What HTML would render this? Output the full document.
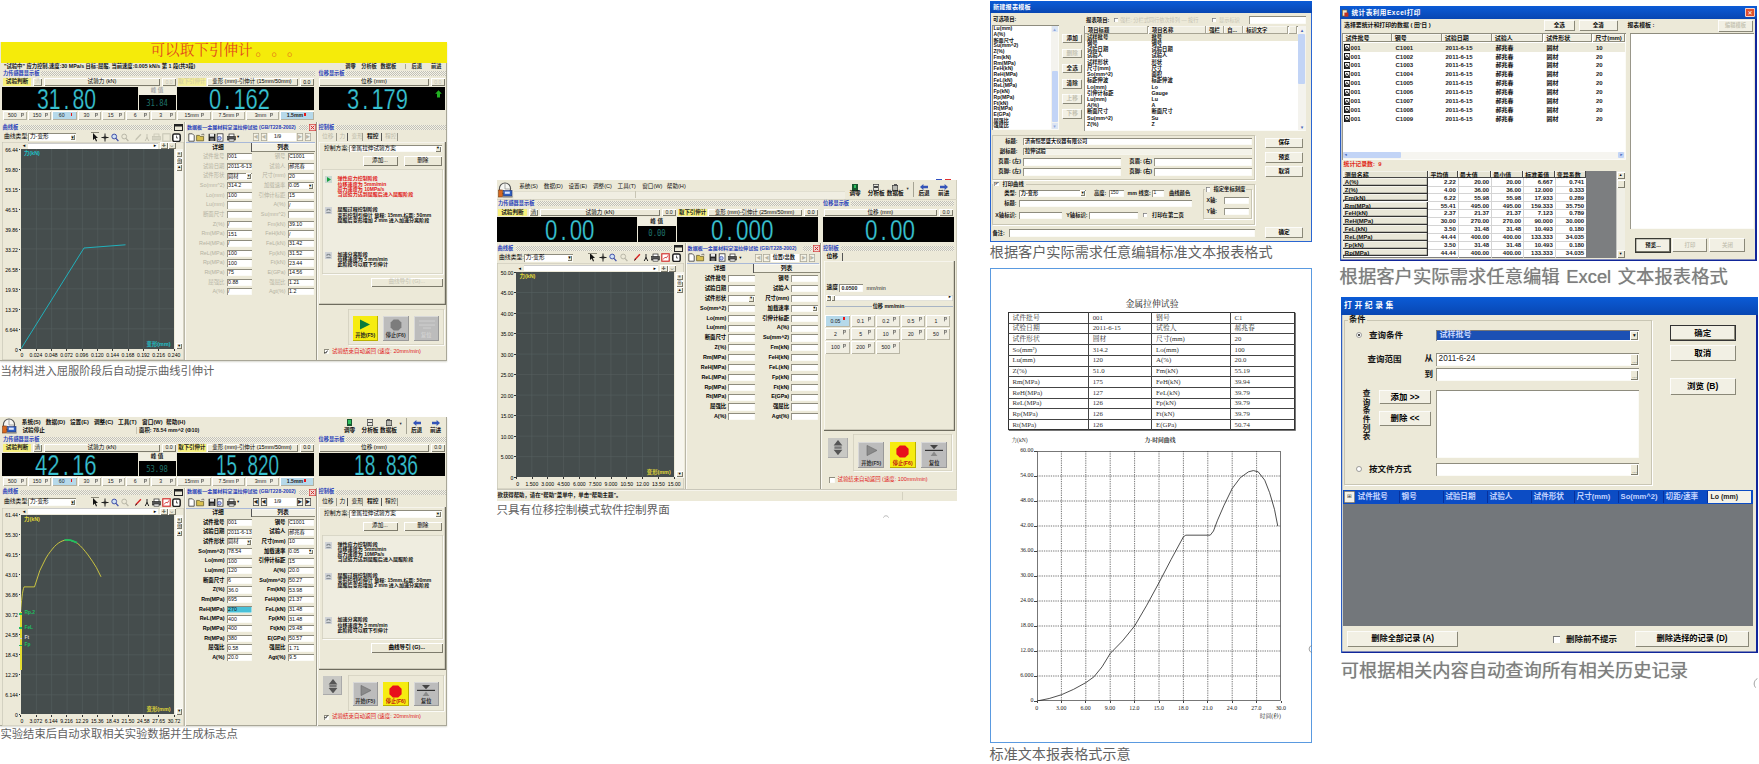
<!DOCTYPE html>
<html lang="zh-CN"><head><meta charset="utf-8"><title>试验软件界面</title>
<style>html,body{margin:0;padding:0;background:#fff;}#pg{position:relative;width:1759px;height:764px;overflow:hidden;background:#fff;font-family:'Liberation Sans','Noto Sans CJK SC','DejaVu Sans',sans-serif;}#pg div,#pg svg{position:absolute;}.t{white-space:pre;}</style></head>
<body><div id="pg">
<div style="left:0px;top:42px;width:446.9px;height:318.8px;background:#ece9d8;box-shadow:inset -1px -1px 0 #a9a798, 0 1px 1.5px #d8d8d0;"></div>
<div style="left:1px;top:42px;width:445.9px;height:21px;background:#f5eb0a;"></div>
<div class="t" style="top:42.9px;font-size:14.6px;line-height:14.6px;color:#e2481c;font-family:'Liberation Serif','Noto Serif CJK SC',serif;left:150.5px;">可以取下引伸计</div>
<div class="t" style="top:42.5px;font-size:14.6px;line-height:14.6px;color:#e2601c;font-family:'Liberation Serif','Noto Serif CJK SC',serif;left:255.5px;">。</div>
<div class="t" style="top:42.5px;font-size:14.6px;line-height:14.6px;color:#e2601c;font-family:'Liberation Serif','Noto Serif CJK SC',serif;left:271.5px;">。</div>
<div class="t" style="top:42.5px;font-size:14.6px;line-height:14.6px;color:#e2601c;font-family:'Liberation Serif','Noto Serif CJK SC',serif;left:287px;">。</div>
<div class="t" style="top:63.55px;font-size:5.3px;line-height:5.3px;color:#111;font-weight:bold;left:4px;">"试验中" 应力控制,速度:30 MPa/s 目标:屈服, 当前速度:0.005 kN/s 第 1 段(共3段)</div>
<div class="t" style="top:63.6px;font-size:5.2px;line-height:5.2px;color:#222;font-weight:bold;left:150.4px;width:400px;text-align:center;">调零</div>
<div class="t" style="top:63.6px;font-size:5.2px;line-height:5.2px;color:#222;font-weight:bold;left:169px;width:400px;text-align:center;">分析板</div>
<div class="t" style="top:63.6px;font-size:5.2px;line-height:5.2px;color:#222;font-weight:bold;left:188.4px;width:400px;text-align:center;">数据板</div>
<div class="t" style="top:63.6px;font-size:5.2px;line-height:5.2px;color:#222;font-weight:bold;left:216.7px;width:400px;text-align:center;">后退</div>
<div class="t" style="top:63.6px;font-size:5.2px;line-height:5.2px;color:#222;font-weight:bold;left:236.2px;width:400px;text-align:center;">前进</div>
<div style="left:405px;top:63.6px;width:0.7px;height:5.2px;background:#a6a494;"></div>
<div class="t" style="top:71px;font-size:5.2px;line-height:5.2px;color:#2840b8;font-weight:bold;left:3px;">力传感器显示板</div>
<div style="left:41px;top:71.1px;width:274px;height:5px;background:repeating-conic-gradient(#c2c1b6 0 25%,#f4f2e8 0 50%) 0 0/2px 2px;"></div>
<div class="t" style="top:71px;font-size:5.2px;line-height:5.2px;color:#2840b8;font-weight:bold;left:318.5px;">位移显示板</div>
<div style="left:346px;top:71.1px;width:100px;height:5px;background:repeating-conic-gradient(#c2c1b6 0 25%,#f4f2e8 0 50%) 0 0/2px 2px;"></div>
<div style="left:3px;top:78px;width:28px;height:8.2px;background:#f7f07c;"></div>
<div class="t" style="top:79.3px;font-size:5.6px;line-height:5.6px;color:#222;font-weight:bold;left:-183px;width:400px;text-align:center;">试验判断</div>
<div style="left:33px;top:78px;width:9px;height:8.2px;background:#ece9d8;box-shadow:inset 1px 1px 0 #fff,inset -1px -1px 0 #7d7b6c;"></div>
<div class="t" style="top:79.3px;font-size:5.6px;line-height:5.6px;color:#c8c6b6;left:-162.5px;width:400px;text-align:center;">清</div>
<div style="left:44px;top:78px;width:116px;height:8.2px;background:#ece9d8;box-shadow:inset 1px 1px 0 #fff,inset -1px -1px 0 #7d7b6c;"></div>
<div class="t" style="top:79.3px;font-size:5.6px;line-height:5.6px;left:-98px;width:400px;text-align:center;">试验力 (kN)</div>
<div style="left:162px;top:78px;width:13.5px;height:8.2px;background:#ece9d8;box-shadow:inset 1px 1px 0 #fff,inset -1px -1px 0 #7d7b6c;"></div>
<div class="t" style="top:79.5px;font-size:5.2px;line-height:5.2px;color:#c8c6b6;left:-31px;width:400px;text-align:center;">0.0</div>
<div style="left:178px;top:78px;width:27.5px;height:8.2px;background:#f4ee9a;"></div>
<div class="t" style="top:79.4px;font-size:5.4px;line-height:5.4px;color:#d8d2a0;font-weight:bold;left:-8.2px;width:400px;text-align:center;">取下引伸计</div>
<div style="left:207px;top:78px;width:91px;height:8.2px;background:#ece9d8;box-shadow:inset 1px 1px 0 #fff,inset -1px -1px 0 #7d7b6c;"></div>
<div class="t" style="top:79.4px;font-size:5.4px;line-height:5.4px;left:52px;width:400px;text-align:center;">变形 (mm)-引伸计 (15mm/50mm)</div>
<div style="left:300px;top:78px;width:13.5px;height:8.2px;background:#ece9d8;box-shadow:inset 1px 1px 0 #fff,inset -1px -1px 0 #7d7b6c;"></div>
<div class="t" style="top:79.5px;font-size:5.2px;line-height:5.2px;left:106.8px;width:400px;text-align:center;">0.0</div>
<div style="left:319px;top:78px;width:110px;height:8.2px;background:#ece9d8;box-shadow:inset 1px 1px 0 #fff,inset -1px -1px 0 #7d7b6c;"></div>
<div class="t" style="top:79.3px;font-size:5.6px;line-height:5.6px;left:174px;width:400px;text-align:center;">位移 (mm)</div>
<div style="left:431px;top:78px;width:13.5px;height:8.2px;background:#ece9d8;box-shadow:inset 1px 1px 0 #fff,inset -1px -1px 0 #7d7b6c;"></div>
<div class="t" style="top:79.5px;font-size:5.2px;line-height:5.2px;color:#c8c6b6;left:237.8px;width:400px;text-align:center;">0.0</div>
<div style="left:2px;top:86.8px;width:136px;height:23.2px;background:#000;"></div>
<div class="t" style="left:37.2px;top:84.65px;font-size:28.6px;line-height:28.6px;font-family:'Liberation Sans',sans-serif;color:#38c2d2;transform:scaleX(0.742);transform-origin:0 0;-webkit-text-stroke:.25px #000;">31<span style="padding:0 .139em">.</span>80</div>
<div style="left:139px;top:86.8px;width:36.5px;height:8.6px;background:#f0eee0;"></div>
<div class="t" style="top:88.3px;font-size:5.6px;line-height:5.6px;color:#aaa;font-weight:bold;left:-43px;width:400px;text-align:center;">峰 值</div>
<div style="left:139px;top:95.4px;width:36.5px;height:14.6px;background:#000;"></div>
<div class="t" style="top:98.5px;font-size:9px;line-height:9px;color:#1f7068;font-family:'DejaVu Sans Mono','Liberation Mono',monospace;left:-43px;width:400px;text-align:center;transform:scaleX(.8);">31.84</div>
<div style="left:177px;top:86.8px;width:137px;height:23.2px;background:#000;"></div>
<div class="t" style="left:208.7px;top:84.65px;font-size:28.6px;line-height:28.6px;font-family:'Liberation Sans',sans-serif;color:#38c2d2;transform:scaleX(0.767);transform-origin:0 0;-webkit-text-stroke:.25px #000;">0<span style="padding:0 .139em">.</span>162</div>
<div style="left:318.5px;top:86.8px;width:126.6px;height:23.2px;background:#000;"></div>
<div class="t" style="left:346.7px;top:84.65px;font-size:28.6px;line-height:28.6px;font-family:'Liberation Sans',sans-serif;color:#38c2d2;transform:scaleX(0.767);transform-origin:0 0;-webkit-text-stroke:.25px #000;">3<span style="padding:0 .139em">.</span>179</div>
<svg style="left:434.5px;top:89.8px;" width="7" height="8" viewBox="0 0 7 8"><path d="M3.5 .3L6.8 3.8H5V7.6H2V3.8H.2Z" fill="#22b022"/></svg>
<div style="left:3px;top:111px;width:23.5px;height:9.3px;background:#f0eee2;box-shadow:inset 1px 1px 0 #fff,inset -1px -1px 0 #b4b1a0;"></div>
<div class="t" style="top:113.05px;font-size:5.2px;line-height:5.2px;color:#222;left:-187.75px;width:400px;text-align:center;">500</div>
<svg style="left:20.5px;top:112.95px;" width="3" height="4.4" viewBox="0 0 3 4.4"><path d="M.5 0V4.4M.5 .4H2.6V2.2H.5" stroke="#444" stroke-width=".6" fill="none"/></svg>
<div style="left:28px;top:111px;width:23px;height:9.3px;background:#f0eee2;box-shadow:inset 1px 1px 0 #fff,inset -1px -1px 0 #b4b1a0;"></div>
<div class="t" style="top:113.05px;font-size:5.2px;line-height:5.2px;color:#222;left:-163px;width:400px;text-align:center;">150</div>
<svg style="left:45px;top:112.95px;" width="3" height="4.4" viewBox="0 0 3 4.4"><path d="M.5 0V4.4M.5 .4H2.6V2.2H.5" stroke="#444" stroke-width=".6" fill="none"/></svg>
<div style="left:52px;top:111px;width:24.5px;height:9.3px;background:#b6d9ea;box-shadow:inset 1px 1px 0 #fff,inset -1px -1px 0 #b4b1a0;"></div>
<div class="t" style="top:113.05px;font-size:5.2px;line-height:5.2px;color:#222;left:-138.25px;width:400px;text-align:center;">60</div>
<div style="left:70.5px;top:113.15px;width:1.8px;height:3px;background:#e81818;"></div>
<div style="left:77.5px;top:111px;width:23px;height:9.3px;background:#f0eee2;box-shadow:inset 1px 1px 0 #fff,inset -1px -1px 0 #b4b1a0;"></div>
<div class="t" style="top:113.05px;font-size:5.2px;line-height:5.2px;color:#222;left:-113.5px;width:400px;text-align:center;">30</div>
<svg style="left:94.5px;top:112.95px;" width="3" height="4.4" viewBox="0 0 3 4.4"><path d="M.5 0V4.4M.5 .4H2.6V2.2H.5" stroke="#444" stroke-width=".6" fill="none"/></svg>
<div style="left:102px;top:111px;width:22.5px;height:9.3px;background:#f0eee2;box-shadow:inset 1px 1px 0 #fff,inset -1px -1px 0 #b4b1a0;"></div>
<div class="t" style="top:113.05px;font-size:5.2px;line-height:5.2px;color:#222;left:-89.25px;width:400px;text-align:center;">15</div>
<svg style="left:118.5px;top:112.95px;" width="3" height="4.4" viewBox="0 0 3 4.4"><path d="M.5 0V4.4M.5 .4H2.6V2.2H.5" stroke="#444" stroke-width=".6" fill="none"/></svg>
<div style="left:126px;top:111px;width:23.5px;height:9.3px;background:#f0eee2;box-shadow:inset 1px 1px 0 #fff,inset -1px -1px 0 #b4b1a0;"></div>
<div class="t" style="top:113.05px;font-size:5.2px;line-height:5.2px;color:#222;left:-64.75px;width:400px;text-align:center;">6</div>
<svg style="left:143.5px;top:112.95px;" width="3" height="4.4" viewBox="0 0 3 4.4"><path d="M.5 0V4.4M.5 .4H2.6V2.2H.5" stroke="#444" stroke-width=".6" fill="none"/></svg>
<div style="left:151px;top:111px;width:24.5px;height:9.3px;background:#f0eee2;box-shadow:inset 1px 1px 0 #fff,inset -1px -1px 0 #b4b1a0;"></div>
<div class="t" style="top:113.05px;font-size:5.2px;line-height:5.2px;color:#222;left:-39.25px;width:400px;text-align:center;">3</div>
<svg style="left:169.5px;top:112.95px;" width="3" height="4.4" viewBox="0 0 3 4.4"><path d="M.5 0V4.4M.5 .4H2.6V2.2H.5" stroke="#444" stroke-width=".6" fill="none"/></svg>
<div style="left:177px;top:111px;width:33.5px;height:9.3px;background:#f0eee2;box-shadow:inset 1px 1px 0 #fff,inset -1px -1px 0 #b4b1a0;"></div>
<div class="t" style="top:113.05px;font-size:5.2px;line-height:5.2px;color:#222;left:-8.25px;width:400px;text-align:center;">15mm</div>
<svg style="left:200.75px;top:112.65px;" width="3" height="4.4" viewBox="0 0 3 4.4"><path d="M.5 0V4.4M.5 .4H2.6V2.2H.5" stroke="#444" stroke-width=".6" fill="none"/></svg>
<div style="left:212px;top:111px;width:33px;height:9.3px;background:#f0eee2;box-shadow:inset 1px 1px 0 #fff,inset -1px -1px 0 #b4b1a0;"></div>
<div class="t" style="top:113.05px;font-size:5.2px;line-height:5.2px;color:#222;left:26.5px;width:400px;text-align:center;">7.5mm</div>
<svg style="left:235.5px;top:112.65px;" width="3" height="4.4" viewBox="0 0 3 4.4"><path d="M.5 0V4.4M.5 .4H2.6V2.2H.5" stroke="#444" stroke-width=".6" fill="none"/></svg>
<div style="left:246px;top:111px;width:33px;height:9.3px;background:#f0eee2;box-shadow:inset 1px 1px 0 #fff,inset -1px -1px 0 #b4b1a0;"></div>
<div class="t" style="top:113.05px;font-size:5.2px;line-height:5.2px;color:#222;left:60.5px;width:400px;text-align:center;">3mm</div>
<svg style="left:269.5px;top:112.65px;" width="3" height="4.4" viewBox="0 0 3 4.4"><path d="M.5 0V4.4M.5 .4H2.6V2.2H.5" stroke="#444" stroke-width=".6" fill="none"/></svg>
<div style="left:280px;top:111px;width:34px;height:9.3px;background:#b6d9ea;box-shadow:inset 1px 1px 0 #fff,inset -1px -1px 0 #b4b1a0;"></div>
<div class="t" style="top:113.05px;font-size:5.2px;line-height:5.2px;color:#222;font-weight:bold;left:95px;width:400px;text-align:center;">1.5mm</div>
<div style="left:304px;top:112.85px;width:1.8px;height:3px;background:#e81818;"></div>
<div class="t" style="top:124.6px;font-size:5.2px;line-height:5.2px;color:#2840b8;font-weight:bold;left:2.5px;">曲线板</div>
<div style="left:20px;top:124.7px;width:152px;height:5px;background:repeating-conic-gradient(#c2c1b6 0 25%,#f4f2e8 0 50%) 0 0/2px 2px;"></div>
<svg style="left:173.5px;top:123.7px;" width="9" height="7" viewBox="0 0 9 7"><rect x=".5" y=".5" width="8" height="6" fill="#ece9d8" stroke="#222" stroke-width="1"/><rect x=".5" y=".5" width="8" height="2" fill="#222"/></svg>
<div class="t" style="top:124.67px;font-size:5.05px;line-height:5.05px;color:#2840b8;font-weight:bold;left:187px;">数据板—金属材料室温拉伸试验 (GB/T228-2002)</div>
<div style="left:299px;top:124.7px;width:9px;height:5px;background:repeating-conic-gradient(#c2c1b6 0 25%,#f4f2e8 0 50%) 0 0/2px 2px;"></div>
<svg style="left:309px;top:123.7px;" width="7" height="7" viewBox="0 0 7 7"><rect x=".3" y=".3" width="6.4" height="6.4" fill="#f4d8d4" stroke="#d03030" stroke-width=".7"/><path d="M1.8 1.8L5.2 5.2M5.2 1.8L1.8 5.2" stroke="#d03030" stroke-width="1"/></svg>
<div class="t" style="top:124.6px;font-size:5.2px;line-height:5.2px;color:#2840b8;font-weight:bold;left:318.5px;">控制板</div>
<div style="left:336px;top:124.7px;width:110px;height:5px;background:repeating-conic-gradient(#c2c1b6 0 25%,#f4f2e8 0 50%) 0 0/2px 2px;"></div>
<div class="t" style="top:134.1px;font-size:5.8px;line-height:5.8px;left:4px;">曲线类型:</div>
<div style="left:28px;top:133px;width:48px;height:8px;background:#fff;box-shadow:inset .9px .9px 0 #8e8c7e,inset -0.5px -0.5px 0 #f8f8f0;"></div>
<div class="t" style="top:134.2px;font-size:5.6px;line-height:5.6px;left:30px;">力-变形</div>
<div style="left:69.5px;top:133.8px;width:5.7px;height:6.4px;background:#ece9d8;box-shadow:inset 1px 1px 0 #fff,inset -1px -1px 0 #7d7b6c;"></div>
<div class="t" style="top:134.5px;font-size:5px;line-height:5px;left:-127.6px;width:400px;text-align:center;">▾</div>
<svg style="left:91.5px;top:132.5px;" width="7" height="9" viewBox="0 0 7 9"><path d="M1 0 L1 7 L2.8 5.4 L4 8.4 L5 8 L3.8 5 L6 5 Z" fill="#111"/></svg>
<svg style="left:101px;top:132.5px;" width="8" height="9" viewBox="0 0 8 9"><path d="M4 0.5V8.5M0.5 4.5H7.5" stroke="#222" stroke-width="1" fill="none"/><circle cx="4" cy="4.5" r="1.4" fill="none" stroke="#222" stroke-width=".6"/></svg>
<svg style="left:111px;top:132.5px;" width="8" height="9" viewBox="0 0 8 9"><circle cx="3.2" cy="3.5" r="2.4" fill="#cfe0f4" stroke="#4050a8" stroke-width="1"/><path d="M5 5.4L7.4 8.2" stroke="#4050a8" stroke-width="1.3"/></svg>
<svg style="left:121px;top:132.5px;" width="8" height="9" viewBox="0 0 8 9"><circle cx="3.2" cy="3.5" r="2.4" fill="none" stroke="#b9b7a8" stroke-width="1"/><path d="M5 5.4L7.4 8.2" stroke="#b9b7a8" stroke-width="1.3"/></svg>
<svg style="left:133.5px;top:132.5px;" width="8" height="9" viewBox="0 0 8 9"><path d="M1 8L2 5.4L6.4 0.8L7.4 1.8L3 6.6Z" fill="#c4c2b2"/></svg>
<svg style="left:143.5px;top:132.5px;" width="6" height="9" viewBox="0 0 6 9"><path d="M3 1V5M1.2 8L3 4.4L4.8 8" stroke="#c4c2b2" stroke-width="1" fill="none"/></svg>
<svg style="left:151.5px;top:132.5px;" width="9" height="9" viewBox="0 0 9 9"><rect x="2" y="1" width="5" height="3" fill="none" stroke="#c4c2b2" stroke-width=".7"/><rect x=".6" y="3.6" width="7.8" height="3.4" fill="#d6d4c4" stroke="#c4c2b2" stroke-width=".6"/></svg>
<svg style="left:161.5px;top:132.5px;" width="9" height="9" viewBox="0 0 9 9"><rect x=".8" y=".8" width="7.4" height="7.4" fill="none" stroke="#c4c2b2" stroke-width="1"/></svg>
<svg style="left:171.5px;top:132.5px;" width="9" height="9" viewBox="0 0 9 9"><rect x=".8" y="1" width="7.4" height="7.4" rx="1.6" fill="#fff" stroke="#222" stroke-width="1.5"/><path d="M4.5 2.6V5H6" stroke="#222" stroke-width=".7" fill="none"/></svg>
<div style="left:90.5px;top:132px;width:8.5px;height:0.6px;background:#8a8878;"></div>
<svg style="left:187.5px;top:132.5px;" width="7" height="9" viewBox="0 0 7 9"><path d="M.8 .8H4.4L6.2 2.6V8.2H.8Z" fill="#fff" stroke="#333" stroke-width=".8"/></svg>
<svg style="left:195.5px;top:132.5px;" width="9" height="9" viewBox="0 0 9 9"><path d="M.6 2.4H3.4L4.2 3.4H7.6V7.8H.6Z" fill="#d8c050" stroke="#5a5020" stroke-width=".7"/><path d="M5.4 1.6L7.6 1L8 2.4" stroke="#333" stroke-width=".6" fill="none"/></svg>
<svg style="left:207.5px;top:132.5px;" width="8" height="9" viewBox="0 0 8 9"><rect x=".6" y=".8" width="6.8" height="7.2" fill="#222"/><rect x="1.8" y=".8" width="4.2" height="2.8" fill="#e8e8e8"/><rect x="2.2" y="5.2" width="3.6" height="2.8" fill="#777"/></svg>
<svg style="left:216px;top:132.5px;" width="8" height="9" viewBox="0 0 8 9"><rect x="1.2" y=".8" width="5.8" height="7.4" fill="#fff" stroke="#333" stroke-width=".8"/><circle cx="3.4" cy="5.2" r="1.8" fill="#b8c8f0" stroke="#3040a0" stroke-width=".7"/></svg>
<svg style="left:226.5px;top:132.5px;" width="9" height="9" viewBox="0 0 9 9"><rect x="2" y="1" width="5" height="3" fill="#fff" stroke="#222" stroke-width=".7"/><rect x=".6" y="3.6" width="7.8" height="3.4" fill="#555" stroke="#222" stroke-width=".6"/><rect x="2" y="6" width="5" height="2.2" fill="#ddd" stroke="#222" stroke-width=".5"/></svg>
<div class="t" style="top:134.8px;font-size:4.4px;line-height:4.4px;left:237px;">▾</div>
<div style="left:252.5px;top:133px;width:6.5px;height:8px;background:#f4f2e6;box-shadow:inset 0 0 0 .7px #a8a696;"></div>
<div class="t" style="top:134.7px;font-size:4.6px;line-height:4.6px;color:#b8b6a6;left:55.75px;width:400px;text-align:center;">◀</div>
<div style="left:260.5px;top:133px;width:6.5px;height:8px;background:#f4f2e6;box-shadow:inset 0 0 0 .7px #a8a696;"></div>
<div class="t" style="top:134.7px;font-size:4.6px;line-height:4.6px;color:#b8b6a6;left:63.75px;width:400px;text-align:center;">◀</div>
<div style="left:296.5px;top:133px;width:6.5px;height:8px;background:#f4f2e6;box-shadow:inset 0 0 0 .7px #a8a696;"></div>
<div class="t" style="top:134.7px;font-size:4.6px;line-height:4.6px;color:#b8b6a6;left:99.75px;width:400px;text-align:center;">▶</div>
<div style="left:304.5px;top:133px;width:6.5px;height:8px;background:#f4f2e6;box-shadow:inset 0 0 0 .7px #a8a696;"></div>
<div class="t" style="top:134.7px;font-size:4.6px;line-height:4.6px;color:#b8b6a6;left:107.75px;width:400px;text-align:center;">▶</div>
<div style="left:268px;top:133px;width:27.5px;height:8px;background:#fff;"></div>
<div class="t" style="top:134.4px;font-size:5.2px;line-height:5.2px;color:#555;font-weight:bold;left:274px;">1/9</div>
<div style="left:2px;top:142px;width:181.5px;height:218px;background:#ece9d8;box-shadow:inset 0 0 0 .6px #c4c2b2;"></div>
<div style="left:28px;top:142.6px;width:130px;height:6px;background:#fff;box-shadow:inset 0 .6px 0 #999;"></div>
<div class="t" style="top:143.1px;font-size:5px;line-height:5px;left:-176px;width:400px;text-align:center;">◂</div>
<div class="t" style="top:143.1px;font-size:5px;line-height:5px;left:-45px;width:400px;text-align:center;">▸</div>
<div style="left:160px;top:142.1px;width:7.5px;height:7px;background:#ece9d8;box-shadow:inset 1px 1px 0 #fff,inset -1px -1px 0 #7d7b6c;"></div>
<div class="t" style="top:143.1px;font-size:5px;line-height:5px;left:-36.2px;width:400px;text-align:center;">✛</div>
<div style="left:168px;top:142.1px;width:7.5px;height:7px;background:#ece9d8;box-shadow:inset 1px 1px 0 #fff,inset -1px -1px 0 #7d7b6c;"></div>
<div class="t" style="top:143.1px;font-size:5px;line-height:5px;left:-28.2px;width:400px;text-align:center;">⇔</div>
<div style="left:20.5px;top:149.2px;width:153.5px;height:199.8px;background:#454d4d;"></div>
<svg style="left:20.5px;top:149.2px;" width="153.5" height="199.8" viewBox="0 0 153.5 199.8"><path d="M0 19.98 H153.5" stroke="#566060" stroke-width=".6"/><path d="M0 39.96 H153.5" stroke="#566060" stroke-width=".6"/><path d="M0 59.94 H153.5" stroke="#566060" stroke-width=".6"/><path d="M0 79.92 H153.5" stroke="#566060" stroke-width=".6"/><path d="M0 99.9 H153.5" stroke="#566060" stroke-width=".6"/><path d="M0 119.88 H153.5" stroke="#566060" stroke-width=".6"/><path d="M0 139.86 H153.5" stroke="#566060" stroke-width=".6"/><path d="M0 159.84 H153.5" stroke="#566060" stroke-width=".6"/><path d="M0 179.82 H153.5" stroke="#566060" stroke-width=".6"/><path d="M15.35 0 V199.8" stroke="#566060" stroke-width=".6"/><path d="M30.7 0 V199.8" stroke="#566060" stroke-width=".6"/><path d="M46.05 0 V199.8" stroke="#566060" stroke-width=".6"/><path d="M61.4 0 V199.8" stroke="#566060" stroke-width=".6"/><path d="M76.75 0 V199.8" stroke="#566060" stroke-width=".6"/><path d="M92.1 0 V199.8" stroke="#566060" stroke-width=".6"/><path d="M107.45 0 V199.8" stroke="#566060" stroke-width=".6"/><path d="M122.8 0 V199.8" stroke="#566060" stroke-width=".6"/><path d="M138.15 0 V199.8" stroke="#566060" stroke-width=".6"/><path d="M0 199.8L63 99L104.5 95.8" stroke="#1fb6c2" stroke-width=".95" fill="none"/></svg>
<div class="t" style="top:151px;font-size:5.4px;line-height:5.4px;color:#20c0c8;font-weight:bold;left:24px;">力(kN)</div>
<div class="t" style="top:341.8px;font-size:5.4px;line-height:5.4px;color:#20c0c8;font-weight:bold;left:-229.5px;width:400px;text-align:right;">变形(mm)</div>
<div style="left:175.2px;top:149.2px;width:7.8px;height:200.3px;background:#f7f6ee;"></div>
<div style="left:176px;top:151.2px;width:6.4px;height:6.2px;background:#ece9d8;box-shadow:inset 1px 1px 0 #fff,inset -1px -1px 0 #7d7b6c;"></div>
<div class="t" style="top:152px;font-size:4.6px;line-height:4.6px;left:-20.8px;width:400px;text-align:center;">≡</div>
<div style="left:176px;top:157.8px;width:6.4px;height:6.2px;background:#ece9d8;box-shadow:inset 1px 1px 0 #fff,inset -1px -1px 0 #7d7b6c;"></div>
<div class="t" style="top:158.6px;font-size:4.6px;line-height:4.6px;left:-20.8px;width:400px;text-align:center;">⊕</div>
<div style="left:176px;top:164.4px;width:6.4px;height:6.2px;background:#ece9d8;box-shadow:inset 1px 1px 0 #fff,inset -1px -1px 0 #7d7b6c;"></div>
<div class="t" style="top:165.2px;font-size:4.6px;line-height:4.6px;left:-20.8px;width:400px;text-align:center;">▴</div>
<div style="left:176px;top:342.5px;width:6.4px;height:6.5px;background:#ece9d8;box-shadow:inset 1px 1px 0 #fff,inset -1px -1px 0 #7d7b6c;"></div>
<div class="t" style="top:343.5px;font-size:4.6px;line-height:4.6px;left:-20.8px;width:400px;text-align:center;">▾</div>
<div class="t" style="top:147.85px;font-size:5.1px;line-height:5.1px;left:-382.1px;width:400px;text-align:right;">66.44</div>
<div style="left:18.7px;top:148.9px;width:1.8px;height:0.6px;background:#333;"></div>
<div class="t" style="top:167.83px;font-size:5.1px;line-height:5.1px;left:-382.1px;width:400px;text-align:right;">59.80</div>
<div style="left:18.7px;top:168.88px;width:1.8px;height:0.6px;background:#333;"></div>
<div class="t" style="top:187.81px;font-size:5.1px;line-height:5.1px;left:-382.1px;width:400px;text-align:right;">53.15</div>
<div style="left:18.7px;top:188.86px;width:1.8px;height:0.6px;background:#333;"></div>
<div class="t" style="top:207.79px;font-size:5.1px;line-height:5.1px;left:-382.1px;width:400px;text-align:right;">46.51</div>
<div style="left:18.7px;top:208.84px;width:1.8px;height:0.6px;background:#333;"></div>
<div class="t" style="top:227.77px;font-size:5.1px;line-height:5.1px;left:-382.1px;width:400px;text-align:right;">39.86</div>
<div style="left:18.7px;top:228.82px;width:1.8px;height:0.6px;background:#333;"></div>
<div class="t" style="top:247.75px;font-size:5.1px;line-height:5.1px;left:-382.1px;width:400px;text-align:right;">33.22</div>
<div style="left:18.7px;top:248.8px;width:1.8px;height:0.6px;background:#333;"></div>
<div class="t" style="top:267.73px;font-size:5.1px;line-height:5.1px;left:-382.1px;width:400px;text-align:right;">26.58</div>
<div style="left:18.7px;top:268.78px;width:1.8px;height:0.6px;background:#333;"></div>
<div class="t" style="top:287.71px;font-size:5.1px;line-height:5.1px;left:-382.1px;width:400px;text-align:right;">19.93</div>
<div style="left:18.7px;top:288.76px;width:1.8px;height:0.6px;background:#333;"></div>
<div class="t" style="top:307.69px;font-size:5.1px;line-height:5.1px;left:-382.1px;width:400px;text-align:right;">13.29</div>
<div style="left:18.7px;top:308.74px;width:1.8px;height:0.6px;background:#333;"></div>
<div class="t" style="top:327.67px;font-size:5.1px;line-height:5.1px;left:-382.1px;width:400px;text-align:right;">6.644</div>
<div style="left:18.7px;top:328.72px;width:1.8px;height:0.6px;background:#333;"></div>
<div class="t" style="top:347.65px;font-size:5.1px;line-height:5.1px;left:-382.1px;width:400px;text-align:right;">0</div>
<div style="left:18.7px;top:348.7px;width:1.8px;height:0.6px;background:#333;"></div>
<div class="t" style="top:353.05px;font-size:5.1px;line-height:5.1px;left:-178px;width:400px;text-align:center;">0</div>
<div style="left:20.2px;top:349px;width:0.6px;height:2px;background:#333;"></div>
<div class="t" style="top:353.05px;font-size:5.1px;line-height:5.1px;left:-164.15px;width:400px;text-align:center;">0.024</div>
<div style="left:35.55px;top:349px;width:0.6px;height:2px;background:#333;"></div>
<div class="t" style="top:353.05px;font-size:5.1px;line-height:5.1px;left:-148.8px;width:400px;text-align:center;">0.048</div>
<div style="left:50.9px;top:349px;width:0.6px;height:2px;background:#333;"></div>
<div class="t" style="top:353.05px;font-size:5.1px;line-height:5.1px;left:-133.45px;width:400px;text-align:center;">0.072</div>
<div style="left:66.25px;top:349px;width:0.6px;height:2px;background:#333;"></div>
<div class="t" style="top:353.05px;font-size:5.1px;line-height:5.1px;left:-118.1px;width:400px;text-align:center;">0.096</div>
<div style="left:81.6px;top:349px;width:0.6px;height:2px;background:#333;"></div>
<div class="t" style="top:353.05px;font-size:5.1px;line-height:5.1px;left:-102.75px;width:400px;text-align:center;">0.120</div>
<div style="left:96.95px;top:349px;width:0.6px;height:2px;background:#333;"></div>
<div class="t" style="top:353.05px;font-size:5.1px;line-height:5.1px;left:-87.4px;width:400px;text-align:center;">0.144</div>
<div style="left:112.3px;top:349px;width:0.6px;height:2px;background:#333;"></div>
<div class="t" style="top:353.05px;font-size:5.1px;line-height:5.1px;left:-72.05px;width:400px;text-align:center;">0.168</div>
<div style="left:127.65px;top:349px;width:0.6px;height:2px;background:#333;"></div>
<div class="t" style="top:353.05px;font-size:5.1px;line-height:5.1px;left:-56.7px;width:400px;text-align:center;">0.192</div>
<div style="left:143px;top:349px;width:0.6px;height:2px;background:#333;"></div>
<div class="t" style="top:353.05px;font-size:5.1px;line-height:5.1px;left:-41.35px;width:400px;text-align:center;">0.216</div>
<div style="left:158.35px;top:349px;width:0.6px;height:2px;background:#333;"></div>
<div class="t" style="top:353.05px;font-size:5.1px;line-height:5.1px;left:-26px;width:400px;text-align:center;">0.240</div>
<div style="left:173.7px;top:349px;width:0.6px;height:2px;background:#333;"></div>
<div style="left:185.5px;top:142.4px;width:130px;height:217.6px;background:#ece9d8;"></div>
<div style="left:186px;top:142.1px;width:129px;height:0.8px;background:#a8b8d8;"></div>
<div class="t" style="top:144.7px;font-size:5.8px;line-height:5.8px;color:#111;font-weight:bold;left:18px;width:400px;text-align:center;">详细</div>
<div style="left:250.5px;top:143.4px;width:64.5px;height:8.4px;background:#f2f0e4;box-shadow:inset 1px 0 0 #555, inset 0 -1px 0 #8a8878, inset 0 .6px 0 #fff;"></div>
<div class="t" style="top:144.7px;font-size:5.8px;line-height:5.8px;color:#111;font-weight:bold;left:83px;width:400px;text-align:center;">列表</div>
<div class="t" style="top:154.1px;font-size:5.4px;line-height:5.4px;color:#b4b2a2;left:-175.5px;width:400px;text-align:right;">试件批号</div>
<div style="left:226.5px;top:153.2px;width:25.5px;height:7.2px;background:#fff;box-shadow:inset .9px .9px 0 #8e8c7e,inset -0.5px -0.5px 0 #f8f8f0;"></div>
<div class="t" style="top:154.35px;font-size:5.3px;line-height:5.3px;color:#111;left:228px;">001</div>
<div class="t" style="top:154.1px;font-size:5.4px;line-height:5.4px;color:#b4b2a2;left:-114.5px;width:400px;text-align:right;">钢号</div>
<div style="left:287.5px;top:153.2px;width:26px;height:7.2px;background:#fff;box-shadow:inset .9px .9px 0 #8e8c7e,inset -0.5px -0.5px 0 #f8f8f0;"></div>
<div class="t" style="top:154.35px;font-size:5.3px;line-height:5.3px;color:#111;left:289px;">C1001</div>
<div class="t" style="top:163.75px;font-size:5.4px;line-height:5.4px;color:#b4b2a2;left:-175.5px;width:400px;text-align:right;">试验日期</div>
<div style="left:226.5px;top:162.85px;width:25.5px;height:7.2px;background:#fff;box-shadow:inset .9px .9px 0 #8e8c7e,inset -0.5px -0.5px 0 #f8f8f0;"></div>
<div class="t" style="top:164px;font-size:5.3px;line-height:5.3px;color:#111;left:228px;">2011-6-13</div>
<div class="t" style="top:163.75px;font-size:5.4px;line-height:5.4px;color:#b4b2a2;left:-114.5px;width:400px;text-align:right;">试验人</div>
<div style="left:287.5px;top:162.85px;width:26px;height:7.2px;background:#fff;box-shadow:inset .9px .9px 0 #8e8c7e,inset -0.5px -0.5px 0 #f8f8f0;"></div>
<div class="t" style="top:164px;font-size:5.3px;line-height:5.3px;color:#111;left:289px;">郝兆春</div>
<div class="t" style="top:173.4px;font-size:5.4px;line-height:5.4px;color:#b4b2a2;left:-175.5px;width:400px;text-align:right;">试件形状</div>
<div style="left:226.5px;top:172.5px;width:25.5px;height:7.2px;background:#fff;box-shadow:inset .9px .9px 0 #8e8c7e,inset -0.5px -0.5px 0 #f8f8f0;"></div>
<div class="t" style="top:173.65px;font-size:5.3px;line-height:5.3px;color:#111;left:228px;">圆材</div>
<div class="t" style="top:173.4px;font-size:5.4px;line-height:5.4px;color:#b4b2a2;left:-114.5px;width:400px;text-align:right;">尺寸(mm)</div>
<div style="left:287.5px;top:172.5px;width:26px;height:7.2px;background:#fff;box-shadow:inset .9px .9px 0 #8e8c7e,inset -0.5px -0.5px 0 #f8f8f0;"></div>
<div class="t" style="top:173.65px;font-size:5.3px;line-height:5.3px;color:#111;left:289px;">20</div>
<div style="left:246px;top:173.3px;width:5.2px;height:5.8px;background:#ece9d8;box-shadow:inset 1px 1px 0 #fff,inset -1px -1px 0 #7d7b6c;"></div>
<div class="t" style="top:173.9px;font-size:4.4px;line-height:4.4px;color:#222;left:48.6px;width:400px;text-align:center;">▾</div>
<div class="t" style="top:183.05px;font-size:5.4px;line-height:5.4px;color:#b4b2a2;left:-175.5px;width:400px;text-align:right;">So(mm^2)</div>
<div style="left:226.5px;top:182.15px;width:25.5px;height:7.2px;background:#fff;box-shadow:inset .9px .9px 0 #8e8c7e,inset -0.5px -0.5px 0 #f8f8f0;"></div>
<div class="t" style="top:183.3px;font-size:5.3px;line-height:5.3px;color:#111;left:228px;">314.2</div>
<div class="t" style="top:183.05px;font-size:5.4px;line-height:5.4px;color:#b4b2a2;left:-114.5px;width:400px;text-align:right;">加载速率</div>
<div style="left:287.5px;top:182.15px;width:26px;height:7.2px;background:#fff;box-shadow:inset .9px .9px 0 #8e8c7e,inset -0.5px -0.5px 0 #f8f8f0;"></div>
<div class="t" style="top:183.3px;font-size:5.3px;line-height:5.3px;color:#111;left:289px;">0.05</div>
<div style="left:307.5px;top:182.95px;width:5.2px;height:5.8px;background:#ece9d8;box-shadow:inset 1px 1px 0 #fff,inset -1px -1px 0 #7d7b6c;"></div>
<div class="t" style="top:183.55px;font-size:4.4px;line-height:4.4px;left:110.1px;width:400px;text-align:center;">▾</div>
<div class="t" style="top:192.7px;font-size:5.4px;line-height:5.4px;color:#b4b2a2;left:-175.5px;width:400px;text-align:right;">Lo(mm)</div>
<div style="left:226.5px;top:191.8px;width:25.5px;height:7.2px;background:#fff;box-shadow:inset .9px .9px 0 #8e8c7e,inset -0.5px -0.5px 0 #f8f8f0;"></div>
<div class="t" style="top:192.95px;font-size:5.3px;line-height:5.3px;color:#111;left:228px;">100</div>
<div class="t" style="top:192.7px;font-size:5.4px;line-height:5.4px;color:#b4b2a2;left:-114.5px;width:400px;text-align:right;">引伸计标距</div>
<div style="left:287.5px;top:191.8px;width:26px;height:7.2px;background:#fff;box-shadow:inset .9px .9px 0 #8e8c7e,inset -0.5px -0.5px 0 #f8f8f0;"></div>
<div class="t" style="top:192.95px;font-size:5.3px;line-height:5.3px;color:#111;left:289px;">15</div>
<div class="t" style="top:202.35px;font-size:5.4px;line-height:5.4px;color:#b4b2a2;left:-175.5px;width:400px;text-align:right;">Lu(mm)</div>
<div style="left:226.5px;top:201.45px;width:25.5px;height:7.2px;background:#fff;box-shadow:inset .9px .9px 0 #8e8c7e,inset -0.5px -0.5px 0 #f8f8f0;"></div>
<div class="t" style="top:202.35px;font-size:5.4px;line-height:5.4px;color:#b4b2a2;left:-114.5px;width:400px;text-align:right;">A(%)</div>
<div style="left:287.5px;top:201.45px;width:26px;height:7.2px;background:#fff;box-shadow:inset .9px .9px 0 #8e8c7e,inset -0.5px -0.5px 0 #f8f8f0;"></div>
<div class="t" style="top:202.6px;font-size:5.3px;line-height:5.3px;color:#111;left:289px;">/</div>
<div class="t" style="top:212px;font-size:5.4px;line-height:5.4px;color:#b4b2a2;left:-175.5px;width:400px;text-align:right;">断面尺寸</div>
<div style="left:226.5px;top:211.1px;width:25.5px;height:7.2px;background:#fff;box-shadow:inset .9px .9px 0 #8e8c7e,inset -0.5px -0.5px 0 #f8f8f0;"></div>
<div class="t" style="top:212px;font-size:5.4px;line-height:5.4px;color:#b4b2a2;left:-114.5px;width:400px;text-align:right;">Su(mm^2)</div>
<div style="left:287.5px;top:211.1px;width:26px;height:7.2px;background:#fff;box-shadow:inset .9px .9px 0 #8e8c7e,inset -0.5px -0.5px 0 #f8f8f0;"></div>
<div class="t" style="top:221.65px;font-size:5.4px;line-height:5.4px;color:#b4b2a2;left:-175.5px;width:400px;text-align:right;">Z(%)</div>
<div style="left:226.5px;top:220.75px;width:25.5px;height:7.2px;background:#fff;box-shadow:inset .9px .9px 0 #8e8c7e,inset -0.5px -0.5px 0 #f8f8f0;"></div>
<div class="t" style="top:221.9px;font-size:5.3px;line-height:5.3px;color:#111;left:228px;">/</div>
<div class="t" style="top:221.65px;font-size:5.4px;line-height:5.4px;color:#b4b2a2;left:-114.5px;width:400px;text-align:right;">Fm(kN)</div>
<div style="left:287.5px;top:220.75px;width:26px;height:7.2px;background:#fff;box-shadow:inset .9px .9px 0 #8e8c7e,inset -0.5px -0.5px 0 #f8f8f0;"></div>
<div class="t" style="top:221.9px;font-size:5.3px;line-height:5.3px;color:#111;left:289px;">39.10</div>
<div class="t" style="top:231.3px;font-size:5.4px;line-height:5.4px;color:#b4b2a2;left:-175.5px;width:400px;text-align:right;">Rm(MPa)</div>
<div style="left:226.5px;top:230.4px;width:25.5px;height:7.2px;background:#fff;box-shadow:inset .9px .9px 0 #8e8c7e,inset -0.5px -0.5px 0 #f8f8f0;"></div>
<div class="t" style="top:231.55px;font-size:5.3px;line-height:5.3px;color:#111;left:228px;">151</div>
<div class="t" style="top:231.3px;font-size:5.4px;line-height:5.4px;color:#b4b2a2;left:-114.5px;width:400px;text-align:right;">FeH(kN)</div>
<div style="left:287.5px;top:230.4px;width:26px;height:7.2px;background:#fff;box-shadow:inset .9px .9px 0 #8e8c7e,inset -0.5px -0.5px 0 #f8f8f0;"></div>
<div class="t" style="top:231.55px;font-size:5.3px;line-height:5.3px;color:#111;left:289px;">/</div>
<div class="t" style="top:240.95px;font-size:5.4px;line-height:5.4px;color:#b4b2a2;left:-175.5px;width:400px;text-align:right;">ReH(MPa)</div>
<div style="left:226.5px;top:240.05px;width:25.5px;height:7.2px;background:#fff;box-shadow:inset .9px .9px 0 #8e8c7e,inset -0.5px -0.5px 0 #f8f8f0;"></div>
<div class="t" style="top:241.2px;font-size:5.3px;line-height:5.3px;color:#111;left:228px;">/</div>
<div class="t" style="top:240.95px;font-size:5.4px;line-height:5.4px;color:#b4b2a2;left:-114.5px;width:400px;text-align:right;">FeL(kN)</div>
<div style="left:287.5px;top:240.05px;width:26px;height:7.2px;background:#fff;box-shadow:inset .9px .9px 0 #8e8c7e,inset -0.5px -0.5px 0 #f8f8f0;"></div>
<div class="t" style="top:241.2px;font-size:5.3px;line-height:5.3px;color:#111;left:289px;">31.42</div>
<div class="t" style="top:250.6px;font-size:5.4px;line-height:5.4px;color:#b4b2a2;left:-175.5px;width:400px;text-align:right;">ReL(MPa)</div>
<div style="left:226.5px;top:249.7px;width:25.5px;height:7.2px;background:#fff;box-shadow:inset .9px .9px 0 #8e8c7e,inset -0.5px -0.5px 0 #f8f8f0;"></div>
<div class="t" style="top:250.85px;font-size:5.3px;line-height:5.3px;color:#111;left:228px;">100</div>
<div class="t" style="top:250.6px;font-size:5.4px;line-height:5.4px;color:#b4b2a2;left:-114.5px;width:400px;text-align:right;">Fp(kN)</div>
<div style="left:287.5px;top:249.7px;width:26px;height:7.2px;background:#fff;box-shadow:inset .9px .9px 0 #8e8c7e,inset -0.5px -0.5px 0 #f8f8f0;"></div>
<div class="t" style="top:250.85px;font-size:5.3px;line-height:5.3px;color:#111;left:289px;">31.52</div>
<div class="t" style="top:260.25px;font-size:5.4px;line-height:5.4px;color:#b4b2a2;left:-175.5px;width:400px;text-align:right;">Rp(MPa)</div>
<div style="left:226.5px;top:259.35px;width:25.5px;height:7.2px;background:#fff;box-shadow:inset .9px .9px 0 #8e8c7e,inset -0.5px -0.5px 0 #f8f8f0;"></div>
<div class="t" style="top:260.5px;font-size:5.3px;line-height:5.3px;color:#111;left:228px;">100</div>
<div class="t" style="top:260.25px;font-size:5.4px;line-height:5.4px;color:#b4b2a2;left:-114.5px;width:400px;text-align:right;">Ft(kN)</div>
<div style="left:287.5px;top:259.35px;width:26px;height:7.2px;background:#fff;box-shadow:inset .9px .9px 0 #8e8c7e,inset -0.5px -0.5px 0 #f8f8f0;"></div>
<div class="t" style="top:260.5px;font-size:5.3px;line-height:5.3px;color:#111;left:289px;">23.44</div>
<div class="t" style="top:269.9px;font-size:5.4px;line-height:5.4px;color:#b4b2a2;left:-175.5px;width:400px;text-align:right;">Rt(MPa)</div>
<div style="left:226.5px;top:269px;width:25.5px;height:7.2px;background:#fff;box-shadow:inset .9px .9px 0 #8e8c7e,inset -0.5px -0.5px 0 #f8f8f0;"></div>
<div class="t" style="top:270.15px;font-size:5.3px;line-height:5.3px;color:#111;left:228px;">75</div>
<div class="t" style="top:269.9px;font-size:5.4px;line-height:5.4px;color:#b4b2a2;left:-114.5px;width:400px;text-align:right;">E(GPa)</div>
<div style="left:287.5px;top:269px;width:26px;height:7.2px;background:#fff;box-shadow:inset .9px .9px 0 #8e8c7e,inset -0.5px -0.5px 0 #f8f8f0;"></div>
<div class="t" style="top:270.15px;font-size:5.3px;line-height:5.3px;color:#111;left:289px;">14.56</div>
<div class="t" style="top:279.55px;font-size:5.4px;line-height:5.4px;color:#b4b2a2;left:-175.5px;width:400px;text-align:right;">屈强比</div>
<div style="left:226.5px;top:278.65px;width:25.5px;height:7.2px;background:#fff;box-shadow:inset .9px .9px 0 #8e8c7e,inset -0.5px -0.5px 0 #f8f8f0;"></div>
<div class="t" style="top:279.8px;font-size:5.3px;line-height:5.3px;color:#111;left:228px;">0.88</div>
<div class="t" style="top:279.55px;font-size:5.4px;line-height:5.4px;color:#b4b2a2;left:-114.5px;width:400px;text-align:right;">强屈比</div>
<div style="left:287.5px;top:278.65px;width:26px;height:7.2px;background:#fff;box-shadow:inset .9px .9px 0 #8e8c7e,inset -0.5px -0.5px 0 #f8f8f0;"></div>
<div class="t" style="top:279.8px;font-size:5.3px;line-height:5.3px;color:#111;left:289px;">1.21</div>
<div class="t" style="top:289.2px;font-size:5.4px;line-height:5.4px;color:#b4b2a2;left:-175.5px;width:400px;text-align:right;">A(%)</div>
<div style="left:226.5px;top:288.3px;width:25.5px;height:7.2px;background:#fff;box-shadow:inset .9px .9px 0 #8e8c7e,inset -0.5px -0.5px 0 #f8f8f0;"></div>
<div class="t" style="top:289.45px;font-size:5.3px;line-height:5.3px;color:#111;left:228px;">/</div>
<div class="t" style="top:289.2px;font-size:5.4px;line-height:5.4px;color:#b4b2a2;left:-114.5px;width:400px;text-align:right;">Agt(%)</div>
<div style="left:287.5px;top:288.3px;width:26px;height:7.2px;background:#fff;box-shadow:inset .9px .9px 0 #8e8c7e,inset -0.5px -0.5px 0 #f8f8f0;"></div>
<div class="t" style="top:289.45px;font-size:5.3px;line-height:5.3px;color:#111;left:289px;">1.2</div>
<div style="left:184px;top:122px;width:0.9px;height:238px;background:#b9b7a8;"></div>
<div style="left:185px;top:122px;width:0.6px;height:238px;background:#fbfaf4;"></div>
<div style="left:315.8px;top:122px;width:1px;height:238px;background:#9c9a8c;"></div>
<div style="left:316.8px;top:122px;width:0.8px;height:238px;background:#fbfaf4;"></div>
<div class="t" style="top:133.6px;font-size:5.8px;line-height:5.8px;color:#bdbbaa;left:322px;">位移</div>
<div class="t" style="top:133.6px;font-size:5.8px;line-height:5.8px;color:#bdbbaa;left:339.5px;">力</div>
<div class="t" style="top:133.6px;font-size:5.8px;line-height:5.8px;color:#bdbbaa;left:351.5px;">变形</div>
<div class="t" style="top:133.6px;font-size:5.8px;line-height:5.8px;color:#111;font-weight:bold;left:367px;">程控</div>
<div class="t" style="top:133.6px;font-size:5.8px;line-height:5.8px;color:#bdbbaa;left:385px;">程控</div>
<div style="left:335.5px;top:132.5px;width:0.8px;height:8px;background:#99978a;"></div>
<div style="left:346.5px;top:132.5px;width:0.8px;height:8px;background:#555;"></div>
<div style="left:362px;top:132.5px;width:0.8px;height:8px;background:#99978a;"></div>
<div style="left:381px;top:132.5px;width:0.8px;height:8px;background:#555;"></div>
<div style="left:397px;top:132.5px;width:0.8px;height:8px;background:#99978a;"></div>
<div style="left:319px;top:141.5px;width:126.5px;height:163px;background:#ece9d8;box-shadow:inset -1.2px -1.2px 0 #6e6c5e, inset .6px .6px 0 #fff;"></div>
<div class="t" style="top:145.7px;font-size:5.8px;line-height:5.8px;left:324px;">控制方案:</div>
<div style="left:349px;top:144.8px;width:92.5px;height:7.6px;background:#fff;box-shadow:inset .9px .9px 0 #8e8c7e,inset -0.5px -0.5px 0 #f8f8f0;"></div>
<div class="t" style="top:145.9px;font-size:5.6px;line-height:5.6px;left:351px;">金属拉伸试验方案</div>
<div style="left:435px;top:145.6px;width:5.8px;height:6px;background:#ece9d8;box-shadow:inset 1px 1px 0 #fff,inset -1px -1px 0 #7d7b6c;"></div>
<div class="t" style="top:146.3px;font-size:4.6px;line-height:4.6px;left:237.9px;width:400px;text-align:center;">▾</div>
<div style="left:362.5px;top:156px;width:35px;height:9.5px;background:#ece9d8;box-shadow:inset 1px 1px 0 #fff,inset -1px -1px 0 #7d7b6c;"></div>
<div class="t" style="top:157.95px;font-size:5.6px;line-height:5.6px;left:180px;width:400px;text-align:center;">添加...</div>
<div style="left:404px;top:156px;width:37.5px;height:9.5px;background:#ece9d8;box-shadow:inset 1px 1px 0 #fff,inset -1px -1px 0 #7d7b6c;"></div>
<div class="t" style="top:157.95px;font-size:5.6px;line-height:5.6px;left:222.75px;width:400px;text-align:center;">删除</div>
<div style="left:321.5px;top:169px;width:121px;height:104.5px;background:#efede0;box-shadow:inset 0 0 0 .8px #d2cfbe, .8px .8px 0 #fff;"></div>
<svg style="left:325px;top:176px;" width="7" height="7" viewBox="0 0 7 7"><rect width="7" height="7" fill="#c8d8d0"/><path d="M2 1L6 3.5L2 6Z" fill="#18a040"/></svg>
<div class="t" style="top:176.47px;font-size:5.05px;line-height:5.05px;color:#e01818;font-weight:bold;left:337.5px;">弹性应力控制阶段</div>
<div class="t" style="top:181.62px;font-size:5.05px;line-height:5.05px;color:#e01818;font-weight:bold;left:337.5px;">位移速度为 5mm/min</div>
<div class="t" style="top:186.78px;font-size:5.05px;line-height:5.05px;color:#e01818;font-weight:bold;left:337.5px;">应力速度为 10MPa/s</div>
<div class="t" style="top:191.92px;font-size:5.05px;line-height:5.05px;color:#e01818;font-weight:bold;left:337.5px;">当试验力达到屈服后进入屈服阶段</div>
<svg style="left:325px;top:207px;" width="7" height="7" viewBox="0 0 7 7"><rect width="7" height="7" fill="#cfd2d6"/><path d="M1.4 5.6H5.6M2 4V2.4H5V4" stroke="#70787c" stroke-width=".8" fill="none"/></svg>
<div class="t" style="top:207.47px;font-size:5.05px;line-height:5.05px;color:#111;font-weight:bold;left:337.5px;">屈服过程控制阶段</div>
<div class="t" style="top:212.62px;font-size:5.05px;line-height:5.05px;color:#111;font-weight:bold;left:337.5px;">变形控制引伸计 量程: 15mm,标距: 50mm</div>
<div class="t" style="top:217.78px;font-size:5.05px;line-height:5.05px;color:#111;font-weight:bold;left:337.5px;">屈服后变形增加 2 mm 进入加速分离阶段</div>
<svg style="left:325px;top:251.5px;" width="7" height="7" viewBox="0 0 7 7"><rect width="7" height="7" fill="#cfd2d6"/><path d="M1.4 5.6H5.6M2 4V2.4H5V4" stroke="#70787c" stroke-width=".8" fill="none"/></svg>
<div class="t" style="top:251.97px;font-size:5.05px;line-height:5.05px;color:#111;font-weight:bold;left:337.5px;">加速分离阶段</div>
<div class="t" style="top:257.12px;font-size:5.05px;line-height:5.05px;color:#111;font-weight:bold;left:337.5px;">位移速度为 5 mm/min</div>
<div class="t" style="top:262.28px;font-size:5.05px;line-height:5.05px;color:#111;font-weight:bold;left:337.5px;">此阶段可以取下引伸计</div>
<div style="left:371px;top:277.5px;width:71.5px;height:9.5px;background:#ece9d8;box-shadow:inset 1px 1px 0 #fff,inset -1px -1px 0 #7d7b6c;"></div>
<div class="t" style="top:279.45px;font-size:5.6px;line-height:5.6px;color:#c6c4b4;left:206.75px;width:400px;text-align:center;">曲线导引 (G)...</div>
<div style="left:347.5px;top:309px;width:96px;height:36px;box-shadow:inset 0 0 0 .8px #d2cfbe, .8px .8px 0 #fff;"></div>
<div style="left:352.5px;top:316px;width:25.5px;height:24.5px;background:#f6ec10;box-shadow:inset -1px -1px 0 #b8b000;"></div>
<svg style="left:359.25px;top:319.4px;" width="12" height="11" viewBox="0 0 12 11"><path d="M1 0.4L11 5.4L1 10.6Z" fill="#0a7a3c"/></svg>
<div class="t" style="top:333.3px;font-size:5.2px;line-height:5.2px;color:#222;font-weight:bold;left:165.25px;width:400px;text-align:center;">开始(F5)</div>
<div style="left:383px;top:316px;width:25.5px;height:24.5px;background:#bcbcbc;box-shadow:inset -1px -1px 0 #999, inset 1px 1px 0 #d8d8d8;"></div>
<svg style="left:389.75px;top:319px;" width="12" height="12" viewBox="0 0 12 12"><path d="M3.6 .6H8.4L11.4 3.6V8.4L8.4 11.4H3.6L.6 8.4V3.6Z" fill="#7c7c7c"/></svg>
<div class="t" style="top:333.3px;font-size:5.2px;line-height:5.2px;color:#333;font-weight:bold;left:195.75px;width:400px;text-align:center;">停止(F6)</div>
<div style="left:413.5px;top:316px;width:25.5px;height:24.5px;background:#bcbcbc;box-shadow:inset -1px -1px 0 #999, inset 1px 1px 0 #d8d8d8;"></div>
<svg style="left:416.5px;top:319px;" width="20" height="12" viewBox="0 0 20 12"><path d="M2 2H18M2 6H18M6 9H14" stroke="#cfcfcf" stroke-width="1"/></svg>
<div class="t" style="top:333.3px;font-size:5.2px;line-height:5.2px;color:#d2d2d2;font-weight:bold;left:226.25px;width:400px;text-align:center;">复位</div>
<div style="left:323.5px;top:349px;width:5.3px;height:5.3px;background:#fff;box-shadow:inset .9px .9px 0 #8e8c7e,inset -0.5px -0.5px 0 #f8f8f0;"></div>
<svg style="left:324.3px;top:349.8px;" width="4" height="4" viewBox="0 0 4 4"><path d="M.5 2L1.6 3.2L3.6 .6" stroke="#111" stroke-width=".9" fill="none"/></svg>
<div class="t" style="top:348.85px;font-size:5.5px;line-height:5.5px;color:#e01818;left:332px;">试验结束自动返回 (速度: 20mm/min)</div>
<div class="t" style="top:365.68px;font-size:11.25px;line-height:11.25px;color:#626262;left:0.5px;">当材料进入屈服阶段后自动提示曲线引伸计</div>
<div style="left:0px;top:417px;width:446.9px;height:309.3px;background:#ece9d8;box-shadow:inset -1px -1px 0 #a9a798, 0 1px 1.5px #d8d8d0;"></div>
<svg style="left:2px;top:417.8px;" width="15" height="16" viewBox="0 0 15 16"><circle cx="7" cy="6.6" r="5.6" fill="#f6f6f2" stroke="#555" stroke-width="1.1"/><path d="M7 1.4V7H12" stroke="#888" stroke-width=".7" fill="none"/><rect x=".6" y="8" width="4" height="7" fill="#d86820" stroke="#7a3a10" stroke-width=".6"/><rect x="5.6" y="8.6" width="8.4" height="5.4" fill="#3060c0" stroke="#203070" stroke-width=".6"/><rect x="6.8" y="9.6" width="5" height="2.2" fill="#dfe8ff"/><rect x="4.6" y="14" width="10" height="1.6" fill="#888"/></svg>
<div class="t" style="top:419.55px;font-size:5.7px;line-height:5.7px;color:#111;font-weight:bold;left:21.8px;">系统(S)</div>
<div class="t" style="top:419.55px;font-size:5.7px;line-height:5.7px;color:#111;font-weight:bold;left:45.85px;">数据(D)</div>
<div class="t" style="top:419.55px;font-size:5.7px;line-height:5.7px;color:#111;font-weight:bold;left:69.9px;">设置(E)</div>
<div class="t" style="top:419.55px;font-size:5.7px;line-height:5.7px;color:#111;font-weight:bold;left:93.95px;">调整(C)</div>
<div class="t" style="top:419.55px;font-size:5.7px;line-height:5.7px;color:#111;font-weight:bold;left:118px;">工具(T)</div>
<div class="t" style="top:419.55px;font-size:5.7px;line-height:5.7px;color:#111;font-weight:bold;left:142.05px;">窗口(W)</div>
<div class="t" style="top:419.55px;font-size:5.7px;line-height:5.7px;color:#111;font-weight:bold;left:166.1px;">帮助(H)</div>
<div class="t" style="top:427.8px;font-size:5.6px;line-height:5.6px;color:#111;font-weight:bold;left:22.5px;">试验停止</div>
<div class="t" style="top:427.9px;font-size:5.4px;line-height:5.4px;color:#111;font-weight:bold;left:139px;">面积: 78.54 mm^2 (Φ10)</div>
<div style="left:135.5px;top:427px;width:0.7px;height:7px;background:#c8c5b4;"></div>
<div style="left:346.9px;top:419.2px;width:5.4px;height:7px;background:#185830;"></div>
<div style="left:348.1px;top:420.2px;width:2.8px;height:3.4px;background:#30c060;"></div>
<div class="t" style="top:428px;font-size:5.6px;line-height:5.6px;color:#111;font-weight:bold;left:149.5px;width:400px;text-align:center;">调零</div>
<div style="left:367px;top:419.2px;width:6px;height:6.8px;background:#e8e8e0;box-shadow:inset 0 0 0 .7px #444;"></div>
<div style="left:368.2px;top:421.6px;width:3.6px;height:1.2px;background:#444;"></div>
<div class="t" style="top:428px;font-size:5.6px;line-height:5.6px;color:#111;font-weight:bold;left:170px;width:400px;text-align:center;">分析板</div>
<div style="left:385.5px;top:420.2px;width:6px;height:5.8px;background:#b8b8b0;box-shadow:inset 0 0 0 .7px #444;"></div>
<div style="left:386.9px;top:419px;width:3.2px;height:2px;background:#555;"></div>
<div class="t" style="top:428px;font-size:5.6px;line-height:5.6px;color:#111;font-weight:bold;left:188.5px;width:400px;text-align:center;">数据板</div>
<svg style="left:412.5px;top:419.6px;" width="8" height="6" viewBox="0 0 8 6"><path d="M0 3L3.4 0V1.8H8V4.2H3.4V6Z" fill="#3454b8"/></svg>
<div class="t" style="top:428px;font-size:5.6px;line-height:5.6px;color:#111;font-weight:bold;left:216.5px;width:400px;text-align:center;">后退</div>
<svg style="left:431.5px;top:419.6px;" width="8" height="6" viewBox="0 0 8 6"><path d="M8 3L4.6 0V1.8H0V4.2H4.6V6Z" fill="#3454b8"/></svg>
<div class="t" style="top:428px;font-size:5.6px;line-height:5.6px;color:#111;font-weight:bold;left:235.5px;width:400px;text-align:center;">前进</div>
<div class="t" style="top:422.4px;font-size:4.4px;line-height:4.4px;color:#333;left:200.5px;width:400px;text-align:center;">▾</div>
<div style="left:405.5px;top:417.6px;width:0.7px;height:16.7px;background:#a6a494;"></div>
<div class="t" style="top:436.5px;font-size:5.2px;line-height:5.2px;color:#2840b8;font-weight:bold;left:3px;">力传感器显示板</div>
<div style="left:41px;top:436.6px;width:274px;height:5px;background:repeating-conic-gradient(#c2c1b6 0 25%,#f4f2e8 0 50%) 0 0/2px 2px;"></div>
<div class="t" style="top:436.5px;font-size:5.2px;line-height:5.2px;color:#2840b8;font-weight:bold;left:318.5px;">位移显示板</div>
<div style="left:346px;top:436.6px;width:100px;height:5px;background:repeating-conic-gradient(#c2c1b6 0 25%,#f4f2e8 0 50%) 0 0/2px 2px;"></div>
<div style="left:3px;top:443.5px;width:28px;height:8.2px;background:#f7f07c;"></div>
<div class="t" style="top:444.8px;font-size:5.6px;line-height:5.6px;color:#222;font-weight:bold;left:-183px;width:400px;text-align:center;">试验判断</div>
<div style="left:33px;top:443.5px;width:9px;height:8.2px;background:#ece9d8;box-shadow:inset 1px 1px 0 #fff,inset -1px -1px 0 #7d7b6c;"></div>
<div class="t" style="top:444.8px;font-size:5.6px;line-height:5.6px;color:#222;left:-162.5px;width:400px;text-align:center;">清</div>
<div style="left:44px;top:443.5px;width:116px;height:8.2px;background:#ece9d8;box-shadow:inset 1px 1px 0 #fff,inset -1px -1px 0 #7d7b6c;"></div>
<div class="t" style="top:444.8px;font-size:5.6px;line-height:5.6px;left:-98px;width:400px;text-align:center;">试验力 (kN)</div>
<div style="left:162px;top:443.5px;width:13.5px;height:8.2px;background:#ece9d8;box-shadow:inset 1px 1px 0 #fff,inset -1px -1px 0 #7d7b6c;"></div>
<div class="t" style="top:445px;font-size:5.2px;line-height:5.2px;color:#222;left:-31px;width:400px;text-align:center;">0.0</div>
<div style="left:178px;top:443.5px;width:27.5px;height:8.2px;background:#f7f07c;"></div>
<div class="t" style="top:444.9px;font-size:5.4px;line-height:5.4px;color:#222;font-weight:bold;left:-8.2px;width:400px;text-align:center;">取下引伸计</div>
<div style="left:207px;top:443.5px;width:91px;height:8.2px;background:#ece9d8;box-shadow:inset 1px 1px 0 #fff,inset -1px -1px 0 #7d7b6c;"></div>
<div class="t" style="top:444.9px;font-size:5.4px;line-height:5.4px;left:52px;width:400px;text-align:center;">变形 (mm)-引伸计 (15mm/50mm)</div>
<div style="left:300px;top:443.5px;width:13.5px;height:8.2px;background:#ece9d8;box-shadow:inset 1px 1px 0 #fff,inset -1px -1px 0 #7d7b6c;"></div>
<div class="t" style="top:445px;font-size:5.2px;line-height:5.2px;left:106.8px;width:400px;text-align:center;">0.0</div>
<div style="left:319px;top:443.5px;width:110px;height:8.2px;background:#ece9d8;box-shadow:inset 1px 1px 0 #fff,inset -1px -1px 0 #7d7b6c;"></div>
<div class="t" style="top:444.8px;font-size:5.6px;line-height:5.6px;left:174px;width:400px;text-align:center;">位移 (mm)</div>
<div style="left:431px;top:443.5px;width:13.5px;height:8.2px;background:#ece9d8;box-shadow:inset 1px 1px 0 #fff,inset -1px -1px 0 #7d7b6c;"></div>
<div class="t" style="top:445px;font-size:5.2px;line-height:5.2px;color:#222;left:237.8px;width:400px;text-align:center;">0.0</div>
<div style="left:2px;top:452.8px;width:136px;height:23.7px;background:#000;"></div>
<div class="t" style="left:34.7px;top:450.9px;font-size:28.6px;line-height:28.6px;font-family:'Liberation Sans',sans-serif;color:#38c2d2;transform:scaleX(0.774);transform-origin:0 0;-webkit-text-stroke:.25px #000;">42<span style="padding:0 .139em">.</span>16</div>
<div style="left:139px;top:452.8px;width:36.5px;height:8.1px;background:#f0eee0;"></div>
<div class="t" style="top:454.05px;font-size:5.6px;line-height:5.6px;color:#222;font-weight:bold;left:-43px;width:400px;text-align:center;">峰 值</div>
<div style="left:139px;top:460.9px;width:36.5px;height:15.6px;background:#000;"></div>
<div class="t" style="top:464.5px;font-size:9px;line-height:9px;color:#1f7068;font-family:'DejaVu Sans Mono','Liberation Mono',monospace;left:-43px;width:400px;text-align:center;transform:scaleX(.8);">53.98</div>
<div style="left:177px;top:452.8px;width:137px;height:23.7px;background:#000;"></div>
<div class="t" style="left:216.2px;top:450.9px;font-size:28.6px;line-height:28.6px;font-family:'Liberation Sans',sans-serif;color:#38c2d2;transform:scaleX(0.660);transform-origin:0 0;-webkit-text-stroke:.25px #000;">15<span style="padding:0 .139em">.</span>820</div>
<div style="left:318.5px;top:452.8px;width:126.6px;height:23.7px;background:#000;"></div>
<div class="t" style="left:353.7px;top:450.9px;font-size:28.6px;line-height:28.6px;font-family:'Liberation Sans',sans-serif;color:#38c2d2;transform:scaleX(0.671);transform-origin:0 0;-webkit-text-stroke:.25px #000;">18<span style="padding:0 .139em">.</span>836</div>
<div style="left:3px;top:476.9px;width:23.5px;height:9.2px;background:#f0eee2;box-shadow:inset 1px 1px 0 #fff,inset -1px -1px 0 #b4b1a0;"></div>
<div class="t" style="top:478.9px;font-size:5.2px;line-height:5.2px;color:#222;left:-187.75px;width:400px;text-align:center;">500</div>
<svg style="left:20.5px;top:478.8px;" width="3" height="4.4" viewBox="0 0 3 4.4"><path d="M.5 0V4.4M.5 .4H2.6V2.2H.5" stroke="#444" stroke-width=".6" fill="none"/></svg>
<div style="left:28px;top:476.9px;width:23px;height:9.2px;background:#f0eee2;box-shadow:inset 1px 1px 0 #fff,inset -1px -1px 0 #b4b1a0;"></div>
<div class="t" style="top:478.9px;font-size:5.2px;line-height:5.2px;color:#222;left:-163px;width:400px;text-align:center;">150</div>
<svg style="left:45px;top:478.8px;" width="3" height="4.4" viewBox="0 0 3 4.4"><path d="M.5 0V4.4M.5 .4H2.6V2.2H.5" stroke="#444" stroke-width=".6" fill="none"/></svg>
<div style="left:52px;top:476.9px;width:24.5px;height:9.2px;background:#b6d9ea;box-shadow:inset 1px 1px 0 #fff,inset -1px -1px 0 #b4b1a0;"></div>
<div class="t" style="top:478.9px;font-size:5.2px;line-height:5.2px;color:#222;left:-138.25px;width:400px;text-align:center;">60</div>
<div style="left:70.5px;top:479px;width:1.8px;height:3px;background:#e81818;"></div>
<div style="left:77.5px;top:476.9px;width:23px;height:9.2px;background:#f0eee2;box-shadow:inset 1px 1px 0 #fff,inset -1px -1px 0 #b4b1a0;"></div>
<div class="t" style="top:478.9px;font-size:5.2px;line-height:5.2px;color:#222;left:-113.5px;width:400px;text-align:center;">30</div>
<svg style="left:94.5px;top:478.8px;" width="3" height="4.4" viewBox="0 0 3 4.4"><path d="M.5 0V4.4M.5 .4H2.6V2.2H.5" stroke="#444" stroke-width=".6" fill="none"/></svg>
<div style="left:102px;top:476.9px;width:22.5px;height:9.2px;background:#f0eee2;box-shadow:inset 1px 1px 0 #fff,inset -1px -1px 0 #b4b1a0;"></div>
<div class="t" style="top:478.9px;font-size:5.2px;line-height:5.2px;color:#222;left:-89.25px;width:400px;text-align:center;">15</div>
<svg style="left:118.5px;top:478.8px;" width="3" height="4.4" viewBox="0 0 3 4.4"><path d="M.5 0V4.4M.5 .4H2.6V2.2H.5" stroke="#444" stroke-width=".6" fill="none"/></svg>
<div style="left:126px;top:476.9px;width:23.5px;height:9.2px;background:#f0eee2;box-shadow:inset 1px 1px 0 #fff,inset -1px -1px 0 #b4b1a0;"></div>
<div class="t" style="top:478.9px;font-size:5.2px;line-height:5.2px;color:#222;left:-64.75px;width:400px;text-align:center;">6</div>
<svg style="left:143.5px;top:478.8px;" width="3" height="4.4" viewBox="0 0 3 4.4"><path d="M.5 0V4.4M.5 .4H2.6V2.2H.5" stroke="#444" stroke-width=".6" fill="none"/></svg>
<div style="left:151px;top:476.9px;width:24.5px;height:9.2px;background:#f0eee2;box-shadow:inset 1px 1px 0 #fff,inset -1px -1px 0 #b4b1a0;"></div>
<div class="t" style="top:478.9px;font-size:5.2px;line-height:5.2px;color:#222;left:-39.25px;width:400px;text-align:center;">3</div>
<svg style="left:169.5px;top:478.8px;" width="3" height="4.4" viewBox="0 0 3 4.4"><path d="M.5 0V4.4M.5 .4H2.6V2.2H.5" stroke="#444" stroke-width=".6" fill="none"/></svg>
<div style="left:177px;top:476.9px;width:33.5px;height:9.2px;background:#f0eee2;box-shadow:inset 1px 1px 0 #fff,inset -1px -1px 0 #b4b1a0;"></div>
<div class="t" style="top:478.9px;font-size:5.2px;line-height:5.2px;color:#222;left:-8.25px;width:400px;text-align:center;">15mm</div>
<svg style="left:200.75px;top:478.5px;" width="3" height="4.4" viewBox="0 0 3 4.4"><path d="M.5 0V4.4M.5 .4H2.6V2.2H.5" stroke="#444" stroke-width=".6" fill="none"/></svg>
<div style="left:212px;top:476.9px;width:33px;height:9.2px;background:#f0eee2;box-shadow:inset 1px 1px 0 #fff,inset -1px -1px 0 #b4b1a0;"></div>
<div class="t" style="top:478.9px;font-size:5.2px;line-height:5.2px;color:#222;left:26.5px;width:400px;text-align:center;">7.5mm</div>
<svg style="left:235.5px;top:478.5px;" width="3" height="4.4" viewBox="0 0 3 4.4"><path d="M.5 0V4.4M.5 .4H2.6V2.2H.5" stroke="#444" stroke-width=".6" fill="none"/></svg>
<div style="left:246px;top:476.9px;width:33px;height:9.2px;background:#f0eee2;box-shadow:inset 1px 1px 0 #fff,inset -1px -1px 0 #b4b1a0;"></div>
<div class="t" style="top:478.9px;font-size:5.2px;line-height:5.2px;color:#222;left:60.5px;width:400px;text-align:center;">3mm</div>
<svg style="left:269.5px;top:478.5px;" width="3" height="4.4" viewBox="0 0 3 4.4"><path d="M.5 0V4.4M.5 .4H2.6V2.2H.5" stroke="#444" stroke-width=".6" fill="none"/></svg>
<div style="left:280px;top:476.9px;width:34px;height:9.2px;background:#b6d9ea;box-shadow:inset 1px 1px 0 #fff,inset -1px -1px 0 #b4b1a0;"></div>
<div class="t" style="top:478.9px;font-size:5.2px;line-height:5.2px;color:#222;font-weight:bold;left:95px;width:400px;text-align:center;">1.5mm</div>
<div style="left:304px;top:478.7px;width:1.8px;height:3px;background:#e81818;"></div>
<div class="t" style="top:489.4px;font-size:5.2px;line-height:5.2px;color:#2840b8;font-weight:bold;left:2.5px;">曲线板</div>
<div style="left:20px;top:489.5px;width:152px;height:5px;background:repeating-conic-gradient(#c2c1b6 0 25%,#f4f2e8 0 50%) 0 0/2px 2px;"></div>
<svg style="left:173.5px;top:488.5px;" width="9" height="7" viewBox="0 0 9 7"><rect x=".5" y=".5" width="8" height="6" fill="#ece9d8" stroke="#222" stroke-width="1"/><rect x=".5" y=".5" width="8" height="2" fill="#222"/></svg>
<div class="t" style="top:489.48px;font-size:5.05px;line-height:5.05px;color:#2840b8;font-weight:bold;left:187px;">数据板—金属材料室温拉伸试验 (GB/T228-2002)</div>
<div style="left:299px;top:489.5px;width:9px;height:5px;background:repeating-conic-gradient(#c2c1b6 0 25%,#f4f2e8 0 50%) 0 0/2px 2px;"></div>
<svg style="left:309px;top:488.5px;" width="7" height="7" viewBox="0 0 7 7"><rect x=".3" y=".3" width="6.4" height="6.4" fill="#f4d8d4" stroke="#d03030" stroke-width=".7"/><path d="M1.8 1.8L5.2 5.2M5.2 1.8L1.8 5.2" stroke="#d03030" stroke-width="1"/></svg>
<div class="t" style="top:489.4px;font-size:5.2px;line-height:5.2px;color:#2840b8;font-weight:bold;left:318.5px;">控制板</div>
<div style="left:336px;top:489.5px;width:110px;height:5px;background:repeating-conic-gradient(#c2c1b6 0 25%,#f4f2e8 0 50%) 0 0/2px 2px;"></div>
<div class="t" style="top:499.1px;font-size:5.8px;line-height:5.8px;left:4px;">曲线类型:</div>
<div style="left:28px;top:498px;width:48px;height:8px;background:#fff;box-shadow:inset .9px .9px 0 #8e8c7e,inset -0.5px -0.5px 0 #f8f8f0;"></div>
<div class="t" style="top:499.2px;font-size:5.6px;line-height:5.6px;left:30px;">力-变形</div>
<div style="left:69.5px;top:498.8px;width:5.7px;height:6.4px;background:#ece9d8;box-shadow:inset 1px 1px 0 #fff,inset -1px -1px 0 #7d7b6c;"></div>
<div class="t" style="top:499.5px;font-size:5px;line-height:5px;left:-127.6px;width:400px;text-align:center;">▾</div>
<svg style="left:91.5px;top:497.5px;" width="7" height="9" viewBox="0 0 7 9"><path d="M1 0 L1 7 L2.8 5.4 L4 8.4 L5 8 L3.8 5 L6 5 Z" fill="#111"/></svg>
<svg style="left:101px;top:497.5px;" width="8" height="9" viewBox="0 0 8 9"><path d="M4 0.5V8.5M0.5 4.5H7.5" stroke="#222" stroke-width="1" fill="none"/><circle cx="4" cy="4.5" r="1.4" fill="none" stroke="#222" stroke-width=".6"/></svg>
<svg style="left:111px;top:497.5px;" width="8" height="9" viewBox="0 0 8 9"><circle cx="3.2" cy="3.5" r="2.4" fill="#cfe0f4" stroke="#4050a8" stroke-width="1"/><path d="M5 5.4L7.4 8.2" stroke="#4050a8" stroke-width="1.3"/></svg>
<svg style="left:121px;top:497.5px;" width="8" height="9" viewBox="0 0 8 9"><circle cx="3.2" cy="3.5" r="2.4" fill="none" stroke="#b9b7a8" stroke-width="1"/><path d="M5 5.4L7.4 8.2" stroke="#b9b7a8" stroke-width="1.3"/></svg>
<svg style="left:133.5px;top:497.5px;" width="8" height="9" viewBox="0 0 8 9"><path d="M1 8L2 5.4L6.4 0.8L7.4 1.8L3 6.6Z" fill="#d82020"/><path d="M1 8L2 5.6L3 6.6Z" fill="#222"/></svg>
<svg style="left:143.5px;top:497.5px;" width="6" height="9" viewBox="0 0 6 9"><path d="M3 1V5M1.2 8L3 4.4L4.8 8" stroke="#222" stroke-width="1" fill="none"/></svg>
<svg style="left:151.5px;top:497.5px;" width="9" height="9" viewBox="0 0 9 9"><rect x="2" y="1" width="5" height="3" fill="#fff" stroke="#222" stroke-width=".7"/><rect x=".6" y="3.6" width="7.8" height="3.4" fill="#555" stroke="#222" stroke-width=".6"/><rect x="2" y="6" width="5" height="2.2" fill="#ddd" stroke="#222" stroke-width=".5"/></svg>
<svg style="left:161.5px;top:497.5px;" width="9" height="9" viewBox="0 0 9 9"><rect x=".8" y=".8" width="7.4" height="7.4" fill="#fff" stroke="#d02020" stroke-width="1.1"/><path d="M2 6.5L4 4.2L5.4 5L7 2.4" stroke="#d02020" stroke-width=".8" fill="none"/></svg>
<svg style="left:171.5px;top:497.5px;" width="9" height="9" viewBox="0 0 9 9"><rect x=".8" y="1" width="7.4" height="7.4" rx="1.6" fill="#fff" stroke="#222" stroke-width="1.5"/><path d="M4.5 2.6V5H6" stroke="#222" stroke-width=".7" fill="none"/></svg>
<div style="left:90.5px;top:497px;width:8.5px;height:0.6px;background:#8a8878;"></div>
<svg style="left:187.5px;top:497.5px;" width="7" height="9" viewBox="0 0 7 9"><path d="M.8 .8H4.4L6.2 2.6V8.2H.8Z" fill="#fff" stroke="#333" stroke-width=".8"/></svg>
<svg style="left:195.5px;top:497.5px;" width="9" height="9" viewBox="0 0 9 9"><path d="M.6 2.4H3.4L4.2 3.4H7.6V7.8H.6Z" fill="#d8c050" stroke="#5a5020" stroke-width=".7"/><path d="M5.4 1.6L7.6 1L8 2.4" stroke="#333" stroke-width=".6" fill="none"/></svg>
<svg style="left:207.5px;top:497.5px;" width="8" height="9" viewBox="0 0 8 9"><rect x=".6" y=".8" width="6.8" height="7.2" fill="#222"/><rect x="1.8" y=".8" width="4.2" height="2.8" fill="#e8e8e8"/><rect x="2.2" y="5.2" width="3.6" height="2.8" fill="#777"/></svg>
<svg style="left:216px;top:497.5px;" width="8" height="9" viewBox="0 0 8 9"><rect x="1.2" y=".8" width="5.8" height="7.4" fill="#fff" stroke="#333" stroke-width=".8"/><circle cx="3.4" cy="5.2" r="1.8" fill="#b8c8f0" stroke="#3040a0" stroke-width=".7"/></svg>
<svg style="left:226.5px;top:497.5px;" width="9" height="9" viewBox="0 0 9 9"><rect x="2" y="1" width="5" height="3" fill="#fff" stroke="#222" stroke-width=".7"/><rect x=".6" y="3.6" width="7.8" height="3.4" fill="#555" stroke="#222" stroke-width=".6"/><rect x="2" y="6" width="5" height="2.2" fill="#ddd" stroke="#222" stroke-width=".5"/></svg>
<div class="t" style="top:499.8px;font-size:4.4px;line-height:4.4px;left:237px;">▾</div>
<div style="left:252.5px;top:498px;width:6.5px;height:8px;background:#f4f2e6;box-shadow:inset 0 0 0 .7px #444;"></div>
<div class="t" style="top:499.7px;font-size:4.6px;line-height:4.6px;color:#222;left:55.75px;width:400px;text-align:center;">◀</div>
<div style="left:260.5px;top:498px;width:6.5px;height:8px;background:#f4f2e6;box-shadow:inset 0 0 0 .7px #444;"></div>
<div class="t" style="top:499.7px;font-size:4.6px;line-height:4.6px;color:#222;left:63.75px;width:400px;text-align:center;">◀</div>
<div style="left:296.5px;top:498px;width:6.5px;height:8px;background:#f4f2e6;box-shadow:inset 0 0 0 .7px #444;"></div>
<div class="t" style="top:499.7px;font-size:4.6px;line-height:4.6px;color:#222;left:99.75px;width:400px;text-align:center;">▶</div>
<div style="left:304.5px;top:498px;width:6.5px;height:8px;background:#f4f2e6;box-shadow:inset 0 0 0 .7px #444;"></div>
<div class="t" style="top:499.7px;font-size:4.6px;line-height:4.6px;color:#222;left:107.75px;width:400px;text-align:center;">▶</div>
<div style="left:268px;top:498px;width:27.5px;height:8px;background:#fff;"></div>
<div class="t" style="top:499.4px;font-size:5.2px;line-height:5.2px;color:#555;font-weight:bold;left:274px;">1/9</div>
<div style="left:2px;top:507.5px;width:181.5px;height:218px;background:#ece9d8;box-shadow:inset 0 0 0 .6px #c4c2b2;"></div>
<div style="left:28px;top:508.1px;width:130px;height:6px;background:#fff;box-shadow:inset 0 .6px 0 #999;"></div>
<div class="t" style="top:508.6px;font-size:5px;line-height:5px;left:-176px;width:400px;text-align:center;">◂</div>
<div class="t" style="top:508.6px;font-size:5px;line-height:5px;left:-45px;width:400px;text-align:center;">▸</div>
<div style="left:160px;top:507.6px;width:7.5px;height:7px;background:#ece9d8;box-shadow:inset 1px 1px 0 #fff,inset -1px -1px 0 #7d7b6c;"></div>
<div class="t" style="top:508.6px;font-size:5px;line-height:5px;left:-36.2px;width:400px;text-align:center;">✛</div>
<div style="left:168px;top:507.6px;width:7.5px;height:7px;background:#ece9d8;box-shadow:inset 1px 1px 0 #fff,inset -1px -1px 0 #7d7b6c;"></div>
<div class="t" style="top:508.6px;font-size:5px;line-height:5px;left:-28.2px;width:400px;text-align:center;">⇔</div>
<div style="left:20.5px;top:514.7px;width:153.5px;height:199.8px;background:#454d4d;"></div>
<svg style="left:20.5px;top:514.7px;" width="153.5" height="199.8" viewBox="0 0 153.5 199.8"><path d="M0 19.98 H153.5" stroke="#566060" stroke-width=".6"/><path d="M0 39.96 H153.5" stroke="#566060" stroke-width=".6"/><path d="M0 59.94 H153.5" stroke="#566060" stroke-width=".6"/><path d="M0 79.92 H153.5" stroke="#566060" stroke-width=".6"/><path d="M0 99.9 H153.5" stroke="#566060" stroke-width=".6"/><path d="M0 119.88 H153.5" stroke="#566060" stroke-width=".6"/><path d="M0 139.86 H153.5" stroke="#566060" stroke-width=".6"/><path d="M0 159.84 H153.5" stroke="#566060" stroke-width=".6"/><path d="M0 179.82 H153.5" stroke="#566060" stroke-width=".6"/><path d="M15.35 0 V199.8" stroke="#566060" stroke-width=".6"/><path d="M30.7 0 V199.8" stroke="#566060" stroke-width=".6"/><path d="M46.05 0 V199.8" stroke="#566060" stroke-width=".6"/><path d="M61.4 0 V199.8" stroke="#566060" stroke-width=".6"/><path d="M76.75 0 V199.8" stroke="#566060" stroke-width=".6"/><path d="M92.1 0 V199.8" stroke="#566060" stroke-width=".6"/><path d="M107.45 0 V199.8" stroke="#566060" stroke-width=".6"/><path d="M122.8 0 V199.8" stroke="#566060" stroke-width=".6"/><path d="M138.15 0 V199.8" stroke="#566060" stroke-width=".6"/><path d="M-.4 97C.4 86 1.4 76 3 71.9H13.5L18.8 55.6C21 51 23 47 25 43C28 38 30.5 35 33.5 31.5C36.5 28.5 39 26.8 41.8 25.8C44 25 47 24.6 49 25.3C52 26 54 26.8 56.5 28.3C60 31 64 36 67 39.9C70 44 73 48.5 75.3 52.4L80 61.8" stroke="#d8d040" stroke-width=".9" fill="none"/><path d="M43.5 24.9L49.5 25.2L56 27.6" stroke="#20c060" stroke-width="1.7" fill="none"/></svg>
<div class="t" style="top:516.5px;font-size:5.4px;line-height:5.4px;color:#e0d838;font-weight:bold;left:24px;">力(kN)</div>
<div class="t" style="top:707.3px;font-size:5.4px;line-height:5.4px;color:#e0d838;font-weight:bold;left:-229.5px;width:400px;text-align:right;">变形(mm)</div>
<div style="left:175.2px;top:514.7px;width:7.8px;height:200.3px;background:#f7f6ee;"></div>
<div style="left:176px;top:516.7px;width:6.4px;height:6.2px;background:#ece9d8;box-shadow:inset 1px 1px 0 #fff,inset -1px -1px 0 #7d7b6c;"></div>
<div class="t" style="top:517.5px;font-size:4.6px;line-height:4.6px;left:-20.8px;width:400px;text-align:center;">≡</div>
<div style="left:176px;top:523.3px;width:6.4px;height:6.2px;background:#ece9d8;box-shadow:inset 1px 1px 0 #fff,inset -1px -1px 0 #7d7b6c;"></div>
<div class="t" style="top:524.1px;font-size:4.6px;line-height:4.6px;left:-20.8px;width:400px;text-align:center;">⊕</div>
<div style="left:176px;top:529.9px;width:6.4px;height:6.2px;background:#ece9d8;box-shadow:inset 1px 1px 0 #fff,inset -1px -1px 0 #7d7b6c;"></div>
<div class="t" style="top:530.7px;font-size:4.6px;line-height:4.6px;left:-20.8px;width:400px;text-align:center;">▴</div>
<div style="left:176px;top:708px;width:6.4px;height:6.5px;background:#ece9d8;box-shadow:inset 1px 1px 0 #fff,inset -1px -1px 0 #7d7b6c;"></div>
<div class="t" style="top:709px;font-size:4.6px;line-height:4.6px;left:-20.8px;width:400px;text-align:center;">▾</div>
<div class="t" style="top:513.35px;font-size:5.1px;line-height:5.1px;left:-382.1px;width:400px;text-align:right;">61.44</div>
<div style="left:18.7px;top:514.4px;width:1.8px;height:0.6px;background:#333;"></div>
<div class="t" style="top:533.33px;font-size:5.1px;line-height:5.1px;left:-382.1px;width:400px;text-align:right;">55.30</div>
<div style="left:18.7px;top:534.38px;width:1.8px;height:0.6px;background:#333;"></div>
<div class="t" style="top:553.31px;font-size:5.1px;line-height:5.1px;left:-382.1px;width:400px;text-align:right;">49.15</div>
<div style="left:18.7px;top:554.36px;width:1.8px;height:0.6px;background:#333;"></div>
<div class="t" style="top:573.29px;font-size:5.1px;line-height:5.1px;left:-382.1px;width:400px;text-align:right;">43.01</div>
<div style="left:18.7px;top:574.34px;width:1.8px;height:0.6px;background:#333;"></div>
<div class="t" style="top:593.27px;font-size:5.1px;line-height:5.1px;left:-382.1px;width:400px;text-align:right;">36.86</div>
<div style="left:18.7px;top:594.32px;width:1.8px;height:0.6px;background:#333;"></div>
<div class="t" style="top:613.25px;font-size:5.1px;line-height:5.1px;left:-382.1px;width:400px;text-align:right;">30.72</div>
<div style="left:18.7px;top:614.3px;width:1.8px;height:0.6px;background:#333;"></div>
<div class="t" style="top:633.23px;font-size:5.1px;line-height:5.1px;left:-382.1px;width:400px;text-align:right;">24.58</div>
<div style="left:18.7px;top:634.28px;width:1.8px;height:0.6px;background:#333;"></div>
<div class="t" style="top:653.21px;font-size:5.1px;line-height:5.1px;left:-382.1px;width:400px;text-align:right;">18.43</div>
<div style="left:18.7px;top:654.26px;width:1.8px;height:0.6px;background:#333;"></div>
<div class="t" style="top:673.19px;font-size:5.1px;line-height:5.1px;left:-382.1px;width:400px;text-align:right;">12.29</div>
<div style="left:18.7px;top:674.24px;width:1.8px;height:0.6px;background:#333;"></div>
<div class="t" style="top:693.17px;font-size:5.1px;line-height:5.1px;left:-382.1px;width:400px;text-align:right;">6.144</div>
<div style="left:18.7px;top:694.22px;width:1.8px;height:0.6px;background:#333;"></div>
<div class="t" style="top:713.15px;font-size:5.1px;line-height:5.1px;left:-382.1px;width:400px;text-align:right;">0</div>
<div style="left:18.7px;top:714.2px;width:1.8px;height:0.6px;background:#333;"></div>
<div class="t" style="top:718.55px;font-size:5.1px;line-height:5.1px;left:-178px;width:400px;text-align:center;">0</div>
<div style="left:20.2px;top:714.5px;width:0.6px;height:2px;background:#333;"></div>
<div class="t" style="top:718.55px;font-size:5.1px;line-height:5.1px;left:-164.15px;width:400px;text-align:center;">3.072</div>
<div style="left:35.55px;top:714.5px;width:0.6px;height:2px;background:#333;"></div>
<div class="t" style="top:718.55px;font-size:5.1px;line-height:5.1px;left:-148.8px;width:400px;text-align:center;">6.144</div>
<div style="left:50.9px;top:714.5px;width:0.6px;height:2px;background:#333;"></div>
<div class="t" style="top:718.55px;font-size:5.1px;line-height:5.1px;left:-133.45px;width:400px;text-align:center;">9.216</div>
<div style="left:66.25px;top:714.5px;width:0.6px;height:2px;background:#333;"></div>
<div class="t" style="top:718.55px;font-size:5.1px;line-height:5.1px;left:-118.1px;width:400px;text-align:center;">12.29</div>
<div style="left:81.6px;top:714.5px;width:0.6px;height:2px;background:#333;"></div>
<div class="t" style="top:718.55px;font-size:5.1px;line-height:5.1px;left:-102.75px;width:400px;text-align:center;">15.36</div>
<div style="left:96.95px;top:714.5px;width:0.6px;height:2px;background:#333;"></div>
<div class="t" style="top:718.55px;font-size:5.1px;line-height:5.1px;left:-87.4px;width:400px;text-align:center;">18.43</div>
<div style="left:112.3px;top:714.5px;width:0.6px;height:2px;background:#333;"></div>
<div class="t" style="top:718.55px;font-size:5.1px;line-height:5.1px;left:-72.05px;width:400px;text-align:center;">21.50</div>
<div style="left:127.65px;top:714.5px;width:0.6px;height:2px;background:#333;"></div>
<div class="t" style="top:718.55px;font-size:5.1px;line-height:5.1px;left:-56.7px;width:400px;text-align:center;">24.58</div>
<div style="left:143px;top:714.5px;width:0.6px;height:2px;background:#333;"></div>
<div class="t" style="top:718.55px;font-size:5.1px;line-height:5.1px;left:-41.35px;width:400px;text-align:center;">27.65</div>
<div style="left:158.35px;top:714.5px;width:0.6px;height:2px;background:#333;"></div>
<div class="t" style="top:718.55px;font-size:5.1px;line-height:5.1px;left:-26px;width:400px;text-align:center;">30.72</div>
<div style="left:173.7px;top:714.5px;width:0.6px;height:2px;background:#333;"></div>
<div style="left:185.5px;top:507.9px;width:130px;height:217.6px;background:#ece9d8;"></div>
<div style="left:186px;top:507.6px;width:129px;height:0.8px;background:#a8b8d8;"></div>
<div class="t" style="top:510.2px;font-size:5.8px;line-height:5.8px;color:#111;font-weight:bold;left:18px;width:400px;text-align:center;">详细</div>
<div style="left:250.5px;top:508.9px;width:64.5px;height:8.4px;background:#f2f0e4;box-shadow:inset 1px 0 0 #555, inset 0 -1px 0 #8a8878, inset 0 .6px 0 #fff;"></div>
<div class="t" style="top:510.2px;font-size:5.8px;line-height:5.8px;color:#111;font-weight:bold;left:83px;width:400px;text-align:center;">列表</div>
<div class="t" style="top:519.8px;font-size:5.4px;line-height:5.4px;font-weight:bold;left:-175.5px;width:400px;text-align:right;">试件批号</div>
<div style="left:226.5px;top:518.9px;width:25.5px;height:7.2px;background:#fff;box-shadow:inset .9px .9px 0 #8e8c7e,inset -0.5px -0.5px 0 #f8f8f0;"></div>
<div class="t" style="top:520.05px;font-size:5.3px;line-height:5.3px;color:#111;left:228px;">001</div>
<div class="t" style="top:519.8px;font-size:5.4px;line-height:5.4px;font-weight:bold;left:-114.5px;width:400px;text-align:right;">钢号</div>
<div style="left:287.5px;top:518.9px;width:26px;height:7.2px;background:#fff;box-shadow:inset .9px .9px 0 #8e8c7e,inset -0.5px -0.5px 0 #f8f8f0;"></div>
<div class="t" style="top:520.05px;font-size:5.3px;line-height:5.3px;color:#111;left:289px;">C1001</div>
<div class="t" style="top:529.45px;font-size:5.4px;line-height:5.4px;font-weight:bold;left:-175.5px;width:400px;text-align:right;">试验日期</div>
<div style="left:226.5px;top:528.55px;width:25.5px;height:7.2px;background:#fff;box-shadow:inset .9px .9px 0 #8e8c7e,inset -0.5px -0.5px 0 #f8f8f0;"></div>
<div class="t" style="top:529.7px;font-size:5.3px;line-height:5.3px;color:#111;left:228px;">2011-6-13</div>
<div class="t" style="top:529.45px;font-size:5.4px;line-height:5.4px;font-weight:bold;left:-114.5px;width:400px;text-align:right;">试验人</div>
<div style="left:287.5px;top:528.55px;width:26px;height:7.2px;background:#fff;box-shadow:inset .9px .9px 0 #8e8c7e,inset -0.5px -0.5px 0 #f8f8f0;"></div>
<div class="t" style="top:529.7px;font-size:5.3px;line-height:5.3px;color:#111;left:289px;">郝兆春</div>
<div class="t" style="top:539.1px;font-size:5.4px;line-height:5.4px;font-weight:bold;left:-175.5px;width:400px;text-align:right;">试件形状</div>
<div style="left:226.5px;top:538.2px;width:25.5px;height:7.2px;background:#fff;box-shadow:inset .9px .9px 0 #8e8c7e,inset -0.5px -0.5px 0 #f8f8f0;"></div>
<div class="t" style="top:539.35px;font-size:5.3px;line-height:5.3px;color:#111;left:228px;">圆材</div>
<div class="t" style="top:539.1px;font-size:5.4px;line-height:5.4px;font-weight:bold;left:-114.5px;width:400px;text-align:right;">尺寸(mm)</div>
<div style="left:287.5px;top:538.2px;width:26px;height:7.2px;background:#fff;box-shadow:inset .9px .9px 0 #8e8c7e,inset -0.5px -0.5px 0 #f8f8f0;"></div>
<div class="t" style="top:539.35px;font-size:5.3px;line-height:5.3px;color:#111;left:289px;">10</div>
<div style="left:246px;top:539px;width:5.2px;height:5.8px;background:#ece9d8;box-shadow:inset 1px 1px 0 #fff,inset -1px -1px 0 #7d7b6c;"></div>
<div class="t" style="top:539.6px;font-size:4.4px;line-height:4.4px;color:#222;left:48.6px;width:400px;text-align:center;">▾</div>
<div class="t" style="top:548.75px;font-size:5.4px;line-height:5.4px;font-weight:bold;left:-175.5px;width:400px;text-align:right;">So(mm^2)</div>
<div style="left:226.5px;top:547.85px;width:25.5px;height:7.2px;background:#fff;box-shadow:inset .9px .9px 0 #8e8c7e,inset -0.5px -0.5px 0 #f8f8f0;"></div>
<div class="t" style="top:549px;font-size:5.3px;line-height:5.3px;color:#111;left:228px;">78.54</div>
<div class="t" style="top:548.75px;font-size:5.4px;line-height:5.4px;font-weight:bold;left:-114.5px;width:400px;text-align:right;">加载速率</div>
<div style="left:287.5px;top:547.85px;width:26px;height:7.2px;background:#fff;box-shadow:inset .9px .9px 0 #8e8c7e,inset -0.5px -0.5px 0 #f8f8f0;"></div>
<div class="t" style="top:549px;font-size:5.3px;line-height:5.3px;color:#111;left:289px;">0.05</div>
<div style="left:307.5px;top:548.65px;width:5.2px;height:5.8px;background:#ece9d8;box-shadow:inset 1px 1px 0 #fff,inset -1px -1px 0 #7d7b6c;"></div>
<div class="t" style="top:549.25px;font-size:4.4px;line-height:4.4px;left:110.1px;width:400px;text-align:center;">▾</div>
<div class="t" style="top:558.4px;font-size:5.4px;line-height:5.4px;font-weight:bold;left:-175.5px;width:400px;text-align:right;">Lo(mm)</div>
<div style="left:226.5px;top:557.5px;width:25.5px;height:7.2px;background:#fff;box-shadow:inset .9px .9px 0 #8e8c7e,inset -0.5px -0.5px 0 #f8f8f0;"></div>
<div class="t" style="top:558.65px;font-size:5.3px;line-height:5.3px;color:#111;left:228px;">100</div>
<div class="t" style="top:558.4px;font-size:5.4px;line-height:5.4px;font-weight:bold;left:-114.5px;width:400px;text-align:right;">引伸计标距</div>
<div style="left:287.5px;top:557.5px;width:26px;height:7.2px;background:#fff;box-shadow:inset .9px .9px 0 #8e8c7e,inset -0.5px -0.5px 0 #f8f8f0;"></div>
<div class="t" style="top:558.65px;font-size:5.3px;line-height:5.3px;color:#111;left:289px;">15</div>
<div class="t" style="top:568.05px;font-size:5.4px;line-height:5.4px;font-weight:bold;left:-175.5px;width:400px;text-align:right;">Lu(mm)</div>
<div style="left:226.5px;top:567.15px;width:25.5px;height:7.2px;background:#fff;box-shadow:inset .9px .9px 0 #8e8c7e,inset -0.5px -0.5px 0 #f8f8f0;"></div>
<div class="t" style="top:568.3px;font-size:5.3px;line-height:5.3px;color:#111;left:228px;">120</div>
<div class="t" style="top:568.05px;font-size:5.4px;line-height:5.4px;font-weight:bold;left:-114.5px;width:400px;text-align:right;">A(%)</div>
<div style="left:287.5px;top:567.15px;width:26px;height:7.2px;background:#fff;box-shadow:inset .9px .9px 0 #8e8c7e,inset -0.5px -0.5px 0 #f8f8f0;"></div>
<div class="t" style="top:568.3px;font-size:5.3px;line-height:5.3px;color:#111;left:289px;">20.0</div>
<div class="t" style="top:577.7px;font-size:5.4px;line-height:5.4px;font-weight:bold;left:-175.5px;width:400px;text-align:right;">断面尺寸</div>
<div style="left:226.5px;top:576.8px;width:25.5px;height:7.2px;background:#fff;box-shadow:inset .9px .9px 0 #8e8c7e,inset -0.5px -0.5px 0 #f8f8f0;"></div>
<div class="t" style="top:577.95px;font-size:5.3px;line-height:5.3px;color:#111;left:228px;">6</div>
<div class="t" style="top:577.7px;font-size:5.4px;line-height:5.4px;font-weight:bold;left:-114.5px;width:400px;text-align:right;">Su(mm^2)</div>
<div style="left:287.5px;top:576.8px;width:26px;height:7.2px;background:#fff;box-shadow:inset .9px .9px 0 #8e8c7e,inset -0.5px -0.5px 0 #f8f8f0;"></div>
<div class="t" style="top:577.95px;font-size:5.3px;line-height:5.3px;color:#111;left:289px;">50.27</div>
<div class="t" style="top:587.35px;font-size:5.4px;line-height:5.4px;font-weight:bold;left:-175.5px;width:400px;text-align:right;">Z(%)</div>
<div style="left:226.5px;top:586.45px;width:25.5px;height:7.2px;background:#fff;box-shadow:inset .9px .9px 0 #8e8c7e,inset -0.5px -0.5px 0 #f8f8f0;"></div>
<div class="t" style="top:587.6px;font-size:5.3px;line-height:5.3px;color:#111;left:228px;">36.0</div>
<div class="t" style="top:587.35px;font-size:5.4px;line-height:5.4px;font-weight:bold;left:-114.5px;width:400px;text-align:right;">Fm(kN)</div>
<div style="left:287.5px;top:586.45px;width:26px;height:7.2px;background:#fff;box-shadow:inset .9px .9px 0 #8e8c7e,inset -0.5px -0.5px 0 #f8f8f0;"></div>
<div class="t" style="top:587.6px;font-size:5.3px;line-height:5.3px;color:#111;left:289px;">53.98</div>
<div class="t" style="top:597px;font-size:5.4px;line-height:5.4px;font-weight:bold;left:-175.5px;width:400px;text-align:right;">Rm(MPa)</div>
<div style="left:226.5px;top:596.1px;width:25.5px;height:7.2px;background:#fff;box-shadow:inset .9px .9px 0 #8e8c7e,inset -0.5px -0.5px 0 #f8f8f0;"></div>
<div class="t" style="top:597.25px;font-size:5.3px;line-height:5.3px;color:#111;left:228px;">695</div>
<div class="t" style="top:597px;font-size:5.4px;line-height:5.4px;font-weight:bold;left:-114.5px;width:400px;text-align:right;">FeH(kN)</div>
<div style="left:287.5px;top:596.1px;width:26px;height:7.2px;background:#fff;box-shadow:inset .9px .9px 0 #8e8c7e,inset -0.5px -0.5px 0 #f8f8f0;"></div>
<div class="t" style="top:597.25px;font-size:5.3px;line-height:5.3px;color:#111;left:289px;">21.37</div>
<div class="t" style="top:606.65px;font-size:5.4px;line-height:5.4px;font-weight:bold;left:-175.5px;width:400px;text-align:right;">ReH(MPa)</div>
<div style="left:226.5px;top:605.75px;width:25.5px;height:7.2px;background:#48c0d8;box-shadow:inset .9px .9px 0 #8e8c7e,inset -0.5px -0.5px 0 #f8f8f0;"></div>
<div class="t" style="top:606.9px;font-size:5.3px;line-height:5.3px;color:#111;left:228px;">270</div>
<div class="t" style="top:606.65px;font-size:5.4px;line-height:5.4px;font-weight:bold;left:-114.5px;width:400px;text-align:right;">FeL(kN)</div>
<div style="left:287.5px;top:605.75px;width:26px;height:7.2px;background:#fff;box-shadow:inset .9px .9px 0 #8e8c7e,inset -0.5px -0.5px 0 #f8f8f0;"></div>
<div class="t" style="top:606.9px;font-size:5.3px;line-height:5.3px;color:#111;left:289px;">31.48</div>
<div class="t" style="top:616.3px;font-size:5.4px;line-height:5.4px;font-weight:bold;left:-175.5px;width:400px;text-align:right;">ReL(MPa)</div>
<div style="left:226.5px;top:615.4px;width:25.5px;height:7.2px;background:#fff;box-shadow:inset .9px .9px 0 #8e8c7e,inset -0.5px -0.5px 0 #f8f8f0;"></div>
<div class="t" style="top:616.55px;font-size:5.3px;line-height:5.3px;color:#111;left:228px;">400</div>
<div class="t" style="top:616.3px;font-size:5.4px;line-height:5.4px;font-weight:bold;left:-114.5px;width:400px;text-align:right;">Fp(kN)</div>
<div style="left:287.5px;top:615.4px;width:26px;height:7.2px;background:#fff;box-shadow:inset .9px .9px 0 #8e8c7e,inset -0.5px -0.5px 0 #f8f8f0;"></div>
<div class="t" style="top:616.55px;font-size:5.3px;line-height:5.3px;color:#111;left:289px;">31.48</div>
<div class="t" style="top:625.95px;font-size:5.4px;line-height:5.4px;font-weight:bold;left:-175.5px;width:400px;text-align:right;">Rp(MPa)</div>
<div style="left:226.5px;top:625.05px;width:25.5px;height:7.2px;background:#fff;box-shadow:inset .9px .9px 0 #8e8c7e,inset -0.5px -0.5px 0 #f8f8f0;"></div>
<div class="t" style="top:626.2px;font-size:5.3px;line-height:5.3px;color:#111;left:228px;">400</div>
<div class="t" style="top:625.95px;font-size:5.4px;line-height:5.4px;font-weight:bold;left:-114.5px;width:400px;text-align:right;">Ft(kN)</div>
<div style="left:287.5px;top:625.05px;width:26px;height:7.2px;background:#fff;box-shadow:inset .9px .9px 0 #8e8c7e,inset -0.5px -0.5px 0 #f8f8f0;"></div>
<div class="t" style="top:626.2px;font-size:5.3px;line-height:5.3px;color:#111;left:289px;">29.48</div>
<div class="t" style="top:635.6px;font-size:5.4px;line-height:5.4px;font-weight:bold;left:-175.5px;width:400px;text-align:right;">Rt(MPa)</div>
<div style="left:226.5px;top:634.7px;width:25.5px;height:7.2px;background:#fff;box-shadow:inset .9px .9px 0 #8e8c7e,inset -0.5px -0.5px 0 #f8f8f0;"></div>
<div class="t" style="top:635.85px;font-size:5.3px;line-height:5.3px;color:#111;left:228px;">380</div>
<div class="t" style="top:635.6px;font-size:5.4px;line-height:5.4px;font-weight:bold;left:-114.5px;width:400px;text-align:right;">E(GPa)</div>
<div style="left:287.5px;top:634.7px;width:26px;height:7.2px;background:#fff;box-shadow:inset .9px .9px 0 #8e8c7e,inset -0.5px -0.5px 0 #f8f8f0;"></div>
<div class="t" style="top:635.85px;font-size:5.3px;line-height:5.3px;color:#111;left:289px;">50.57</div>
<div class="t" style="top:645.25px;font-size:5.4px;line-height:5.4px;font-weight:bold;left:-175.5px;width:400px;text-align:right;">屈强比</div>
<div style="left:226.5px;top:644.35px;width:25.5px;height:7.2px;background:#fff;box-shadow:inset .9px .9px 0 #8e8c7e,inset -0.5px -0.5px 0 #f8f8f0;"></div>
<div class="t" style="top:645.5px;font-size:5.3px;line-height:5.3px;color:#111;left:228px;">0.58</div>
<div class="t" style="top:645.25px;font-size:5.4px;line-height:5.4px;font-weight:bold;left:-114.5px;width:400px;text-align:right;">强屈比</div>
<div style="left:287.5px;top:644.35px;width:26px;height:7.2px;background:#fff;box-shadow:inset .9px .9px 0 #8e8c7e,inset -0.5px -0.5px 0 #f8f8f0;"></div>
<div class="t" style="top:645.5px;font-size:5.3px;line-height:5.3px;color:#111;left:289px;">1.71</div>
<div class="t" style="top:654.9px;font-size:5.4px;line-height:5.4px;font-weight:bold;left:-175.5px;width:400px;text-align:right;">A(%)</div>
<div style="left:226.5px;top:654px;width:25.5px;height:7.2px;background:#fff;box-shadow:inset .9px .9px 0 #8e8c7e,inset -0.5px -0.5px 0 #f8f8f0;"></div>
<div class="t" style="top:655.15px;font-size:5.3px;line-height:5.3px;color:#111;left:228px;">20.0</div>
<div class="t" style="top:654.9px;font-size:5.4px;line-height:5.4px;font-weight:bold;left:-114.5px;width:400px;text-align:right;">Agt(%)</div>
<div style="left:287.5px;top:654px;width:26px;height:7.2px;background:#fff;box-shadow:inset .9px .9px 0 #8e8c7e,inset -0.5px -0.5px 0 #f8f8f0;"></div>
<div class="t" style="top:655.15px;font-size:5.3px;line-height:5.3px;color:#111;left:289px;">9.5</div>
<div style="left:184px;top:487.5px;width:0.9px;height:238px;background:#b9b7a8;"></div>
<div style="left:185px;top:487.5px;width:0.6px;height:238px;background:#fbfaf4;"></div>
<div style="left:315.8px;top:487.5px;width:1px;height:238px;background:#9c9a8c;"></div>
<div style="left:316.8px;top:487.5px;width:0.8px;height:238px;background:#fbfaf4;"></div>
<div style="left:19.5px;top:611.8px;width:2px;height:58.2px;background:#e4dc30;"></div>
<div class="t" style="top:611.4px;font-size:4.8px;line-height:4.8px;color:#20c060;font-weight:bold;left:24.5px;">Rp.2</div>
<div style="left:19.4px;top:613px;width:2.2px;height:1.6px;background:#20c060;"></div>
<div class="t" style="top:625.6px;font-size:4.8px;line-height:4.8px;color:#20c060;font-weight:bold;left:24.5px;">FeL</div>
<div style="left:19.4px;top:627.2px;width:2.2px;height:1.6px;background:#20c060;"></div>
<div class="t" style="top:636.3px;font-size:4.8px;line-height:4.8px;color:#d8d8d8;font-weight:bold;left:24.5px;">Ft</div>
<div style="left:19.4px;top:637.9px;width:2.2px;height:1.6px;background:#d8d8d8;"></div>
<div class="t" style="top:643.2px;font-size:4.8px;line-height:4.8px;color:#20c060;font-weight:bold;left:24.5px;">Fp</div>
<div style="left:19.4px;top:644.8px;width:2.2px;height:1.6px;background:#20c060;"></div>
<div class="t" style="top:499.1px;font-size:5.8px;line-height:5.8px;color:#111;left:322px;">位移</div>
<div class="t" style="top:499.1px;font-size:5.8px;line-height:5.8px;color:#111;left:339.5px;">力</div>
<div class="t" style="top:499.1px;font-size:5.8px;line-height:5.8px;color:#111;left:351.5px;">变形</div>
<div class="t" style="top:499.1px;font-size:5.8px;line-height:5.8px;color:#111;font-weight:bold;left:367px;">程控</div>
<div class="t" style="top:499.1px;font-size:5.8px;line-height:5.8px;color:#111;left:385px;">程控</div>
<div style="left:335.5px;top:498px;width:0.8px;height:8px;background:#99978a;"></div>
<div style="left:346.5px;top:498px;width:0.8px;height:8px;background:#555;"></div>
<div style="left:362px;top:498px;width:0.8px;height:8px;background:#99978a;"></div>
<div style="left:381px;top:498px;width:0.8px;height:8px;background:#555;"></div>
<div style="left:397px;top:498px;width:0.8px;height:8px;background:#99978a;"></div>
<div style="left:319px;top:507px;width:126.5px;height:163px;background:#ece9d8;box-shadow:inset -1.2px -1.2px 0 #6e6c5e, inset .6px .6px 0 #fff;"></div>
<div class="t" style="top:511.2px;font-size:5.8px;line-height:5.8px;left:324px;">控制方案:</div>
<div style="left:349px;top:510.3px;width:92.5px;height:7.6px;background:#fff;box-shadow:inset .9px .9px 0 #8e8c7e,inset -0.5px -0.5px 0 #f8f8f0;"></div>
<div class="t" style="top:511.4px;font-size:5.6px;line-height:5.6px;left:351px;">金属拉伸试验方案</div>
<div style="left:435px;top:511.1px;width:5.8px;height:6px;background:#ece9d8;box-shadow:inset 1px 1px 0 #fff,inset -1px -1px 0 #7d7b6c;"></div>
<div class="t" style="top:511.8px;font-size:4.6px;line-height:4.6px;left:237.9px;width:400px;text-align:center;">▾</div>
<div style="left:362.5px;top:521.5px;width:35px;height:9.5px;background:#ece9d8;box-shadow:inset 1px 1px 0 #fff,inset -1px -1px 0 #7d7b6c;"></div>
<div class="t" style="top:523.45px;font-size:5.6px;line-height:5.6px;left:180px;width:400px;text-align:center;">添加...</div>
<div style="left:404px;top:521.5px;width:37.5px;height:9.5px;background:#ece9d8;box-shadow:inset 1px 1px 0 #fff,inset -1px -1px 0 #7d7b6c;"></div>
<div class="t" style="top:523.45px;font-size:5.6px;line-height:5.6px;left:222.75px;width:400px;text-align:center;">删除</div>
<div style="left:321.5px;top:534.5px;width:121px;height:104.5px;background:#efede0;box-shadow:inset 0 0 0 .8px #d2cfbe, .8px .8px 0 #fff;"></div>
<svg style="left:325px;top:541.5px;" width="7" height="7" viewBox="0 0 7 7"><rect width="7" height="7" fill="#cfd2d6"/><path d="M1.4 5.6H5.6M2 4V2.4H5V4" stroke="#70787c" stroke-width=".8" fill="none"/></svg>
<div class="t" style="top:541.98px;font-size:5.05px;line-height:5.05px;color:#111;font-weight:bold;left:337.5px;">弹性应力控制阶段</div>
<div class="t" style="top:547.12px;font-size:5.05px;line-height:5.05px;color:#111;font-weight:bold;left:337.5px;">位移速度为 5mm/min</div>
<div class="t" style="top:552.27px;font-size:5.05px;line-height:5.05px;color:#111;font-weight:bold;left:337.5px;">应力速度为 10MPa/s</div>
<div class="t" style="top:557.43px;font-size:5.05px;line-height:5.05px;color:#111;font-weight:bold;left:337.5px;">当试验力达到屈服后进入屈服阶段</div>
<svg style="left:325px;top:572.5px;" width="7" height="7" viewBox="0 0 7 7"><rect width="7" height="7" fill="#cfd2d6"/><path d="M1.4 5.6H5.6M2 4V2.4H5V4" stroke="#70787c" stroke-width=".8" fill="none"/></svg>
<div class="t" style="top:572.98px;font-size:5.05px;line-height:5.05px;color:#111;font-weight:bold;left:337.5px;">屈服过程控制阶段</div>
<div class="t" style="top:578.12px;font-size:5.05px;line-height:5.05px;color:#111;font-weight:bold;left:337.5px;">变形控制引伸计 量程: 15mm,标距: 50mm</div>
<div class="t" style="top:583.27px;font-size:5.05px;line-height:5.05px;color:#111;font-weight:bold;left:337.5px;">屈服后变形增加 2 mm 进入加速分离阶段</div>
<svg style="left:325px;top:617px;" width="7" height="7" viewBox="0 0 7 7"><rect width="7" height="7" fill="#cfd2d6"/><path d="M1.4 5.6H5.6M2 4V2.4H5V4" stroke="#70787c" stroke-width=".8" fill="none"/></svg>
<div class="t" style="top:617.48px;font-size:5.05px;line-height:5.05px;color:#111;font-weight:bold;left:337.5px;">加速分离阶段</div>
<div class="t" style="top:622.62px;font-size:5.05px;line-height:5.05px;color:#111;font-weight:bold;left:337.5px;">位移速度为 5 mm/min</div>
<div class="t" style="top:627.77px;font-size:5.05px;line-height:5.05px;color:#111;font-weight:bold;left:337.5px;">此阶段可以取下引伸计</div>
<div style="left:371px;top:643px;width:71.5px;height:9.5px;background:#ece9d8;box-shadow:inset 1px 1px 0 #fff,inset -1px -1px 0 #7d7b6c;"></div>
<div class="t" style="top:644.95px;font-size:5.6px;line-height:5.6px;font-weight:bold;left:206.75px;width:400px;text-align:center;">曲线导引 (G)...</div>
<div style="left:347.5px;top:674.5px;width:96px;height:36px;box-shadow:inset 0 0 0 .8px #d2cfbe, .8px .8px 0 #fff;"></div>
<div style="left:352.5px;top:681.5px;width:25.5px;height:24.5px;background:#bcbcbc;box-shadow:inset -1px -1px 0 #999, inset 1px 1px 0 #d8d8d8;"></div>
<svg style="left:360.25px;top:684.9px;" width="12" height="11" viewBox="0 0 12 11"><path d="M1 0.4L11 5.4L1 10.6Z" fill="#8a8a8a" stroke="#666" stroke-width=".6"/></svg>
<div class="t" style="top:698.8px;font-size:5.2px;line-height:5.2px;color:#333;font-weight:bold;left:165.25px;width:400px;text-align:center;">开始(F5)</div>
<div style="left:383px;top:681.5px;width:25.5px;height:24.5px;background:#f6ec10;box-shadow:inset -1px -1px 0 #b8b000;"></div>
<svg style="left:389.25px;top:684.5px;" width="13" height="13" viewBox="0 0 13 13"><path d="M3.8 .4H9.2L12.6 3.8V9.2L9.2 12.6H3.8L.4 9.2V3.8Z" fill="#e8101c"/></svg>
<div class="t" style="top:698.8px;font-size:5.2px;line-height:5.2px;color:#c01010;font-weight:bold;left:195.75px;width:400px;text-align:center;">停止(F6)</div>
<div style="left:413.5px;top:681.5px;width:25.5px;height:24.5px;background:#bcbcbc;box-shadow:inset -1px -1px 0 #999, inset 1px 1px 0 #d8d8d8;"></div>
<svg style="left:416.25px;top:684.1px;" width="20" height="13" viewBox="0 0 20 13"><path d="M1 6.4H19" stroke="#333" stroke-width="1.2"/><path d="M6 1H14L10 5.2Z" fill="#444"/><path d="M10 7.6L13.4 12H6.6Z" fill="#8a8a8a"/></svg>
<div class="t" style="top:698.8px;font-size:5.2px;line-height:5.2px;color:#222;font-weight:bold;left:226.25px;width:400px;text-align:center;">复位</div>
<div style="left:322.8px;top:676px;width:19.5px;height:19.4px;background:#c8c8c4;box-shadow:inset -1px -1px 0 #aaa;"></div>
<svg style="left:327.55px;top:678.5px;" width="10" height="14.4" viewBox="0 0 10 14.4"><path d="M5 0L9.4 5.4H.6Z" fill="#555"/><path d="M5 14.4 L9.4 9 H.6Z" fill="#555"/><rect x="1.4" y="6" width="7.2" height="2.4" fill="#777"/></svg>
<div style="left:323.5px;top:714.5px;width:5.3px;height:5.3px;background:#fff;box-shadow:inset .9px .9px 0 #8e8c7e,inset -0.5px -0.5px 0 #f8f8f0;"></div>
<svg style="left:324.3px;top:715.3px;" width="4" height="4" viewBox="0 0 4 4"><path d="M.5 2L1.6 3.2L3.6 .6" stroke="#111" stroke-width=".9" fill="none"/></svg>
<div class="t" style="top:714.35px;font-size:5.5px;line-height:5.5px;color:#e01818;left:332px;">试验结束自动返回 (速度: 20mm/min)</div>
<div class="t" style="top:729.35px;font-size:11.3px;line-height:11.3px;color:#626262;left:0.5px;">实验结束后自动求取相关实验数据并生成标志点</div>
<div style="left:496.5px;top:179.5px;width:460.5px;height:321.1px;background:#ece9d8;box-shadow:inset -1px 0 0 #d0cdbc;"></div>
<div style="left:936px;top:179.3px;width:6px;height:1px;background:#3050c0;"></div>
<div style="left:945px;top:179.3px;width:6px;height:1px;background:#e03030;"></div>
<svg style="left:498px;top:181.6px;" width="15" height="16" viewBox="0 0 15 16"><circle cx="7" cy="6.6" r="5.6" fill="#f6f6f2" stroke="#555" stroke-width="1.1"/><path d="M7 1.4V7H12" stroke="#888" stroke-width=".7" fill="none"/><rect x=".6" y="8" width="4" height="7" fill="#d86820" stroke="#7a3a10" stroke-width=".6"/><rect x="5.6" y="8.6" width="8.4" height="5.4" fill="#3060c0" stroke="#203070" stroke-width=".6"/><rect x="6.8" y="9.6" width="5" height="2.2" fill="#dfe8ff"/><rect x="4.6" y="14" width="10" height="1.6" fill="#888"/></svg>
<div class="t" style="top:183.6px;font-size:5.6px;line-height:5.6px;color:#111;left:519.2px;">系统(S)</div>
<div class="t" style="top:183.6px;font-size:5.6px;line-height:5.6px;color:#111;left:543.8px;">数据(D)</div>
<div class="t" style="top:183.6px;font-size:5.6px;line-height:5.6px;color:#111;left:568.4px;">设置(E)</div>
<div class="t" style="top:183.6px;font-size:5.6px;line-height:5.6px;color:#111;left:593px;">调整(C)</div>
<div class="t" style="top:183.6px;font-size:5.6px;line-height:5.6px;color:#111;left:617.6px;">工具(T)</div>
<div class="t" style="top:183.6px;font-size:5.6px;line-height:5.6px;color:#111;left:642.2px;">窗口(W)</div>
<div class="t" style="top:183.6px;font-size:5.6px;line-height:5.6px;color:#111;left:666.8px;">帮助(H)</div>
<div style="left:514px;top:191px;width:331px;height:7.6px;background:#f0eee2;box-shadow:inset 0 .6px 0 #d0cdbc;"></div>
<div style="left:635px;top:191.4px;width:0.7px;height:7px;background:#c8c5b4;"></div>
<div style="left:852.46px;top:184px;width:5.4px;height:7px;background:#185830;"></div>
<div style="left:853.66px;top:185px;width:2.8px;height:3.4px;background:#30c060;"></div>
<div class="t" style="top:191.2px;font-size:5.6px;line-height:5.6px;color:#111;font-weight:bold;left:655.06px;width:400px;text-align:center;">调零</div>
<div style="left:873.19px;top:184px;width:6px;height:6.8px;background:#e8e8e0;box-shadow:inset 0 0 0 .7px #444;"></div>
<div style="left:874.39px;top:186.4px;width:3.6px;height:1.2px;background:#444;"></div>
<div class="t" style="top:191.2px;font-size:5.6px;line-height:5.6px;color:#111;font-weight:bold;left:676.19px;width:400px;text-align:center;">分析板</div>
<div style="left:892.25px;top:185px;width:6px;height:5.8px;background:#b8b8b0;box-shadow:inset 0 0 0 .7px #444;"></div>
<div style="left:893.65px;top:183.8px;width:3.2px;height:2px;background:#555;"></div>
<div class="t" style="top:191.2px;font-size:5.6px;line-height:5.6px;color:#111;font-weight:bold;left:695.25px;width:400px;text-align:center;">数据板</div>
<svg style="left:920.1px;top:184.4px;" width="8" height="6" viewBox="0 0 8 6"><path d="M0 3L3.4 0V1.8H8V4.2H3.4V6Z" fill="#3454b8"/></svg>
<div class="t" style="top:191.2px;font-size:5.6px;line-height:5.6px;color:#111;font-weight:bold;left:724.1px;width:400px;text-align:center;">后退</div>
<svg style="left:939.68px;top:184.4px;" width="8" height="6" viewBox="0 0 8 6"><path d="M8 3L4.6 0V1.8H0V4.2H4.6V6Z" fill="#3454b8"/></svg>
<div class="t" style="top:191.2px;font-size:5.6px;line-height:5.6px;color:#111;font-weight:bold;left:743.68px;width:400px;text-align:center;">前进</div>
<div class="t" style="top:187.2px;font-size:4.4px;line-height:4.4px;color:#333;left:707.62px;width:400px;text-align:center;">▾</div>
<div style="left:912.77px;top:182.4px;width:0.72px;height:15.1px;background:#a6a494;"></div>
<div style="left:496.5px;top:199.4px;width:460.5px;height:0.6px;background:#d8d5c4;"></div>
<div class="t" style="top:201px;font-size:5.2px;line-height:5.2px;color:#2840b8;font-weight:bold;left:498.03px;">力传感器显示板</div>
<div style="left:537.19px;top:201.1px;width:282.33px;height:5px;background:repeating-conic-gradient(#c2c1b6 0 25%,#f4f2e8 0 50%) 0 0/2px 2px;"></div>
<div class="t" style="top:201px;font-size:5.2px;line-height:5.2px;color:#2840b8;font-weight:bold;left:823.12px;">位移显示板</div>
<div style="left:851.46px;top:201.1px;width:103.04px;height:5px;background:repeating-conic-gradient(#c2c1b6 0 25%,#f4f2e8 0 50%) 0 0/2px 2px;"></div>
<div style="left:498.03px;top:209.2px;width:28.85px;height:7.2px;background:#f7f07c;"></div>
<div class="t" style="top:210px;font-size:5.6px;line-height:5.6px;color:#222;font-weight:bold;left:312.46px;width:400px;text-align:center;">试验判断</div>
<div style="left:528.94px;top:209.2px;width:9.27px;height:7.2px;background:#ece9d8;box-shadow:inset 1px 1px 0 #fff,inset -1px -1px 0 #7d7b6c;"></div>
<div class="t" style="top:210px;font-size:5.6px;line-height:5.6px;color:#222;left:333.58px;width:400px;text-align:center;">清</div>
<div style="left:540.28px;top:209.2px;width:119.53px;height:7.2px;background:#ece9d8;box-shadow:inset 1px 1px 0 #fff,inset -1px -1px 0 #7d7b6c;"></div>
<div class="t" style="top:210px;font-size:5.6px;line-height:5.6px;left:400.04px;width:400px;text-align:center;">试验力 (kN)</div>
<div style="left:661.86px;top:209.2px;width:13.91px;height:7.2px;background:#ece9d8;box-shadow:inset 1px 1px 0 #fff,inset -1px -1px 0 #7d7b6c;"></div>
<div class="t" style="top:210.2px;font-size:5.2px;line-height:5.2px;color:#222;left:469.08px;width:400px;text-align:center;">0.0</div>
<div style="left:678.35px;top:209.2px;width:28.34px;height:7.2px;background:#f7f07c;"></div>
<div class="t" style="top:210.1px;font-size:5.4px;line-height:5.4px;color:#222;font-weight:bold;left:492.57px;width:400px;text-align:center;">取下引伸计</div>
<div style="left:708.23px;top:209.2px;width:93.77px;height:7.2px;background:#ece9d8;box-shadow:inset 1px 1px 0 #fff,inset -1px -1px 0 #7d7b6c;"></div>
<div class="t" style="top:210.1px;font-size:5.4px;line-height:5.4px;left:554.6px;width:400px;text-align:center;">变形 (mm)-引伸计 (25mm/50mm)</div>
<div style="left:804.06px;top:209.2px;width:13.91px;height:7.2px;background:#ece9d8;box-shadow:inset 1px 1px 0 #fff,inset -1px -1px 0 #7d7b6c;"></div>
<div class="t" style="top:210.2px;font-size:5.2px;line-height:5.2px;left:611.07px;width:400px;text-align:center;">0.0</div>
<div style="left:823.64px;top:209.2px;width:113.34px;height:7.2px;background:#ece9d8;box-shadow:inset 1px 1px 0 #fff,inset -1px -1px 0 #7d7b6c;"></div>
<div class="t" style="top:210px;font-size:5.6px;line-height:5.6px;left:680.31px;width:400px;text-align:center;">位移 (mm)</div>
<div style="left:939.04px;top:209.2px;width:13.91px;height:7.2px;background:#ece9d8;box-shadow:inset 1px 1px 0 #fff,inset -1px -1px 0 #7d7b6c;"></div>
<div class="t" style="top:210.2px;font-size:5.2px;line-height:5.2px;color:#222;left:746.05px;width:400px;text-align:center;">0.0</div>
<div style="left:497px;top:217px;width:140.13px;height:24.6px;background:#000;"></div>
<div class="t" style="left:545.13px;top:214.77px;font-size:30.16px;line-height:30.16px;font-family:'Liberation Sans',sans-serif;color:#38c2d2;transform:scaleX(0.737);transform-origin:0 0;-webkit-text-stroke:.25px #000;">0<span style="padding:0 .139em">.</span>00</div>
<div style="left:638.17px;top:217px;width:37.61px;height:8.6px;background:#f0eee0;"></div>
<div class="t" style="top:218.5px;font-size:5.6px;line-height:5.6px;color:#222;font-weight:bold;left:456.71px;width:400px;text-align:center;">峰 值</div>
<div style="left:638.17px;top:225.6px;width:37.61px;height:16px;background:#000;"></div>
<div class="t" style="top:229.4px;font-size:9px;line-height:9px;color:#1f7068;font-family:'DejaVu Sans Mono','Liberation Mono',monospace;left:456.71px;width:400px;text-align:center;transform:scaleX(.8);">0.00</div>
<div style="left:677.32px;top:217px;width:141.16px;height:24.6px;background:#000;"></div>
<div class="t" style="left:710.51px;top:214.77px;font-size:30.16px;line-height:30.16px;font-family:'Liberation Sans',sans-serif;color:#38c2d2;transform:scaleX(0.744);transform-origin:0 0;-webkit-text-stroke:.25px #000;">0<span style="padding:0 .139em">.</span>000</div>
<div style="left:823.12px;top:217px;width:130.45px;height:24.6px;background:#000;"></div>
<div class="t" style="left:865.07px;top:214.77px;font-size:30.16px;line-height:30.16px;font-family:'Liberation Sans',sans-serif;color:#38c2d2;transform:scaleX(0.745);transform-origin:0 0;-webkit-text-stroke:.25px #000;">0<span style="padding:0 .139em">.</span>00</div>
<div class="t" style="top:246px;font-size:5.2px;line-height:5.2px;color:#2840b8;font-weight:bold;left:497.52px;">曲线板</div>
<div style="left:515.55px;top:246.1px;width:156.62px;height:5px;background:repeating-conic-gradient(#c2c1b6 0 25%,#f4f2e8 0 50%) 0 0/2px 2px;"></div>
<svg style="left:673.71px;top:245.1px;" width="9" height="7" viewBox="0 0 9 7"><rect x=".5" y=".5" width="8" height="6" fill="#ece9d8" stroke="#222" stroke-width="1"/><rect x=".5" y=".5" width="8" height="2" fill="#222"/></svg>
<div class="t" style="top:246.07px;font-size:5.05px;line-height:5.05px;color:#2840b8;font-weight:bold;left:687.62px;">数据板—金属材料室温拉伸试验 (GB/T228-2002)</div>
<div style="left:803.03px;top:246.1px;width:9.27px;height:5px;background:repeating-conic-gradient(#c2c1b6 0 25%,#f4f2e8 0 50%) 0 0/2px 2px;"></div>
<svg style="left:813.33px;top:245.1px;" width="7" height="7" viewBox="0 0 7 7"><rect x=".3" y=".3" width="6.4" height="6.4" fill="#f4d8d4" stroke="#d03030" stroke-width=".7"/><path d="M1.8 1.8L5.2 5.2M5.2 1.8L1.8 5.2" stroke="#d03030" stroke-width="1"/></svg>
<div class="t" style="top:246px;font-size:5.2px;line-height:5.2px;color:#2840b8;font-weight:bold;left:823.12px;">控制板</div>
<div style="left:841.15px;top:246.1px;width:113.34px;height:5px;background:repeating-conic-gradient(#c2c1b6 0 25%,#f4f2e8 0 50%) 0 0/2px 2px;"></div>
<div class="t" style="top:254.9px;font-size:5.8px;line-height:5.8px;left:499.06px;">曲线类型:</div>
<div style="left:523.79px;top:253.8px;width:49.46px;height:8px;background:#fff;box-shadow:inset .9px .9px 0 #8e8c7e,inset -0.5px -0.5px 0 #f8f8f0;"></div>
<div class="t" style="top:255px;font-size:5.6px;line-height:5.6px;left:525.85px;">力-变形</div>
<div style="left:566.55px;top:254.6px;width:5.87px;height:6.4px;background:#ece9d8;box-shadow:inset 1px 1px 0 #fff,inset -1px -1px 0 #7d7b6c;"></div>
<div class="t" style="top:255.3px;font-size:5px;line-height:5px;left:369.54px;width:400px;text-align:center;">▾</div>
<svg style="left:589.22px;top:253.3px;" width="7" height="9" viewBox="0 0 7 9"><path d="M1 0 L1 7 L2.8 5.4 L4 8.4 L5 8 L3.8 5 L6 5 Z" fill="#111"/></svg>
<svg style="left:599.01px;top:253.3px;" width="8" height="9" viewBox="0 0 8 9"><path d="M4 0.5V8.5M0.5 4.5H7.5" stroke="#222" stroke-width="1" fill="none"/><circle cx="4" cy="4.5" r="1.4" fill="none" stroke="#222" stroke-width=".6"/></svg>
<svg style="left:609.31px;top:253.3px;" width="8" height="9" viewBox="0 0 8 9"><circle cx="3.2" cy="3.5" r="2.4" fill="#cfe0f4" stroke="#4050a8" stroke-width="1"/><path d="M5 5.4L7.4 8.2" stroke="#4050a8" stroke-width="1.3"/></svg>
<svg style="left:619.62px;top:253.3px;" width="8" height="9" viewBox="0 0 8 9"><circle cx="3.2" cy="3.5" r="2.4" fill="none" stroke="#b9b7a8" stroke-width="1"/><path d="M5 5.4L7.4 8.2" stroke="#b9b7a8" stroke-width="1.3"/></svg>
<svg style="left:632.5px;top:253.3px;" width="8" height="9" viewBox="0 0 8 9"><path d="M1 8L2 5.4L6.4 0.8L7.4 1.8L3 6.6Z" fill="#d82020"/><path d="M1 8L2 5.6L3 6.6Z" fill="#222"/></svg>
<svg style="left:642.8px;top:253.3px;" width="6" height="9" viewBox="0 0 6 9"><path d="M3 1V5M1.2 8L3 4.4L4.8 8" stroke="#222" stroke-width="1" fill="none"/></svg>
<svg style="left:651.05px;top:253.3px;" width="9" height="9" viewBox="0 0 9 9"><rect x="2" y="1" width="5" height="3" fill="#fff" stroke="#222" stroke-width=".7"/><rect x=".6" y="3.6" width="7.8" height="3.4" fill="#555" stroke="#222" stroke-width=".6"/><rect x="2" y="6" width="5" height="2.2" fill="#ddd" stroke="#222" stroke-width=".5"/></svg>
<svg style="left:661.35px;top:253.3px;" width="9" height="9" viewBox="0 0 9 9"><rect x=".8" y=".8" width="7.4" height="7.4" fill="#fff" stroke="#d02020" stroke-width="1.1"/><path d="M2 6.5L4 4.2L5.4 5L7 2.4" stroke="#d02020" stroke-width=".8" fill="none"/></svg>
<svg style="left:671.65px;top:253.3px;" width="9" height="9" viewBox="0 0 9 9"><rect x=".8" y="1" width="7.4" height="7.4" rx="1.6" fill="#fff" stroke="#222" stroke-width="1.5"/><path d="M4.5 2.6V5H6" stroke="#222" stroke-width=".7" fill="none"/></svg>
<div style="left:588.19px;top:252.8px;width:8.76px;height:0.6px;background:#8a8878;"></div>
<svg style="left:688.14px;top:253.3px;" width="7" height="9" viewBox="0 0 7 9"><path d="M.8 .8H4.4L6.2 2.6V8.2H.8Z" fill="#fff" stroke="#333" stroke-width=".8"/></svg>
<svg style="left:696.38px;top:253.3px;" width="9" height="9" viewBox="0 0 9 9"><path d="M.6 2.4H3.4L4.2 3.4H7.6V7.8H.6Z" fill="#d8c050" stroke="#5a5020" stroke-width=".7"/><path d="M5.4 1.6L7.6 1L8 2.4" stroke="#333" stroke-width=".6" fill="none"/></svg>
<svg style="left:708.75px;top:253.3px;" width="8" height="9" viewBox="0 0 8 9"><rect x=".6" y=".8" width="6.8" height="7.2" fill="#222"/><rect x="1.8" y=".8" width="4.2" height="2.8" fill="#e8e8e8"/><rect x="2.2" y="5.2" width="3.6" height="2.8" fill="#777"/></svg>
<svg style="left:717.51px;top:253.3px;" width="8" height="9" viewBox="0 0 8 9"><rect x="1.2" y=".8" width="5.8" height="7.4" fill="#fff" stroke="#333" stroke-width=".8"/><circle cx="3.4" cy="5.2" r="1.8" fill="#b8c8f0" stroke="#3040a0" stroke-width=".7"/></svg>
<svg style="left:728.33px;top:253.3px;" width="9" height="9" viewBox="0 0 9 9"><rect x="2" y="1" width="5" height="3" fill="#fff" stroke="#222" stroke-width=".7"/><rect x=".6" y="3.6" width="7.8" height="3.4" fill="#555" stroke="#222" stroke-width=".6"/><rect x="2" y="6" width="5" height="2.2" fill="#ddd" stroke="#222" stroke-width=".5"/></svg>
<div class="t" style="top:255.6px;font-size:4.4px;line-height:4.4px;left:739.14px;">▾</div>
<div style="left:755.12px;top:253.8px;width:6.7px;height:8px;background:#f4f2e6;box-shadow:inset 0 0 0 .7px #a8a696;"></div>
<div class="t" style="top:255.5px;font-size:4.6px;line-height:4.6px;color:#b8b6a6;left:558.46px;width:400px;text-align:center;">◀</div>
<div style="left:763.36px;top:253.8px;width:6.7px;height:8px;background:#f4f2e6;box-shadow:inset 0 0 0 .7px #a8a696;"></div>
<div class="t" style="top:255.5px;font-size:4.6px;line-height:4.6px;color:#b8b6a6;left:566.71px;width:400px;text-align:center;">◀</div>
<div style="left:800.45px;top:253.8px;width:6.7px;height:8px;background:#f4f2e6;box-shadow:inset 0 0 0 .7px #a8a696;"></div>
<div class="t" style="top:255.5px;font-size:4.6px;line-height:4.6px;color:#b8b6a6;left:603.8px;width:400px;text-align:center;">▶</div>
<div style="left:808.7px;top:253.8px;width:6.7px;height:8px;background:#f4f2e6;box-shadow:inset 0 0 0 .7px #a8a696;"></div>
<div class="t" style="top:255.5px;font-size:4.6px;line-height:4.6px;color:#b8b6a6;left:612.05px;width:400px;text-align:center;">▶</div>
<div style="left:771.09px;top:253.8px;width:28.34px;height:8px;background:#fff;"></div>
<div class="t" style="top:255.2px;font-size:5.2px;line-height:5.2px;color:#111;font-weight:bold;left:772.63px;">位置/总数</div>
<div style="left:497px;top:263.4px;width:187.02px;height:225.6px;background:#ece9d8;box-shadow:inset 0 0 0 .6px #c4c2b2;"></div>
<div style="left:523.79px;top:265px;width:133.95px;height:6px;background:#fff;box-shadow:inset 0 .6px 0 #999;"></div>
<div class="t" style="top:265.5px;font-size:5px;line-height:5px;left:319.67px;width:400px;text-align:center;">◂</div>
<div class="t" style="top:265.5px;font-size:5px;line-height:5px;left:454.65px;width:400px;text-align:center;">▸</div>
<div style="left:659.8px;top:264.5px;width:7.73px;height:7px;background:#ece9d8;box-shadow:inset 1px 1px 0 #fff,inset -1px -1px 0 #7d7b6c;"></div>
<div class="t" style="top:265.5px;font-size:5px;line-height:5px;left:463.72px;width:400px;text-align:center;">✛</div>
<div style="left:668.05px;top:264.5px;width:7.73px;height:7px;background:#ece9d8;box-shadow:inset 1px 1px 0 #fff,inset -1px -1px 0 #7d7b6c;"></div>
<div class="t" style="top:265.5px;font-size:5px;line-height:5px;left:471.96px;width:400px;text-align:center;">⇔</div>
<div style="left:516.06px;top:272px;width:158.17px;height:205.2px;background:#454d4d;"></div>
<svg style="left:516.06px;top:272px;" width="158.17" height="205.2" viewBox="0 0 158.17 205.2"><path d="M0 20.52 H158.17" stroke="#566060" stroke-width=".6"/><path d="M0 41.04 H158.17" stroke="#566060" stroke-width=".6"/><path d="M0 61.56 H158.17" stroke="#566060" stroke-width=".6"/><path d="M0 82.08 H158.17" stroke="#566060" stroke-width=".6"/><path d="M0 102.6 H158.17" stroke="#566060" stroke-width=".6"/><path d="M0 123.12 H158.17" stroke="#566060" stroke-width=".6"/><path d="M0 143.64 H158.17" stroke="#566060" stroke-width=".6"/><path d="M0 164.16 H158.17" stroke="#566060" stroke-width=".6"/><path d="M0 184.68 H158.17" stroke="#566060" stroke-width=".6"/><path d="M15.82 0 V205.2" stroke="#566060" stroke-width=".6"/><path d="M31.63 0 V205.2" stroke="#566060" stroke-width=".6"/><path d="M47.45 0 V205.2" stroke="#566060" stroke-width=".6"/><path d="M63.27 0 V205.2" stroke="#566060" stroke-width=".6"/><path d="M79.08 0 V205.2" stroke="#566060" stroke-width=".6"/><path d="M94.9 0 V205.2" stroke="#566060" stroke-width=".6"/><path d="M110.72 0 V205.2" stroke="#566060" stroke-width=".6"/><path d="M126.53 0 V205.2" stroke="#566060" stroke-width=".6"/><path d="M142.35 0 V205.2" stroke="#566060" stroke-width=".6"/></svg>
<div class="t" style="top:273.8px;font-size:5.4px;line-height:5.4px;color:#e0d838;font-weight:bold;left:519.56px;">力(kN)</div>
<div class="t" style="top:470px;font-size:5.4px;line-height:5.4px;color:#e0d838;font-weight:bold;left:270.73px;width:400px;text-align:right;">变形(mm)</div>
<div style="left:675.47px;top:272px;width:8.04px;height:205.7px;background:#f7f6ee;"></div>
<div style="left:676.29px;top:274px;width:6.59px;height:6.2px;background:#ece9d8;box-shadow:inset 1px 1px 0 #fff,inset -1px -1px 0 #7d7b6c;"></div>
<div class="t" style="top:274.8px;font-size:4.6px;line-height:4.6px;left:479.59px;width:400px;text-align:center;">≡</div>
<div style="left:676.29px;top:280.6px;width:6.59px;height:6.2px;background:#ece9d8;box-shadow:inset 1px 1px 0 #fff,inset -1px -1px 0 #7d7b6c;"></div>
<div class="t" style="top:281.4px;font-size:4.6px;line-height:4.6px;left:479.59px;width:400px;text-align:center;">⊕</div>
<div style="left:676.29px;top:287.2px;width:6.59px;height:6.2px;background:#ece9d8;box-shadow:inset 1px 1px 0 #fff,inset -1px -1px 0 #7d7b6c;"></div>
<div class="t" style="top:288px;font-size:4.6px;line-height:4.6px;left:479.59px;width:400px;text-align:center;">▴</div>
<div style="left:676.29px;top:470.7px;width:6.59px;height:6.5px;background:#ece9d8;box-shadow:inset 1px 1px 0 #fff,inset -1px -1px 0 #7d7b6c;"></div>
<div class="t" style="top:471.7px;font-size:4.6px;line-height:4.6px;left:479.59px;width:400px;text-align:center;">▾</div>
<div class="t" style="top:270.65px;font-size:5.1px;line-height:5.1px;left:113.46px;width:400px;text-align:right;">50.00</div>
<div style="left:514.26px;top:271.7px;width:1.8px;height:0.6px;background:#333;"></div>
<div class="t" style="top:291.17px;font-size:5.1px;line-height:5.1px;left:113.46px;width:400px;text-align:right;">45.00</div>
<div style="left:514.26px;top:292.22px;width:1.8px;height:0.6px;background:#333;"></div>
<div class="t" style="top:311.69px;font-size:5.1px;line-height:5.1px;left:113.46px;width:400px;text-align:right;">40.00</div>
<div style="left:514.26px;top:312.74px;width:1.8px;height:0.6px;background:#333;"></div>
<div class="t" style="top:332.21px;font-size:5.1px;line-height:5.1px;left:113.46px;width:400px;text-align:right;">35.00</div>
<div style="left:514.26px;top:333.26px;width:1.8px;height:0.6px;background:#333;"></div>
<div class="t" style="top:352.73px;font-size:5.1px;line-height:5.1px;left:113.46px;width:400px;text-align:right;">30.00</div>
<div style="left:514.26px;top:353.78px;width:1.8px;height:0.6px;background:#333;"></div>
<div class="t" style="top:373.25px;font-size:5.1px;line-height:5.1px;left:113.46px;width:400px;text-align:right;">25.00</div>
<div style="left:514.26px;top:374.3px;width:1.8px;height:0.6px;background:#333;"></div>
<div class="t" style="top:393.77px;font-size:5.1px;line-height:5.1px;left:113.46px;width:400px;text-align:right;">20.00</div>
<div style="left:514.26px;top:394.82px;width:1.8px;height:0.6px;background:#333;"></div>
<div class="t" style="top:414.29px;font-size:5.1px;line-height:5.1px;left:113.46px;width:400px;text-align:right;">15.00</div>
<div style="left:514.26px;top:415.34px;width:1.8px;height:0.6px;background:#333;"></div>
<div class="t" style="top:434.81px;font-size:5.1px;line-height:5.1px;left:113.46px;width:400px;text-align:right;">10.00</div>
<div style="left:514.26px;top:435.86px;width:1.8px;height:0.6px;background:#333;"></div>
<div class="t" style="top:455.33px;font-size:5.1px;line-height:5.1px;left:113.46px;width:400px;text-align:right;">5.000</div>
<div style="left:514.26px;top:456.38px;width:1.8px;height:0.6px;background:#333;"></div>
<div class="t" style="top:475.85px;font-size:5.1px;line-height:5.1px;left:113.46px;width:400px;text-align:right;">0</div>
<div style="left:514.26px;top:476.9px;width:1.8px;height:0.6px;background:#333;"></div>
<div class="t" style="top:481.65px;font-size:5.1px;line-height:5.1px;left:317.56px;width:400px;text-align:center;">0</div>
<div style="left:515.76px;top:477.2px;width:0.6px;height:2px;background:#333;"></div>
<div class="t" style="top:481.65px;font-size:5.1px;line-height:5.1px;left:331.88px;width:400px;text-align:center;">1.500</div>
<div style="left:531.58px;top:477.2px;width:0.6px;height:2px;background:#333;"></div>
<div class="t" style="top:481.65px;font-size:5.1px;line-height:5.1px;left:347.7px;width:400px;text-align:center;">3.000</div>
<div style="left:547.4px;top:477.2px;width:0.6px;height:2px;background:#333;"></div>
<div class="t" style="top:481.65px;font-size:5.1px;line-height:5.1px;left:363.51px;width:400px;text-align:center;">4.500</div>
<div style="left:563.21px;top:477.2px;width:0.6px;height:2px;background:#333;"></div>
<div class="t" style="top:481.65px;font-size:5.1px;line-height:5.1px;left:379.33px;width:400px;text-align:center;">6.000</div>
<div style="left:579.03px;top:477.2px;width:0.6px;height:2px;background:#333;"></div>
<div class="t" style="top:481.65px;font-size:5.1px;line-height:5.1px;left:395.15px;width:400px;text-align:center;">7.500</div>
<div style="left:594.85px;top:477.2px;width:0.6px;height:2px;background:#333;"></div>
<div class="t" style="top:481.65px;font-size:5.1px;line-height:5.1px;left:410.96px;width:400px;text-align:center;">9.000</div>
<div style="left:610.66px;top:477.2px;width:0.6px;height:2px;background:#333;"></div>
<div class="t" style="top:481.65px;font-size:5.1px;line-height:5.1px;left:426.78px;width:400px;text-align:center;">10.50</div>
<div style="left:626.48px;top:477.2px;width:0.6px;height:2px;background:#333;"></div>
<div class="t" style="top:481.65px;font-size:5.1px;line-height:5.1px;left:442.6px;width:400px;text-align:center;">12.00</div>
<div style="left:642.3px;top:477.2px;width:0.6px;height:2px;background:#333;"></div>
<div class="t" style="top:481.65px;font-size:5.1px;line-height:5.1px;left:458.41px;width:400px;text-align:center;">13.50</div>
<div style="left:658.11px;top:477.2px;width:0.6px;height:2px;background:#333;"></div>
<div class="t" style="top:481.65px;font-size:5.1px;line-height:5.1px;left:474.23px;width:400px;text-align:center;">15.00</div>
<div style="left:673.93px;top:477.2px;width:0.6px;height:2px;background:#333;"></div>
<div style="left:686.08px;top:263.2px;width:133.95px;height:225.8px;background:#ece9d8;"></div>
<div style="left:686.59px;top:262.9px;width:132.92px;height:0.8px;background:#a8b8d8;"></div>
<div class="t" style="top:265.5px;font-size:5.8px;line-height:5.8px;color:#111;font-weight:bold;left:519.57px;width:400px;text-align:center;">详细</div>
<div style="left:753.06px;top:264.2px;width:66.46px;height:8.4px;background:#f2f0e4;box-shadow:inset 1px 0 0 #555, inset 0 -1px 0 #8a8878, inset 0 .6px 0 #fff;"></div>
<div class="t" style="top:265.5px;font-size:5.8px;line-height:5.8px;color:#111;font-weight:bold;left:586.54px;width:400px;text-align:center;">列表</div>
<div class="t" style="top:276.1px;font-size:5.4px;line-height:5.4px;font-weight:bold;left:326.26px;width:400px;text-align:right;">试件批号</div>
<div style="left:728.33px;top:275.2px;width:26.28px;height:7.2px;background:#fff;box-shadow:inset .9px .9px 0 #8e8c7e,inset -0.5px -0.5px 0 #f8f8f0;"></div>
<div class="t" style="top:276.1px;font-size:5.4px;line-height:5.4px;font-weight:bold;left:389.12px;width:400px;text-align:right;">钢号</div>
<div style="left:791.18px;top:275.2px;width:26.79px;height:7.2px;background:#fff;box-shadow:inset .9px .9px 0 #8e8c7e,inset -0.5px -0.5px 0 #f8f8f0;"></div>
<div class="t" style="top:285.96px;font-size:5.4px;line-height:5.4px;font-weight:bold;left:326.26px;width:400px;text-align:right;">试验日期</div>
<div style="left:728.33px;top:285.06px;width:26.28px;height:7.2px;background:#fff;box-shadow:inset .9px .9px 0 #8e8c7e,inset -0.5px -0.5px 0 #f8f8f0;"></div>
<div class="t" style="top:285.96px;font-size:5.4px;line-height:5.4px;font-weight:bold;left:389.12px;width:400px;text-align:right;">试验人</div>
<div style="left:791.18px;top:285.06px;width:26.79px;height:7.2px;background:#fff;box-shadow:inset .9px .9px 0 #8e8c7e,inset -0.5px -0.5px 0 #f8f8f0;"></div>
<div class="t" style="top:295.82px;font-size:5.4px;line-height:5.4px;font-weight:bold;left:326.26px;width:400px;text-align:right;">试件形状</div>
<div style="left:728.33px;top:294.92px;width:26.28px;height:7.2px;background:#fff;box-shadow:inset .9px .9px 0 #8e8c7e,inset -0.5px -0.5px 0 #f8f8f0;"></div>
<div class="t" style="top:295.82px;font-size:5.4px;line-height:5.4px;font-weight:bold;left:389.12px;width:400px;text-align:right;">尺寸(mm)</div>
<div style="left:791.18px;top:294.92px;width:26.79px;height:7.2px;background:#fff;box-shadow:inset .9px .9px 0 #8e8c7e,inset -0.5px -0.5px 0 #f8f8f0;"></div>
<div style="left:748.42px;top:295.72px;width:5.36px;height:5.8px;background:#ece9d8;box-shadow:inset 1px 1px 0 #fff,inset -1px -1px 0 #7d7b6c;"></div>
<div class="t" style="top:296.32px;font-size:4.4px;line-height:4.4px;color:#222;left:551.1px;width:400px;text-align:center;">▾</div>
<div class="t" style="top:305.68px;font-size:5.4px;line-height:5.4px;font-weight:bold;left:326.26px;width:400px;text-align:right;">So(mm^2)</div>
<div style="left:728.33px;top:304.78px;width:26.28px;height:7.2px;background:#fff;box-shadow:inset .9px .9px 0 #8e8c7e,inset -0.5px -0.5px 0 #f8f8f0;"></div>
<div class="t" style="top:305.68px;font-size:5.4px;line-height:5.4px;font-weight:bold;left:389.12px;width:400px;text-align:right;">加载速率</div>
<div style="left:791.18px;top:304.78px;width:26.79px;height:7.2px;background:#fff;box-shadow:inset .9px .9px 0 #8e8c7e,inset -0.5px -0.5px 0 #f8f8f0;"></div>
<div style="left:811.79px;top:305.58px;width:5.36px;height:5.8px;background:#ece9d8;box-shadow:inset 1px 1px 0 #fff,inset -1px -1px 0 #7d7b6c;"></div>
<div class="t" style="top:306.18px;font-size:4.4px;line-height:4.4px;left:614.47px;width:400px;text-align:center;">▾</div>
<div class="t" style="top:315.54px;font-size:5.4px;line-height:5.4px;font-weight:bold;left:326.26px;width:400px;text-align:right;">Lo(mm)</div>
<div style="left:728.33px;top:314.64px;width:26.28px;height:7.2px;background:#fff;box-shadow:inset .9px .9px 0 #8e8c7e,inset -0.5px -0.5px 0 #f8f8f0;"></div>
<div class="t" style="top:315.54px;font-size:5.4px;line-height:5.4px;font-weight:bold;left:389.12px;width:400px;text-align:right;">引伸计标距</div>
<div style="left:791.18px;top:314.64px;width:26.79px;height:7.2px;background:#fff;box-shadow:inset .9px .9px 0 #8e8c7e,inset -0.5px -0.5px 0 #f8f8f0;"></div>
<div class="t" style="top:325.4px;font-size:5.4px;line-height:5.4px;font-weight:bold;left:326.26px;width:400px;text-align:right;">Lu(mm)</div>
<div style="left:728.33px;top:324.5px;width:26.28px;height:7.2px;background:#fff;box-shadow:inset .9px .9px 0 #8e8c7e,inset -0.5px -0.5px 0 #f8f8f0;"></div>
<div class="t" style="top:325.4px;font-size:5.4px;line-height:5.4px;font-weight:bold;left:389.12px;width:400px;text-align:right;">A(%)</div>
<div style="left:791.18px;top:324.5px;width:26.79px;height:7.2px;background:#fff;box-shadow:inset .9px .9px 0 #8e8c7e,inset -0.5px -0.5px 0 #f8f8f0;"></div>
<div class="t" style="top:335.26px;font-size:5.4px;line-height:5.4px;font-weight:bold;left:326.26px;width:400px;text-align:right;">断面尺寸</div>
<div style="left:728.33px;top:334.36px;width:26.28px;height:7.2px;background:#fff;box-shadow:inset .9px .9px 0 #8e8c7e,inset -0.5px -0.5px 0 #f8f8f0;"></div>
<div class="t" style="top:335.26px;font-size:5.4px;line-height:5.4px;font-weight:bold;left:389.12px;width:400px;text-align:right;">Su(mm^2)</div>
<div style="left:791.18px;top:334.36px;width:26.79px;height:7.2px;background:#fff;box-shadow:inset .9px .9px 0 #8e8c7e,inset -0.5px -0.5px 0 #f8f8f0;"></div>
<div class="t" style="top:345.12px;font-size:5.4px;line-height:5.4px;font-weight:bold;left:326.26px;width:400px;text-align:right;">Z(%)</div>
<div style="left:728.33px;top:344.22px;width:26.28px;height:7.2px;background:#fff;box-shadow:inset .9px .9px 0 #8e8c7e,inset -0.5px -0.5px 0 #f8f8f0;"></div>
<div class="t" style="top:345.12px;font-size:5.4px;line-height:5.4px;font-weight:bold;left:389.12px;width:400px;text-align:right;">Fm(kN)</div>
<div style="left:791.18px;top:344.22px;width:26.79px;height:7.2px;background:#fff;box-shadow:inset .9px .9px 0 #8e8c7e,inset -0.5px -0.5px 0 #f8f8f0;"></div>
<div class="t" style="top:354.98px;font-size:5.4px;line-height:5.4px;font-weight:bold;left:326.26px;width:400px;text-align:right;">Rm(MPa)</div>
<div style="left:728.33px;top:354.08px;width:26.28px;height:7.2px;background:#fff;box-shadow:inset .9px .9px 0 #8e8c7e,inset -0.5px -0.5px 0 #f8f8f0;"></div>
<div class="t" style="top:354.98px;font-size:5.4px;line-height:5.4px;font-weight:bold;left:389.12px;width:400px;text-align:right;">FeH(kN)</div>
<div style="left:791.18px;top:354.08px;width:26.79px;height:7.2px;background:#fff;box-shadow:inset .9px .9px 0 #8e8c7e,inset -0.5px -0.5px 0 #f8f8f0;"></div>
<div class="t" style="top:364.84px;font-size:5.4px;line-height:5.4px;font-weight:bold;left:326.26px;width:400px;text-align:right;">ReH(MPa)</div>
<div style="left:728.33px;top:363.94px;width:26.28px;height:7.2px;background:#fff;box-shadow:inset .9px .9px 0 #8e8c7e,inset -0.5px -0.5px 0 #f8f8f0;"></div>
<div class="t" style="top:364.84px;font-size:5.4px;line-height:5.4px;font-weight:bold;left:389.12px;width:400px;text-align:right;">FeL(kN)</div>
<div style="left:791.18px;top:363.94px;width:26.79px;height:7.2px;background:#fff;box-shadow:inset .9px .9px 0 #8e8c7e,inset -0.5px -0.5px 0 #f8f8f0;"></div>
<div class="t" style="top:374.7px;font-size:5.4px;line-height:5.4px;font-weight:bold;left:326.26px;width:400px;text-align:right;">ReL(MPa)</div>
<div style="left:728.33px;top:373.8px;width:26.28px;height:7.2px;background:#fff;box-shadow:inset .9px .9px 0 #8e8c7e,inset -0.5px -0.5px 0 #f8f8f0;"></div>
<div class="t" style="top:374.7px;font-size:5.4px;line-height:5.4px;font-weight:bold;left:389.12px;width:400px;text-align:right;">Fp(kN)</div>
<div style="left:791.18px;top:373.8px;width:26.79px;height:7.2px;background:#fff;box-shadow:inset .9px .9px 0 #8e8c7e,inset -0.5px -0.5px 0 #f8f8f0;"></div>
<div class="t" style="top:384.56px;font-size:5.4px;line-height:5.4px;font-weight:bold;left:326.26px;width:400px;text-align:right;">Rp(MPa)</div>
<div style="left:728.33px;top:383.66px;width:26.28px;height:7.2px;background:#fff;box-shadow:inset .9px .9px 0 #8e8c7e,inset -0.5px -0.5px 0 #f8f8f0;"></div>
<div class="t" style="top:384.56px;font-size:5.4px;line-height:5.4px;font-weight:bold;left:389.12px;width:400px;text-align:right;">Ft(kN)</div>
<div style="left:791.18px;top:383.66px;width:26.79px;height:7.2px;background:#fff;box-shadow:inset .9px .9px 0 #8e8c7e,inset -0.5px -0.5px 0 #f8f8f0;"></div>
<div class="t" style="top:394.42px;font-size:5.4px;line-height:5.4px;font-weight:bold;left:326.26px;width:400px;text-align:right;">Rt(MPa)</div>
<div style="left:728.33px;top:393.52px;width:26.28px;height:7.2px;background:#fff;box-shadow:inset .9px .9px 0 #8e8c7e,inset -0.5px -0.5px 0 #f8f8f0;"></div>
<div class="t" style="top:394.42px;font-size:5.4px;line-height:5.4px;font-weight:bold;left:389.12px;width:400px;text-align:right;">E(GPa)</div>
<div style="left:791.18px;top:393.52px;width:26.79px;height:7.2px;background:#fff;box-shadow:inset .9px .9px 0 #8e8c7e,inset -0.5px -0.5px 0 #f8f8f0;"></div>
<div class="t" style="top:404.28px;font-size:5.4px;line-height:5.4px;font-weight:bold;left:326.26px;width:400px;text-align:right;">屈强比</div>
<div style="left:728.33px;top:403.38px;width:26.28px;height:7.2px;background:#fff;box-shadow:inset .9px .9px 0 #8e8c7e,inset -0.5px -0.5px 0 #f8f8f0;"></div>
<div class="t" style="top:404.28px;font-size:5.4px;line-height:5.4px;font-weight:bold;left:389.12px;width:400px;text-align:right;">强屈比</div>
<div style="left:791.18px;top:403.38px;width:26.79px;height:7.2px;background:#fff;box-shadow:inset .9px .9px 0 #8e8c7e,inset -0.5px -0.5px 0 #f8f8f0;"></div>
<div class="t" style="top:414.14px;font-size:5.4px;line-height:5.4px;font-weight:bold;left:326.26px;width:400px;text-align:right;">A(%)</div>
<div style="left:728.33px;top:413.24px;width:26.28px;height:7.2px;background:#fff;box-shadow:inset .9px .9px 0 #8e8c7e,inset -0.5px -0.5px 0 #f8f8f0;"></div>
<div class="t" style="top:414.14px;font-size:5.4px;line-height:5.4px;font-weight:bold;left:389.12px;width:400px;text-align:right;">Agt(%)</div>
<div style="left:791.18px;top:413.24px;width:26.79px;height:7.2px;background:#fff;box-shadow:inset .9px .9px 0 #8e8c7e,inset -0.5px -0.5px 0 #f8f8f0;"></div>
<div style="left:684.53px;top:243.4px;width:0.93px;height:245.6px;background:#b9b7a8;"></div>
<div style="left:685.56px;top:243.4px;width:0.62px;height:245.6px;background:#fbfaf4;"></div>
<div style="left:820.34px;top:243.4px;width:1.03px;height:245.6px;background:#9c9a8c;"></div>
<div style="left:821.37px;top:243.4px;width:0.82px;height:245.6px;background:#fbfaf4;"></div>
<div class="t" style="top:254.3px;font-size:5.8px;line-height:5.8px;color:#111;font-weight:bold;left:826.5px;">位移</div>
<div style="left:841.5px;top:253.4px;width:0.8px;height:8px;background:#555;"></div>
<div style="left:823.5px;top:261.4px;width:131.9px;height:170px;background:#ece9d8;box-shadow:inset -1.2px -1.2px 0 #6e6c5e, inset .6px .6px 0 #fff;"></div>
<div class="t" style="top:285.3px;font-size:5.8px;line-height:5.8px;color:#111;font-weight:bold;left:826.5px;">速度</div>
<div style="left:839px;top:284.4px;width:23.6px;height:7.4px;background:#fff;box-shadow:inset .9px .9px 0 #8e8c7e,inset -0.5px -0.5px 0 #f8f8f0;"></div>
<div class="t" style="top:285.7px;font-size:5.2px;line-height:5.2px;color:#222;font-weight:bold;left:841.5px;">0.0500</div>
<div class="t" style="top:285.6px;font-size:5.4px;line-height:5.4px;color:#222;left:866.5px;">mm/min</div>
<div style="left:826px;top:294.6px;width:126.5px;height:6px;background:#fff;box-shadow:inset 0 0 0 .6px #c8c5b4;"></div>
<div style="left:826px;top:294.6px;width:5px;height:6px;background:#ece9d8;box-shadow:inset 1px 1px 0 #fff,inset -1px -1px 0 #7d7b6c;"></div>
<div class="t" style="top:295.3px;font-size:4.6px;line-height:4.6px;left:628.5px;width:400px;text-align:center;">◂</div>
<div style="left:831.4px;top:294.6px;width:3.2px;height:6px;background:#ece9d8;box-shadow:inset 1px 1px 0 #fff,inset -1px -1px 0 #7d7b6c;"></div>
<div class="t" style="top:295.3px;font-size:4.6px;line-height:4.6px;left:750px;width:400px;text-align:center;">▸</div>
<div style="left:826px;top:306.4px;width:126.5px;height:0.6px;background:#a8b4c4;"></div>
<div style="left:872px;top:303.5px;width:33px;height:6px;background:#ece9d8;"></div>
<div class="t" style="top:304px;font-size:5.2px;line-height:5.2px;color:#111;font-weight:bold;left:688.5px;width:400px;text-align:center;">位移 mm/min</div>
<div style="left:825.4px;top:314.6px;width:24.5px;height:12.4px;background:#b6d9ea;box-shadow:inset 1px 1px 0 #fff,inset -1px -1px 0 #b8b5a4;"></div>
<div class="t" style="top:318.6px;font-size:5.2px;line-height:5.2px;color:#222;left:635.45px;width:400px;text-align:center;">0.05</div>
<div style="left:843.1px;top:317.4px;width:1.8px;height:3px;background:#e81818;"></div>
<div style="left:850.5px;top:314.6px;width:24.6px;height:12.4px;background:#f0eee2;box-shadow:inset 1px 1px 0 #fff,inset -1px -1px 0 #b8b5a4;"></div>
<div class="t" style="top:318.6px;font-size:5.2px;line-height:5.2px;color:#222;left:660.6px;width:400px;text-align:center;">0.1</div>
<svg style="left:868.3px;top:317.2px;" width="3" height="4.4" viewBox="0 0 3 4.4"><path d="M.5 0V4.4M.5 .4H2.6V2.2H.5" stroke="#444" stroke-width=".6" fill="none"/></svg>
<div style="left:875.7px;top:314.6px;width:24.5px;height:12.4px;background:#f0eee2;box-shadow:inset 1px 1px 0 #fff,inset -1px -1px 0 #b8b5a4;"></div>
<div class="t" style="top:318.6px;font-size:5.2px;line-height:5.2px;color:#222;left:685.75px;width:400px;text-align:center;">0.2</div>
<svg style="left:893.4px;top:317.2px;" width="3" height="4.4" viewBox="0 0 3 4.4"><path d="M.5 0V4.4M.5 .4H2.6V2.2H.5" stroke="#444" stroke-width=".6" fill="none"/></svg>
<div style="left:900.8px;top:314.6px;width:24.5px;height:12.4px;background:#f0eee2;box-shadow:inset 1px 1px 0 #fff,inset -1px -1px 0 #b8b5a4;"></div>
<div class="t" style="top:318.6px;font-size:5.2px;line-height:5.2px;color:#222;left:710.85px;width:400px;text-align:center;">0.5</div>
<svg style="left:918.5px;top:317.2px;" width="3" height="4.4" viewBox="0 0 3 4.4"><path d="M.5 0V4.4M.5 .4H2.6V2.2H.5" stroke="#444" stroke-width=".6" fill="none"/></svg>
<div style="left:925.9px;top:314.6px;width:24.5px;height:12.4px;background:#f0eee2;box-shadow:inset 1px 1px 0 #fff,inset -1px -1px 0 #b8b5a4;"></div>
<div class="t" style="top:318.6px;font-size:5.2px;line-height:5.2px;color:#222;left:735.95px;width:400px;text-align:center;">1</div>
<svg style="left:943.6px;top:317.2px;" width="3" height="4.4" viewBox="0 0 3 4.4"><path d="M.5 0V4.4M.5 .4H2.6V2.2H.5" stroke="#444" stroke-width=".6" fill="none"/></svg>
<div style="left:825.4px;top:327.6px;width:24.5px;height:12.8px;background:#f0eee2;box-shadow:inset 1px 1px 0 #fff,inset -1px -1px 0 #b8b5a4;"></div>
<div class="t" style="top:331.8px;font-size:5.2px;line-height:5.2px;color:#222;left:635.45px;width:400px;text-align:center;">2</div>
<svg style="left:843.1px;top:330.4px;" width="3" height="4.4" viewBox="0 0 3 4.4"><path d="M.5 0V4.4M.5 .4H2.6V2.2H.5" stroke="#444" stroke-width=".6" fill="none"/></svg>
<div style="left:850.5px;top:327.6px;width:24.6px;height:12.8px;background:#f0eee2;box-shadow:inset 1px 1px 0 #fff,inset -1px -1px 0 #b8b5a4;"></div>
<div class="t" style="top:331.8px;font-size:5.2px;line-height:5.2px;color:#222;left:660.6px;width:400px;text-align:center;">5</div>
<svg style="left:868.3px;top:330.4px;" width="3" height="4.4" viewBox="0 0 3 4.4"><path d="M.5 0V4.4M.5 .4H2.6V2.2H.5" stroke="#444" stroke-width=".6" fill="none"/></svg>
<div style="left:875.7px;top:327.6px;width:24.5px;height:12.8px;background:#f0eee2;box-shadow:inset 1px 1px 0 #fff,inset -1px -1px 0 #b8b5a4;"></div>
<div class="t" style="top:331.8px;font-size:5.2px;line-height:5.2px;color:#222;left:685.75px;width:400px;text-align:center;">10</div>
<svg style="left:893.4px;top:330.4px;" width="3" height="4.4" viewBox="0 0 3 4.4"><path d="M.5 0V4.4M.5 .4H2.6V2.2H.5" stroke="#444" stroke-width=".6" fill="none"/></svg>
<div style="left:900.8px;top:327.6px;width:24.5px;height:12.8px;background:#f0eee2;box-shadow:inset 1px 1px 0 #fff,inset -1px -1px 0 #b8b5a4;"></div>
<div class="t" style="top:331.8px;font-size:5.2px;line-height:5.2px;color:#222;left:710.85px;width:400px;text-align:center;">20</div>
<svg style="left:918.5px;top:330.4px;" width="3" height="4.4" viewBox="0 0 3 4.4"><path d="M.5 0V4.4M.5 .4H2.6V2.2H.5" stroke="#444" stroke-width=".6" fill="none"/></svg>
<div style="left:925.9px;top:327.6px;width:24.5px;height:12.8px;background:#f0eee2;box-shadow:inset 1px 1px 0 #fff,inset -1px -1px 0 #b8b5a4;"></div>
<div class="t" style="top:331.8px;font-size:5.2px;line-height:5.2px;color:#222;left:735.95px;width:400px;text-align:center;">50</div>
<svg style="left:943.6px;top:330.4px;" width="3" height="4.4" viewBox="0 0 3 4.4"><path d="M.5 0V4.4M.5 .4H2.6V2.2H.5" stroke="#444" stroke-width=".6" fill="none"/></svg>
<div style="left:825.4px;top:341px;width:24.5px;height:12.6px;background:#f0eee2;box-shadow:inset 1px 1px 0 #fff,inset -1px -1px 0 #b8b5a4;"></div>
<div class="t" style="top:345.1px;font-size:5.2px;line-height:5.2px;color:#222;left:635.45px;width:400px;text-align:center;">100</div>
<svg style="left:843.1px;top:343.7px;" width="3" height="4.4" viewBox="0 0 3 4.4"><path d="M.5 0V4.4M.5 .4H2.6V2.2H.5" stroke="#444" stroke-width=".6" fill="none"/></svg>
<div style="left:850.5px;top:341px;width:24.6px;height:12.6px;background:#f0eee2;box-shadow:inset 1px 1px 0 #fff,inset -1px -1px 0 #b8b5a4;"></div>
<div class="t" style="top:345.1px;font-size:5.2px;line-height:5.2px;color:#222;left:660.6px;width:400px;text-align:center;">200</div>
<svg style="left:868.3px;top:343.7px;" width="3" height="4.4" viewBox="0 0 3 4.4"><path d="M.5 0V4.4M.5 .4H2.6V2.2H.5" stroke="#444" stroke-width=".6" fill="none"/></svg>
<div style="left:875.7px;top:341px;width:24.5px;height:12.6px;background:#f0eee2;box-shadow:inset 1px 1px 0 #fff,inset -1px -1px 0 #b8b5a4;"></div>
<div class="t" style="top:345.1px;font-size:5.2px;line-height:5.2px;color:#222;left:685.75px;width:400px;text-align:center;">500</div>
<svg style="left:893.4px;top:343.7px;" width="3" height="4.4" viewBox="0 0 3 4.4"><path d="M.5 0V4.4M.5 .4H2.6V2.2H.5" stroke="#444" stroke-width=".6" fill="none"/></svg>
<div style="left:853px;top:433.6px;width:98.92px;height:37.8px;box-shadow:inset 0 0 0 .8px #d2cfbe, .8px .8px 0 #fff;"></div>
<div style="left:858.16px;top:441.8px;width:26.28px;height:26px;background:#bcbcbc;box-shadow:inset -1px -1px 0 #999, inset 1px 1px 0 #d8d8d8;"></div>
<svg style="left:866.29px;top:445.2px;" width="12" height="11" viewBox="0 0 12 11"><path d="M1 0.4L11 5.4L1 10.6Z" fill="#8a8a8a" stroke="#666" stroke-width=".6"/></svg>
<div class="t" style="top:460.6px;font-size:5.2px;line-height:5.2px;color:#333;font-weight:bold;left:671.29px;width:400px;text-align:center;">开始(F5)</div>
<div style="left:889.58px;top:441.8px;width:26.28px;height:26px;background:#f6ec10;box-shadow:inset -1px -1px 0 #b8b000;"></div>
<svg style="left:896.22px;top:444.8px;" width="13" height="13" viewBox="0 0 13 13"><path d="M3.8 .4H9.2L12.6 3.8V9.2L9.2 12.6H3.8L.4 9.2V3.8Z" fill="#e8101c"/></svg>
<div class="t" style="top:460.6px;font-size:5.2px;line-height:5.2px;color:#c01010;font-weight:bold;left:702.72px;width:400px;text-align:center;">停止(F6)</div>
<div style="left:921.01px;top:441.8px;width:26.28px;height:26px;background:#bcbcbc;box-shadow:inset -1px -1px 0 #999, inset 1px 1px 0 #d8d8d8;"></div>
<svg style="left:924.15px;top:444.4px;" width="20" height="13" viewBox="0 0 20 13"><path d="M1 6.4H19" stroke="#333" stroke-width="1.2"/><path d="M6 1H14L10 5.2Z" fill="#444"/><path d="M10 7.6L13.4 12H6.6Z" fill="#8a8a8a"/></svg>
<div class="t" style="top:460.6px;font-size:5.2px;line-height:5.2px;color:#222;font-weight:bold;left:734.15px;width:400px;text-align:center;">复位</div>
<div style="left:828.4px;top:437.8px;width:19.4px;height:20.2px;background:#c8c8c4;box-shadow:inset -1px -1px 0 #aaa;"></div>
<svg style="left:833.1px;top:440.3px;" width="10" height="15.2" viewBox="0 0 10 15.2"><path d="M5 0L9.4 5.4H.6Z" fill="#555"/><path d="M5 15.2 L9.4 9.8 H.6Z" fill="#555"/><rect x="1.4" y="6.4" width="7.2" height="2.4" fill="#777"/></svg>
<div style="left:829.4px;top:477.2px;width:5.6px;height:5.6px;background:#fff;box-shadow:inset .9px .9px 0 #8e8c7e,inset -0.5px -0.5px 0 #f8f8f0;"></div>
<div class="t" style="top:477.3px;font-size:5.4px;line-height:5.4px;color:#e01818;left:837.5px;">试验结束自动返回 (速度: 100mm/min)</div>
<div style="left:496.5px;top:489.4px;width:460.5px;height:11.2px;background:#ece9d8;box-shadow:inset 0 .8px 0 #b8b5a4, inset 0 1.6px 0 #fff;"></div>
<div style="left:901.5px;top:491.5px;width:0.8px;height:8.5px;background:#d4d1c0;"></div>
<div class="t" style="top:492.7px;font-size:5.4px;line-height:5.4px;color:#111;font-weight:bold;left:497.5px;">欲获得帮助，请在“帮助”菜单中，单击“帮助主题”。</div>
<div class="t" style="top:504.62px;font-size:11.55px;line-height:11.55px;color:#626262;left:496.5px;">只具有位移控制模式软件控制界面</div>
<svg style="left:883px;top:514.5px;" width="6" height="3" viewBox="0 0 6 3"><path d="M.4 2.6C1.4 .2 4.6 .2 5.6 2.6" stroke="#888" stroke-width=".6" fill="none"/></svg>
<div style="left:990px;top:1px;width:322px;height:241.4px;background:#ece9d8;box-shadow:inset 0 0 0 1px #2a66d2;"></div>
<div style="left:990px;top:1px;width:322px;height:12.4px;background:linear-gradient(#0b5bd6,#0a52c6 45%,#0846b2);"></div>
<div class="t" style="top:4.15px;font-size:6.1px;line-height:6.1px;color:#fff;font-weight:bold;letter-spacing:0.2px;left:993px;">新建报表模板</div>
<div class="t" style="top:16.9px;font-size:5.4px;line-height:5.4px;color:#111;font-weight:bold;left:993px;">可选项目:</div>
<div style="left:991.5px;top:25.4px;width:67.1px;height:104.6px;background:#fff;box-shadow:inset .9px .9px 0 #8e8c7e,inset -0.5px -0.5px 0 #f8f8f0;"></div>
<div class="t" style="top:26.25px;font-size:5.1px;line-height:5.1px;color:#111;font-weight:bold;left:993.5px;">Lu(mm)</div>
<div class="t" style="top:31.97px;font-size:5.1px;line-height:5.1px;color:#111;font-weight:bold;left:993.5px;">A(%)</div>
<div class="t" style="top:37.69px;font-size:5.1px;line-height:5.1px;color:#111;font-weight:bold;left:993.5px;">断面尺寸</div>
<div class="t" style="top:43.41px;font-size:5.1px;line-height:5.1px;color:#111;font-weight:bold;left:993.5px;">Su(mm^2)</div>
<div class="t" style="top:49.13px;font-size:5.1px;line-height:5.1px;color:#111;font-weight:bold;left:993.5px;">Z(%)</div>
<div class="t" style="top:54.85px;font-size:5.1px;line-height:5.1px;color:#111;font-weight:bold;left:993.5px;">Fm(kN)</div>
<div class="t" style="top:60.57px;font-size:5.1px;line-height:5.1px;color:#111;font-weight:bold;left:993.5px;">Rm(MPa)</div>
<div class="t" style="top:66.29px;font-size:5.1px;line-height:5.1px;color:#111;font-weight:bold;left:993.5px;">FeH(kN)</div>
<div class="t" style="top:72.01px;font-size:5.1px;line-height:5.1px;color:#111;font-weight:bold;left:993.5px;">ReH(MPa)</div>
<div class="t" style="top:77.73px;font-size:5.1px;line-height:5.1px;color:#111;font-weight:bold;left:993.5px;">FeL(kN)</div>
<div class="t" style="top:83.45px;font-size:5.1px;line-height:5.1px;color:#111;font-weight:bold;left:993.5px;">ReL(MPa)</div>
<div class="t" style="top:89.17px;font-size:5.1px;line-height:5.1px;color:#111;font-weight:bold;left:993.5px;">Fp(kN)</div>
<div class="t" style="top:94.89px;font-size:5.1px;line-height:5.1px;color:#111;font-weight:bold;left:993.5px;">Rp(MPa)</div>
<div class="t" style="top:100.61px;font-size:5.1px;line-height:5.1px;color:#111;font-weight:bold;left:993.5px;">Ft(kN)</div>
<div class="t" style="top:106.33px;font-size:5.1px;line-height:5.1px;color:#111;font-weight:bold;left:993.5px;">Rt(MPa)</div>
<div class="t" style="top:112.05px;font-size:5.1px;line-height:5.1px;color:#111;font-weight:bold;left:993.5px;">E(GPa)</div>
<div class="t" style="top:117.77px;font-size:5.1px;line-height:5.1px;color:#111;font-weight:bold;left:993.5px;">屈强比</div>
<div class="t" style="top:123.49px;font-size:5.1px;line-height:5.1px;color:#111;font-weight:bold;left:993.5px;">强屈比</div>
<div style="left:1051.2px;top:26.2px;width:6.8px;height:103.2px;background:#f4f3ee;"></div>
<div style="left:1051.6px;top:71px;width:6px;height:50.5px;background:#c2d4f6;border-radius:1px;"></div>
<div class="t" style="top:27.1px;font-size:5px;line-height:5px;color:#4868b8;left:854.6px;width:400px;text-align:center;">▴</div>
<div style="left:1051.6px;top:26.4px;width:6px;height:6px;background:#c8d8f8;opacity:.55;"></div>
<div class="t" style="top:123.5px;font-size:5px;line-height:5px;color:#4868b8;left:854.6px;width:400px;text-align:center;">▾</div>
<div style="left:1051.6px;top:123px;width:6px;height:6px;background:#c8d8f8;opacity:.55;"></div>
<div style="left:1062px;top:33.8px;width:20.4px;height:9.6px;background:#f2f0e4;box-shadow:inset .8px .8px 0 #fff,inset -1px -1px 0 #8a8878;"></div>
<div class="t" style="top:35.8px;font-size:5.6px;line-height:5.6px;color:#111;font-weight:bold;left:872.2px;width:400px;text-align:center;">添加</div>
<div style="left:1062px;top:48.85px;width:20.4px;height:9.6px;background:#f2f0e4;box-shadow:inset .8px .8px 0 #fff,inset -1px -1px 0 #8a8878;"></div>
<div class="t" style="top:50.85px;font-size:5.6px;line-height:5.6px;color:#c4c2b2;font-weight:bold;left:872.2px;width:400px;text-align:center;">删除</div>
<div style="left:1062px;top:63.9px;width:20.4px;height:9.6px;background:#f2f0e4;box-shadow:inset .8px .8px 0 #fff,inset -1px -1px 0 #8a8878;"></div>
<div class="t" style="top:65.9px;font-size:5.6px;line-height:5.6px;color:#111;font-weight:bold;left:872.2px;width:400px;text-align:center;">全选</div>
<div style="left:1062px;top:78.95px;width:20.4px;height:9.6px;background:#f2f0e4;box-shadow:inset .8px .8px 0 #fff,inset -1px -1px 0 #8a8878;"></div>
<div class="t" style="top:80.95px;font-size:5.6px;line-height:5.6px;color:#111;font-weight:bold;left:872.2px;width:400px;text-align:center;">清除</div>
<div style="left:1062px;top:94px;width:20.4px;height:9.6px;background:#f2f0e4;box-shadow:inset .8px .8px 0 #fff,inset -1px -1px 0 #8a8878;"></div>
<div class="t" style="top:96px;font-size:5.6px;line-height:5.6px;color:#c4c2b2;font-weight:bold;left:872.2px;width:400px;text-align:center;">上移</div>
<div style="left:1062px;top:109.05px;width:20.4px;height:9.6px;background:#f2f0e4;box-shadow:inset .8px .8px 0 #fff,inset -1px -1px 0 #8a8878;"></div>
<div class="t" style="top:111.05px;font-size:5.6px;line-height:5.6px;color:#c4c2b2;font-weight:bold;left:872.2px;width:400px;text-align:center;">下移</div>
<div class="t" style="top:17.7px;font-size:5.4px;line-height:5.4px;color:#111;font-weight:bold;left:1086px;">报表项目:</div>
<div style="left:1114px;top:18px;width:4px;height:4px;background:#fff;box-shadow:inset .7px .7px 0 #777;"></div>
<div class="t" style="top:17.8px;font-size:5.2px;line-height:5.2px;color:#c4c2b2;left:1120px;">强栏: 分栏式同行依次排列 — 按行</div>
<div style="left:1212px;top:18px;width:4px;height:4px;background:#fff;box-shadow:inset .7px .7px 0 #777;"></div>
<div class="t" style="top:17.8px;font-size:5.2px;line-height:5.2px;color:#c4c2b2;left:1219px;">显示标识</div>
<div style="left:1248.8px;top:16.2px;width:57.6px;height:8.2px;background:#fff;box-shadow:inset .9px .9px 0 #8e8c7e,inset -0.5px -0.5px 0 #f8f8f0;"></div>
<div style="left:1084.4px;top:25.6px;width:222px;height:105.4px;background:#fff;box-shadow:inset .9px .9px 0 #8e8c7e,inset -0.5px -0.5px 0 #f8f8f0;"></div>
<div style="left:1085px;top:26.4px;width:63.4px;height:7.2px;background:#efede0;box-shadow:inset -1px -1px 0 #a8a594, inset .6px .6px 0 #fff;"></div>
<div class="t" style="top:27.55px;font-size:5.3px;line-height:5.3px;color:#111;font-weight:bold;left:1088px;">项目标题</div>
<div style="left:1149px;top:26.4px;width:56.6px;height:7.2px;background:#efede0;box-shadow:inset -1px -1px 0 #a8a594, inset .6px .6px 0 #fff;"></div>
<div class="t" style="top:27.55px;font-size:5.3px;line-height:5.3px;color:#111;font-weight:bold;left:1152px;">项目名称</div>
<div style="left:1206.2px;top:26.4px;width:17.4px;height:7.2px;background:#efede0;box-shadow:inset -1px -1px 0 #a8a594, inset .6px .6px 0 #fff;"></div>
<div class="t" style="top:27.55px;font-size:5.3px;line-height:5.3px;color:#111;font-weight:bold;left:1209.2px;">强栏</div>
<div style="left:1224.2px;top:26.4px;width:18.4px;height:7.2px;background:#efede0;box-shadow:inset -1px -1px 0 #a8a594, inset .6px .6px 0 #fff;"></div>
<div class="t" style="top:27.55px;font-size:5.3px;line-height:5.3px;color:#111;font-weight:bold;left:1227.2px;">自...</div>
<div style="left:1243.2px;top:26.4px;width:45.2px;height:7.2px;background:#efede0;box-shadow:inset -1px -1px 0 #a8a594, inset .6px .6px 0 #fff;"></div>
<div class="t" style="top:27.55px;font-size:5.3px;line-height:5.3px;color:#111;font-weight:bold;left:1246.2px;">标识文字</div>
<div style="left:1289px;top:26.4px;width:8.4px;height:7.2px;background:#efede0;box-shadow:inset -1px -1px 0 #a8a594, inset .6px .6px 0 #fff;"></div>
<div style="left:1085.2px;top:34.2px;width:212.4px;height:6.4px;background:#ebe8d6;"></div>
<div class="t" style="top:34.75px;font-size:5.3px;line-height:5.3px;color:#111;font-weight:bold;left:1087px;">试样批号</div>
<div class="t" style="top:34.75px;font-size:5.3px;line-height:5.3px;color:#111;font-weight:bold;left:1151.5px;">批号</div>
<div class="t" style="top:40.97px;font-size:5.3px;line-height:5.3px;color:#111;font-weight:bold;left:1087px;">钢号</div>
<div class="t" style="top:40.97px;font-size:5.3px;line-height:5.3px;color:#111;font-weight:bold;left:1151.5px;">钢号</div>
<div class="t" style="top:47.19px;font-size:5.3px;line-height:5.3px;color:#111;font-weight:bold;left:1087px;">试验日期</div>
<div class="t" style="top:47.19px;font-size:5.3px;line-height:5.3px;color:#111;font-weight:bold;left:1151.5px;">试验日期</div>
<div class="t" style="top:53.41px;font-size:5.3px;line-height:5.3px;color:#111;font-weight:bold;left:1087px;">试验人</div>
<div class="t" style="top:53.41px;font-size:5.3px;line-height:5.3px;color:#111;font-weight:bold;left:1151.5px;">试验人</div>
<div class="t" style="top:59.63px;font-size:5.3px;line-height:5.3px;color:#111;font-weight:bold;left:1087px;">试样形状</div>
<div class="t" style="top:59.63px;font-size:5.3px;line-height:5.3px;color:#111;font-weight:bold;left:1151.5px;">形状</div>
<div class="t" style="top:65.85px;font-size:5.3px;line-height:5.3px;color:#111;font-weight:bold;left:1087px;">尺寸(mm)</div>
<div class="t" style="top:65.85px;font-size:5.3px;line-height:5.3px;color:#111;font-weight:bold;left:1151.5px;">尺寸</div>
<div class="t" style="top:72.07px;font-size:5.3px;line-height:5.3px;color:#111;font-weight:bold;left:1087px;">So(mm^2)</div>
<div class="t" style="top:72.07px;font-size:5.3px;line-height:5.3px;color:#111;font-weight:bold;left:1151.5px;">面积</div>
<div class="t" style="top:78.29px;font-size:5.3px;line-height:5.3px;color:#111;font-weight:bold;left:1087px;">标距伸波</div>
<div class="t" style="top:78.29px;font-size:5.3px;line-height:5.3px;color:#111;font-weight:bold;left:1151.5px;">标距伸波</div>
<div class="t" style="top:84.51px;font-size:5.3px;line-height:5.3px;color:#111;font-weight:bold;left:1087px;">Lo(mm)</div>
<div class="t" style="top:84.51px;font-size:5.3px;line-height:5.3px;color:#111;font-weight:bold;left:1151.5px;">Lo</div>
<div class="t" style="top:90.73px;font-size:5.3px;line-height:5.3px;color:#111;font-weight:bold;left:1087px;">引伸计标距</div>
<div class="t" style="top:90.73px;font-size:5.3px;line-height:5.3px;color:#111;font-weight:bold;left:1151.5px;">Gauge</div>
<div class="t" style="top:96.95px;font-size:5.3px;line-height:5.3px;color:#111;font-weight:bold;left:1087px;">Lu(mm)</div>
<div class="t" style="top:96.95px;font-size:5.3px;line-height:5.3px;color:#111;font-weight:bold;left:1151.5px;">Lu</div>
<div class="t" style="top:103.17px;font-size:5.3px;line-height:5.3px;color:#111;font-weight:bold;left:1087px;">A(%)</div>
<div class="t" style="top:103.17px;font-size:5.3px;line-height:5.3px;color:#111;font-weight:bold;left:1151.5px;">A</div>
<div class="t" style="top:109.39px;font-size:5.3px;line-height:5.3px;color:#111;font-weight:bold;left:1087px;">断面尺寸</div>
<div class="t" style="top:109.39px;font-size:5.3px;line-height:5.3px;color:#111;font-weight:bold;left:1151.5px;">断面尺寸</div>
<div class="t" style="top:115.61px;font-size:5.3px;line-height:5.3px;color:#111;font-weight:bold;left:1087px;">Su(mm^2)</div>
<div class="t" style="top:115.61px;font-size:5.3px;line-height:5.3px;color:#111;font-weight:bold;left:1151.5px;">Su</div>
<div class="t" style="top:121.83px;font-size:5.3px;line-height:5.3px;color:#111;font-weight:bold;left:1087px;">Z(%)</div>
<div class="t" style="top:121.83px;font-size:5.3px;line-height:5.3px;color:#111;font-weight:bold;left:1151.5px;">Z</div>
<div style="left:1298px;top:26.4px;width:7.8px;height:104px;background:#f4f3ee;"></div>
<div style="left:1298.4px;top:33.6px;width:7px;height:50.4px;background:#c2d4f6;border-radius:1px;"></div>
<div class="t" style="top:27.5px;font-size:5px;line-height:5px;color:#4868b8;left:1101.9px;width:400px;text-align:center;">▴</div>
<div class="t" style="top:124.5px;font-size:5px;line-height:5px;color:#4868b8;left:1101.9px;width:400px;text-align:center;">▾</div>
<div style="left:991.6px;top:134.6px;width:263px;height:45.6px;box-shadow:inset 0 0 0 1px #c9c6b4, 1px 1px 0 #fff;"></div>
<div class="t" style="top:139.15px;font-size:5.3px;line-height:5.3px;color:#111;font-weight:bold;left:617.5px;width:400px;text-align:right;">标题:</div>
<div style="left:1023px;top:138px;width:228.6px;height:7.4px;background:#fff;box-shadow:inset .9px .9px 0 #8e8c7e,inset -0.5px -0.5px 0 #f8f8f0;"></div>
<div class="t" style="top:139.3px;font-size:5.2px;line-height:5.2px;color:#111;font-weight:bold;left:1025px;">济南恒思盛大仪器有限公司</div>
<div class="t" style="top:148.95px;font-size:5.3px;line-height:5.3px;color:#111;font-weight:bold;left:617.5px;width:400px;text-align:right;">副标题:</div>
<div style="left:1023px;top:147.8px;width:228.6px;height:7.4px;background:#f4f3ea;box-shadow:inset .9px .9px 0 #8e8c7e,inset -0.5px -0.5px 0 #f8f8f0;"></div>
<div class="t" style="top:149.1px;font-size:5.2px;line-height:5.2px;color:#111;font-weight:bold;left:1025px;">拉伸试验</div>
<div class="t" style="top:159.15px;font-size:5.3px;line-height:5.3px;color:#111;font-weight:bold;left:621px;width:400px;text-align:right;">页眉: (左)</div>
<div style="left:1023px;top:157.8px;width:98.4px;height:8px;background:#fff;box-shadow:inset .9px .9px 0 #8e8c7e,inset -0.5px -0.5px 0 #f8f8f0;"></div>
<div class="t" style="top:159.15px;font-size:5.3px;line-height:5.3px;color:#111;font-weight:bold;left:752px;width:400px;text-align:right;">页眉: (右)</div>
<div style="left:1154px;top:157.8px;width:97.6px;height:8px;background:#fff;box-shadow:inset .9px .9px 0 #8e8c7e,inset -0.5px -0.5px 0 #f8f8f0;"></div>
<div class="t" style="top:169.15px;font-size:5.3px;line-height:5.3px;color:#111;font-weight:bold;left:621px;width:400px;text-align:right;">页脚: (左)</div>
<div style="left:1023px;top:168px;width:98.4px;height:7.6px;background:#fff;box-shadow:inset .9px .9px 0 #8e8c7e,inset -0.5px -0.5px 0 #f8f8f0;"></div>
<div class="t" style="top:169.15px;font-size:5.3px;line-height:5.3px;color:#111;font-weight:bold;left:752px;width:400px;text-align:right;">页脚: (右)</div>
<div style="left:1154px;top:168px;width:97.6px;height:7.6px;background:#fff;box-shadow:inset .9px .9px 0 #8e8c7e,inset -0.5px -0.5px 0 #f8f8f0;"></div>
<div style="left:1265px;top:137.6px;width:38px;height:10.6px;background:#f2f0e4;box-shadow:inset .8px .8px 0 #fff,inset -1px -1px 0 #8a8878;"></div>
<div class="t" style="top:140.1px;font-size:5.6px;line-height:5.6px;font-weight:bold;left:1084px;width:400px;text-align:center;">保存</div>
<div style="left:1265px;top:152px;width:38px;height:10.8px;background:#f2f0e4;box-shadow:inset .8px .8px 0 #fff,inset -1px -1px 0 #8a8878;"></div>
<div class="t" style="top:154.6px;font-size:5.6px;line-height:5.6px;font-weight:bold;left:1084px;width:400px;text-align:center;">预览</div>
<div style="left:1265px;top:166.4px;width:38px;height:10.8px;background:#f2f0e4;box-shadow:inset .8px .8px 0 #fff,inset -1px -1px 0 #8a8878;"></div>
<div class="t" style="top:169px;font-size:5.6px;line-height:5.6px;font-weight:bold;left:1084px;width:400px;text-align:center;">取消</div>
<div style="left:991.6px;top:184.4px;width:263px;height:40.2px;box-shadow:inset 0 0 0 1px #c9c6b4, 1px 1px 0 #fff;"></div>
<div style="left:993px;top:181.6px;width:33px;height:5.8px;background:#ece9d8;"></div>
<div style="left:994.4px;top:182px;width:4.2px;height:4.4px;background:#fff;box-shadow:inset .7px .7px 0 #777;"></div>
<div class="t" style="top:182.2px;font-size:4px;line-height:4px;color:#111;left:796.5px;width:400px;text-align:center;">✔</div>
<div class="t" style="top:181.75px;font-size:5.3px;line-height:5.3px;color:#111;font-weight:bold;left:1002.5px;">打印曲线</div>
<div class="t" style="top:190.55px;font-size:5.3px;line-height:5.3px;color:#111;font-weight:bold;left:616.5px;width:400px;text-align:right;">类型:</div>
<div style="left:1018.8px;top:189.6px;width:67.4px;height:7.2px;background:#fff;box-shadow:inset .9px .9px 0 #8e8c7e,inset -0.5px -0.5px 0 #f8f8f0;"></div>
<div class="t" style="top:190.7px;font-size:5.2px;line-height:5.2px;color:#111;font-weight:bold;left:1020.8px;">力-变形</div>
<div style="left:1080px;top:190.4px;width:5.4px;height:5.6px;background:#ece9d8;box-shadow:inset 1px 1px 0 #fff,inset -1px -1px 0 #7d7b6c;"></div>
<div class="t" style="top:191px;font-size:4.4px;line-height:4.4px;left:882.7px;width:400px;text-align:center;">▾</div>
<div class="t" style="top:190.55px;font-size:5.3px;line-height:5.3px;color:#111;font-weight:bold;left:1094px;">高度:</div>
<div style="left:1109px;top:189.6px;width:15.2px;height:7.2px;background:#fff;box-shadow:inset .9px .9px 0 #8e8c7e,inset -0.5px -0.5px 0 #f8f8f0;"></div>
<div class="t" style="top:190.6px;font-size:4.8px;line-height:4.8px;color:#222;left:1110.4px;">150</div>
<div class="t" style="top:190.55px;font-size:5.3px;line-height:5.3px;color:#111;font-weight:bold;left:1127.5px;">mm 线宽:</div>
<div style="left:1152px;top:189.6px;width:12px;height:7.2px;background:#fff;box-shadow:inset .9px .9px 0 #8e8c7e,inset -0.5px -0.5px 0 #f8f8f0;"></div>
<div class="t" style="top:190.6px;font-size:4.8px;line-height:4.8px;color:#222;left:1153.4px;">1</div>
<div class="t" style="top:190.55px;font-size:5.3px;line-height:5.3px;color:#111;font-weight:bold;left:1169px;">曲线颜色</div>
<div class="t" style="top:201.15px;font-size:5.3px;line-height:5.3px;color:#111;font-weight:bold;left:616.5px;width:400px;text-align:right;">标题:</div>
<div style="left:1018.8px;top:200.2px;width:173px;height:7.2px;background:#fff;box-shadow:inset .9px .9px 0 #8e8c7e,inset -0.5px -0.5px 0 #f8f8f0;"></div>
<div class="t" style="top:212.55px;font-size:5.3px;line-height:5.3px;color:#111;font-weight:bold;left:616.5px;width:400px;text-align:right;">X轴标识:</div>
<div style="left:1018.8px;top:211.6px;width:43.6px;height:7.2px;background:#fff;box-shadow:inset .9px .9px 0 #8e8c7e,inset -0.5px -0.5px 0 #f8f8f0;"></div>
<div class="t" style="top:212.55px;font-size:5.3px;line-height:5.3px;color:#111;font-weight:bold;left:687.5px;width:400px;text-align:right;">Y轴标识:</div>
<div style="left:1089.4px;top:211.6px;width:48.2px;height:7.2px;background:#fff;box-shadow:inset .9px .9px 0 #8e8c7e,inset -0.5px -0.5px 0 #f8f8f0;"></div>
<div style="left:1143px;top:213px;width:4.4px;height:4.4px;background:#fff;box-shadow:inset .7px .7px 0 #777;"></div>
<div class="t" style="top:212.55px;font-size:5.3px;line-height:5.3px;color:#111;font-weight:bold;left:1152px;">打印在第二页</div>
<div style="left:1203px;top:189.4px;width:48.6px;height:30px;box-shadow:inset 0 0 0 1px #c9c6b4, 1px 1px 0 #fff;"></div>
<div style="left:1205px;top:186.6px;width:41px;height:5.8px;background:#ece9d8;"></div>
<div style="left:1206px;top:187.2px;width:4.4px;height:4.4px;background:#fff;box-shadow:inset .7px .7px 0 #777;"></div>
<div class="t" style="top:186.95px;font-size:5.3px;line-height:5.3px;color:#111;font-weight:bold;left:1213.5px;">指定坐标刻度</div>
<div class="t" style="top:198.15px;font-size:5.3px;line-height:5.3px;color:#111;font-weight:bold;left:1206.5px;">X轴:</div>
<div style="left:1223.6px;top:197.4px;width:25.2px;height:6.8px;background:#fff;box-shadow:inset .9px .9px 0 #8e8c7e,inset -0.5px -0.5px 0 #f8f8f0;"></div>
<div class="t" style="top:208.95px;font-size:5.3px;line-height:5.3px;color:#111;font-weight:bold;left:1206.5px;">Y轴:</div>
<div style="left:1223.6px;top:208px;width:25.2px;height:7px;background:#fff;box-shadow:inset .9px .9px 0 #8e8c7e,inset -0.5px -0.5px 0 #f8f8f0;"></div>
<div class="t" style="top:230.55px;font-size:5.3px;line-height:5.3px;color:#111;font-weight:bold;left:992.5px;">备注:</div>
<div style="left:1009px;top:229.4px;width:245.6px;height:7.4px;background:#fff;box-shadow:inset .9px .9px 0 #8e8c7e,inset -0.5px -0.5px 0 #f8f8f0;"></div>
<div style="left:1265px;top:227.4px;width:38px;height:10.8px;background:#f2f0e4;box-shadow:inset .8px .8px 0 #fff,inset -1px -1px 0 #8a8878;"></div>
<div class="t" style="top:230px;font-size:5.6px;line-height:5.6px;font-weight:bold;left:1084px;width:400px;text-align:center;">确定</div>
<div class="t" style="top:244.53px;font-size:14.15px;line-height:14.15px;color:#626262;left:989.8px;">根据客户实际需求任意编辑标准文本报表格式</div>
<div style="left:990.4px;top:268px;width:321.4px;height:474.6px;background:#fff;box-shadow:inset 0 0 0 1px #5a9ae0;"></div>
<div class="t" style="top:299.95px;font-size:8.9px;line-height:8.9px;color:#222;font-family:'Liberation Serif','Noto Serif CJK SC',serif;left:952px;width:400px;text-align:center;">金属拉伸试验</div>
<div style="left:1008px;top:312.4px;width:287.4px;height:118px;background:#fff;box-shadow:inset 0 0 0 1px #333, .8px .8px 0 #555;"></div>
<div style="left:1008px;top:322.63px;width:287.4px;height:1px;background:#444;"></div>
<div style="left:1008px;top:333.35px;width:287.4px;height:1px;background:#444;"></div>
<div style="left:1008px;top:344.08px;width:287.4px;height:1px;background:#444;"></div>
<div style="left:1008px;top:354.81px;width:287.4px;height:1px;background:#444;"></div>
<div style="left:1008px;top:365.54px;width:287.4px;height:1px;background:#444;"></div>
<div style="left:1008px;top:376.26px;width:287.4px;height:1px;background:#444;"></div>
<div style="left:1008px;top:386.99px;width:287.4px;height:1px;background:#444;"></div>
<div style="left:1008px;top:397.72px;width:287.4px;height:1px;background:#444;"></div>
<div style="left:1008px;top:408.45px;width:287.4px;height:1px;background:#444;"></div>
<div style="left:1008px;top:419.17px;width:287.4px;height:1px;background:#444;"></div>
<div style="left:1087.7px;top:312.4px;width:1px;height:118px;background:#444;"></div>
<div style="left:1151.1px;top:312.4px;width:1px;height:118px;background:#444;"></div>
<div style="left:1229.5px;top:312.4px;width:1px;height:118px;background:#444;"></div>
<div class="t" style="top:314.56px;font-size:6.8px;line-height:6.8px;color:#333;font-family:'Liberation Serif','Noto Serif CJK SC',serif;left:1012.5px;">试件批号</div>
<div class="t" style="top:314.56px;font-size:6.8px;line-height:6.8px;color:#333;font-family:'Liberation Serif','Noto Serif CJK SC',serif;left:1092.7px;">001</div>
<div class="t" style="top:314.56px;font-size:6.8px;line-height:6.8px;color:#333;font-family:'Liberation Serif','Noto Serif CJK SC',serif;left:1156.1px;">钢号</div>
<div class="t" style="top:314.56px;font-size:6.8px;line-height:6.8px;color:#333;font-family:'Liberation Serif','Noto Serif CJK SC',serif;left:1234.5px;">C1</div>
<div class="t" style="top:325.29px;font-size:6.8px;line-height:6.8px;color:#333;font-family:'Liberation Serif','Noto Serif CJK SC',serif;left:1012.5px;">试验日期</div>
<div class="t" style="top:325.29px;font-size:6.8px;line-height:6.8px;color:#333;font-family:'Liberation Serif','Noto Serif CJK SC',serif;left:1092.7px;">2011-6-15</div>
<div class="t" style="top:325.29px;font-size:6.8px;line-height:6.8px;color:#333;font-family:'Liberation Serif','Noto Serif CJK SC',serif;left:1156.1px;">试验人</div>
<div class="t" style="top:325.29px;font-size:6.8px;line-height:6.8px;color:#333;font-family:'Liberation Serif','Noto Serif CJK SC',serif;left:1234.5px;">郝兆春</div>
<div class="t" style="top:336.02px;font-size:6.8px;line-height:6.8px;color:#333;font-family:'Liberation Serif','Noto Serif CJK SC',serif;left:1012.5px;">试件形状</div>
<div class="t" style="top:336.02px;font-size:6.8px;line-height:6.8px;color:#333;font-family:'Liberation Serif','Noto Serif CJK SC',serif;left:1092.7px;">圆材</div>
<div class="t" style="top:336.02px;font-size:6.8px;line-height:6.8px;color:#333;font-family:'Liberation Serif','Noto Serif CJK SC',serif;left:1156.1px;">尺寸(mm)</div>
<div class="t" style="top:336.02px;font-size:6.8px;line-height:6.8px;color:#333;font-family:'Liberation Serif','Noto Serif CJK SC',serif;left:1234.5px;">20</div>
<div class="t" style="top:346.75px;font-size:6.8px;line-height:6.8px;color:#333;font-family:'Liberation Serif','Noto Serif CJK SC',serif;left:1012.5px;">So(mm²)</div>
<div class="t" style="top:346.75px;font-size:6.8px;line-height:6.8px;color:#333;font-family:'Liberation Serif','Noto Serif CJK SC',serif;left:1092.7px;">314.2</div>
<div class="t" style="top:346.75px;font-size:6.8px;line-height:6.8px;color:#333;font-family:'Liberation Serif','Noto Serif CJK SC',serif;left:1156.1px;">Lo(mm)</div>
<div class="t" style="top:346.75px;font-size:6.8px;line-height:6.8px;color:#333;font-family:'Liberation Serif','Noto Serif CJK SC',serif;left:1234.5px;">100</div>
<div class="t" style="top:357.47px;font-size:6.8px;line-height:6.8px;color:#333;font-family:'Liberation Serif','Noto Serif CJK SC',serif;left:1012.5px;">Lu(mm)</div>
<div class="t" style="top:357.47px;font-size:6.8px;line-height:6.8px;color:#333;font-family:'Liberation Serif','Noto Serif CJK SC',serif;left:1092.7px;">120</div>
<div class="t" style="top:357.47px;font-size:6.8px;line-height:6.8px;color:#333;font-family:'Liberation Serif','Noto Serif CJK SC',serif;left:1156.1px;">A(%)</div>
<div class="t" style="top:357.47px;font-size:6.8px;line-height:6.8px;color:#333;font-family:'Liberation Serif','Noto Serif CJK SC',serif;left:1234.5px;">20.0</div>
<div class="t" style="top:368.2px;font-size:6.8px;line-height:6.8px;color:#333;font-family:'Liberation Serif','Noto Serif CJK SC',serif;left:1012.5px;">Z(%)</div>
<div class="t" style="top:368.2px;font-size:6.8px;line-height:6.8px;color:#333;font-family:'Liberation Serif','Noto Serif CJK SC',serif;left:1092.7px;">51.0</div>
<div class="t" style="top:368.2px;font-size:6.8px;line-height:6.8px;color:#333;font-family:'Liberation Serif','Noto Serif CJK SC',serif;left:1156.1px;">Fm(kN)</div>
<div class="t" style="top:368.2px;font-size:6.8px;line-height:6.8px;color:#333;font-family:'Liberation Serif','Noto Serif CJK SC',serif;left:1234.5px;">55.19</div>
<div class="t" style="top:378.93px;font-size:6.8px;line-height:6.8px;color:#333;font-family:'Liberation Serif','Noto Serif CJK SC',serif;left:1012.5px;">Rm(MPa)</div>
<div class="t" style="top:378.93px;font-size:6.8px;line-height:6.8px;color:#333;font-family:'Liberation Serif','Noto Serif CJK SC',serif;left:1092.7px;">175</div>
<div class="t" style="top:378.93px;font-size:6.8px;line-height:6.8px;color:#333;font-family:'Liberation Serif','Noto Serif CJK SC',serif;left:1156.1px;">FeH(kN)</div>
<div class="t" style="top:378.93px;font-size:6.8px;line-height:6.8px;color:#333;font-family:'Liberation Serif','Noto Serif CJK SC',serif;left:1234.5px;">39.94</div>
<div class="t" style="top:389.65px;font-size:6.8px;line-height:6.8px;color:#333;font-family:'Liberation Serif','Noto Serif CJK SC',serif;left:1012.5px;">ReH(MPa)</div>
<div class="t" style="top:389.65px;font-size:6.8px;line-height:6.8px;color:#333;font-family:'Liberation Serif','Noto Serif CJK SC',serif;left:1092.7px;">127</div>
<div class="t" style="top:389.65px;font-size:6.8px;line-height:6.8px;color:#333;font-family:'Liberation Serif','Noto Serif CJK SC',serif;left:1156.1px;">FeL(kN)</div>
<div class="t" style="top:389.65px;font-size:6.8px;line-height:6.8px;color:#333;font-family:'Liberation Serif','Noto Serif CJK SC',serif;left:1234.5px;">39.79</div>
<div class="t" style="top:400.38px;font-size:6.8px;line-height:6.8px;color:#333;font-family:'Liberation Serif','Noto Serif CJK SC',serif;left:1012.5px;">ReL(MPa)</div>
<div class="t" style="top:400.38px;font-size:6.8px;line-height:6.8px;color:#333;font-family:'Liberation Serif','Noto Serif CJK SC',serif;left:1092.7px;">126</div>
<div class="t" style="top:400.38px;font-size:6.8px;line-height:6.8px;color:#333;font-family:'Liberation Serif','Noto Serif CJK SC',serif;left:1156.1px;">Fp(kN)</div>
<div class="t" style="top:400.38px;font-size:6.8px;line-height:6.8px;color:#333;font-family:'Liberation Serif','Noto Serif CJK SC',serif;left:1234.5px;">39.79</div>
<div class="t" style="top:411.11px;font-size:6.8px;line-height:6.8px;color:#333;font-family:'Liberation Serif','Noto Serif CJK SC',serif;left:1012.5px;">Rp(MPa)</div>
<div class="t" style="top:411.11px;font-size:6.8px;line-height:6.8px;color:#333;font-family:'Liberation Serif','Noto Serif CJK SC',serif;left:1092.7px;">126</div>
<div class="t" style="top:411.11px;font-size:6.8px;line-height:6.8px;color:#333;font-family:'Liberation Serif','Noto Serif CJK SC',serif;left:1156.1px;">Ft(kN)</div>
<div class="t" style="top:411.11px;font-size:6.8px;line-height:6.8px;color:#333;font-family:'Liberation Serif','Noto Serif CJK SC',serif;left:1234.5px;">39.79</div>
<div class="t" style="top:421.84px;font-size:6.8px;line-height:6.8px;color:#333;font-family:'Liberation Serif','Noto Serif CJK SC',serif;left:1012.5px;">Rt(MPa)</div>
<div class="t" style="top:421.84px;font-size:6.8px;line-height:6.8px;color:#333;font-family:'Liberation Serif','Noto Serif CJK SC',serif;left:1092.7px;">126</div>
<div class="t" style="top:421.84px;font-size:6.8px;line-height:6.8px;color:#333;font-family:'Liberation Serif','Noto Serif CJK SC',serif;left:1156.1px;">E(GPa)</div>
<div class="t" style="top:421.84px;font-size:6.8px;line-height:6.8px;color:#333;font-family:'Liberation Serif','Noto Serif CJK SC',serif;left:1234.5px;">50.74</div>
<div class="t" style="top:438.2px;font-size:5.6px;line-height:5.6px;color:#333;font-family:'Liberation Serif','Noto Serif CJK SC',serif;left:1011.5px;">力(kN)</div>
<div class="t" style="top:438.1px;font-size:5.8px;line-height:5.8px;color:#333;font-weight:bold;font-family:'Liberation Serif','Noto Serif CJK SC',serif;left:960px;width:400px;text-align:center;">力-时间曲线</div>
<svg style="left:1036.8px;top:451px;" width="244" height="250" viewBox="0 0 244 250"><rect x=".4" y=".4" width="243.2" height="249.2" fill="none" stroke="#555" stroke-width=".8"/><path d="M24.4 0V250" stroke="#3c3c3c" stroke-width=".7" stroke-dasharray="1.3 1"/><path d="M0 25H244" stroke="#3c3c3c" stroke-width=".7" stroke-dasharray="1.3 1"/><path d="M48.8 0V250" stroke="#3c3c3c" stroke-width=".7" stroke-dasharray="1.3 1"/><path d="M0 50H244" stroke="#3c3c3c" stroke-width=".7" stroke-dasharray="1.3 1"/><path d="M73.2 0V250" stroke="#3c3c3c" stroke-width=".7" stroke-dasharray="1.3 1"/><path d="M0 75H244" stroke="#3c3c3c" stroke-width=".7" stroke-dasharray="1.3 1"/><path d="M97.6 0V250" stroke="#3c3c3c" stroke-width=".7" stroke-dasharray="1.3 1"/><path d="M0 100H244" stroke="#3c3c3c" stroke-width=".7" stroke-dasharray="1.3 1"/><path d="M122 0V250" stroke="#3c3c3c" stroke-width=".7" stroke-dasharray="1.3 1"/><path d="M0 125H244" stroke="#3c3c3c" stroke-width=".7" stroke-dasharray="1.3 1"/><path d="M146.4 0V250" stroke="#3c3c3c" stroke-width=".7" stroke-dasharray="1.3 1"/><path d="M0 150H244" stroke="#3c3c3c" stroke-width=".7" stroke-dasharray="1.3 1"/><path d="M170.8 0V250" stroke="#3c3c3c" stroke-width=".7" stroke-dasharray="1.3 1"/><path d="M0 175H244" stroke="#3c3c3c" stroke-width=".7" stroke-dasharray="1.3 1"/><path d="M195.2 0V250" stroke="#3c3c3c" stroke-width=".7" stroke-dasharray="1.3 1"/><path d="M0 200H244" stroke="#3c3c3c" stroke-width=".7" stroke-dasharray="1.3 1"/><path d="M219.6 0V250" stroke="#3c3c3c" stroke-width=".7" stroke-dasharray="1.3 1"/><path d="M0 225H244" stroke="#3c3c3c" stroke-width=".7" stroke-dasharray="1.3 1"/><path d="M0 250L12.2 247.5L24.4 243.75L36.6 238.33L48.8 231.67L56.93 225.83L65.07 215.83L73.2 202.5L85.4 190L97.6 175L109.8 154.17L122 131.67L134.2 108.33L146.4 85.83L148.84 84.17L173.24 84.17L176.49 80L180.56 69.17L187.07 54.17L195.2 37.5L203.33 26.67L211.47 20.83L216.35 19.58L221.23 20.83L227.73 29.17L232.61 41.67L237.49 58.33L240.75 75" stroke="#222" stroke-width=".8" fill="none"/></svg>
<div class="t" style="top:448.25px;font-size:5.9px;line-height:5.9px;color:#222;font-family:'Liberation Serif','Noto Serif CJK SC',serif;left:633.4px;width:400px;text-align:right;">60.00</div>
<div style="left:1034.4px;top:450.7px;width:2.4px;height:0.6px;background:#444;"></div>
<div class="t" style="top:473.25px;font-size:5.9px;line-height:5.9px;color:#222;font-family:'Liberation Serif','Noto Serif CJK SC',serif;left:633.4px;width:400px;text-align:right;">54.00</div>
<div style="left:1034.4px;top:475.7px;width:2.4px;height:0.6px;background:#444;"></div>
<div class="t" style="top:498.25px;font-size:5.9px;line-height:5.9px;color:#222;font-family:'Liberation Serif','Noto Serif CJK SC',serif;left:633.4px;width:400px;text-align:right;">48.00</div>
<div style="left:1034.4px;top:500.7px;width:2.4px;height:0.6px;background:#444;"></div>
<div class="t" style="top:523.25px;font-size:5.9px;line-height:5.9px;color:#222;font-family:'Liberation Serif','Noto Serif CJK SC',serif;left:633.4px;width:400px;text-align:right;">42.00</div>
<div style="left:1034.4px;top:525.7px;width:2.4px;height:0.6px;background:#444;"></div>
<div class="t" style="top:548.25px;font-size:5.9px;line-height:5.9px;color:#222;font-family:'Liberation Serif','Noto Serif CJK SC',serif;left:633.4px;width:400px;text-align:right;">36.00</div>
<div style="left:1034.4px;top:550.7px;width:2.4px;height:0.6px;background:#444;"></div>
<div class="t" style="top:573.25px;font-size:5.9px;line-height:5.9px;color:#222;font-family:'Liberation Serif','Noto Serif CJK SC',serif;left:633.4px;width:400px;text-align:right;">30.00</div>
<div style="left:1034.4px;top:575.7px;width:2.4px;height:0.6px;background:#444;"></div>
<div class="t" style="top:598.25px;font-size:5.9px;line-height:5.9px;color:#222;font-family:'Liberation Serif','Noto Serif CJK SC',serif;left:633.4px;width:400px;text-align:right;">24.00</div>
<div style="left:1034.4px;top:600.7px;width:2.4px;height:0.6px;background:#444;"></div>
<div class="t" style="top:623.25px;font-size:5.9px;line-height:5.9px;color:#222;font-family:'Liberation Serif','Noto Serif CJK SC',serif;left:633.4px;width:400px;text-align:right;">18.00</div>
<div style="left:1034.4px;top:625.7px;width:2.4px;height:0.6px;background:#444;"></div>
<div class="t" style="top:648.25px;font-size:5.9px;line-height:5.9px;color:#222;font-family:'Liberation Serif','Noto Serif CJK SC',serif;left:633.4px;width:400px;text-align:right;">12.00</div>
<div style="left:1034.4px;top:650.7px;width:2.4px;height:0.6px;background:#444;"></div>
<div class="t" style="top:673.25px;font-size:5.9px;line-height:5.9px;color:#222;font-family:'Liberation Serif','Noto Serif CJK SC',serif;left:633.4px;width:400px;text-align:right;">6.000</div>
<div style="left:1034.4px;top:675.7px;width:2.4px;height:0.6px;background:#444;"></div>
<div class="t" style="top:698.25px;font-size:5.9px;line-height:5.9px;color:#222;font-family:'Liberation Serif','Noto Serif CJK SC',serif;left:633.4px;width:400px;text-align:right;">0</div>
<div style="left:1034.4px;top:700.7px;width:2.4px;height:0.6px;background:#444;"></div>
<div class="t" style="top:705.65px;font-size:5.9px;line-height:5.9px;color:#222;font-family:'Liberation Serif','Noto Serif CJK SC',serif;left:836.8px;width:400px;text-align:center;">0</div>
<div style="left:1036.5px;top:701px;width:0.6px;height:2.2px;background:#444;"></div>
<div class="t" style="top:705.65px;font-size:5.9px;line-height:5.9px;color:#222;font-family:'Liberation Serif','Noto Serif CJK SC',serif;left:861.2px;width:400px;text-align:center;">3.00</div>
<div style="left:1060.9px;top:701px;width:0.6px;height:2.2px;background:#444;"></div>
<div class="t" style="top:705.65px;font-size:5.9px;line-height:5.9px;color:#222;font-family:'Liberation Serif','Noto Serif CJK SC',serif;left:885.6px;width:400px;text-align:center;">6.00</div>
<div style="left:1085.3px;top:701px;width:0.6px;height:2.2px;background:#444;"></div>
<div class="t" style="top:705.65px;font-size:5.9px;line-height:5.9px;color:#222;font-family:'Liberation Serif','Noto Serif CJK SC',serif;left:910px;width:400px;text-align:center;">9.00</div>
<div style="left:1109.7px;top:701px;width:0.6px;height:2.2px;background:#444;"></div>
<div class="t" style="top:705.65px;font-size:5.9px;line-height:5.9px;color:#222;font-family:'Liberation Serif','Noto Serif CJK SC',serif;left:934.4px;width:400px;text-align:center;">12.0</div>
<div style="left:1134.1px;top:701px;width:0.6px;height:2.2px;background:#444;"></div>
<div class="t" style="top:705.65px;font-size:5.9px;line-height:5.9px;color:#222;font-family:'Liberation Serif','Noto Serif CJK SC',serif;left:958.8px;width:400px;text-align:center;">15.0</div>
<div style="left:1158.5px;top:701px;width:0.6px;height:2.2px;background:#444;"></div>
<div class="t" style="top:705.65px;font-size:5.9px;line-height:5.9px;color:#222;font-family:'Liberation Serif','Noto Serif CJK SC',serif;left:983.2px;width:400px;text-align:center;">18.0</div>
<div style="left:1182.9px;top:701px;width:0.6px;height:2.2px;background:#444;"></div>
<div class="t" style="top:705.65px;font-size:5.9px;line-height:5.9px;color:#222;font-family:'Liberation Serif','Noto Serif CJK SC',serif;left:1007.6px;width:400px;text-align:center;">21.0</div>
<div style="left:1207.3px;top:701px;width:0.6px;height:2.2px;background:#444;"></div>
<div class="t" style="top:705.65px;font-size:5.9px;line-height:5.9px;color:#222;font-family:'Liberation Serif','Noto Serif CJK SC',serif;left:1032px;width:400px;text-align:center;">24.0</div>
<div style="left:1231.7px;top:701px;width:0.6px;height:2.2px;background:#444;"></div>
<div class="t" style="top:705.65px;font-size:5.9px;line-height:5.9px;color:#222;font-family:'Liberation Serif','Noto Serif CJK SC',serif;left:1056.4px;width:400px;text-align:center;">27.0</div>
<div style="left:1256.1px;top:701px;width:0.6px;height:2.2px;background:#444;"></div>
<div class="t" style="top:705.65px;font-size:5.9px;line-height:5.9px;color:#222;font-family:'Liberation Serif','Noto Serif CJK SC',serif;left:1080.8px;width:400px;text-align:center;">30.0</div>
<div style="left:1280.5px;top:701px;width:0.6px;height:2.2px;background:#444;"></div>
<div class="t" style="top:714.1px;font-size:5.8px;line-height:5.8px;color:#333;font-family:'Liberation Serif','Noto Serif CJK SC',serif;left:881px;width:400px;text-align:right;">时间(秒)</div>
<svg style="left:1307.5px;top:644.5px;" width="4" height="8" viewBox="0 0 4 8"><path d="M3.6 .4C.4 2 .4 6 3.6 7.6" stroke="#777" stroke-width=".7" fill="none"/></svg>
<div class="t" style="top:746.55px;font-size:14.1px;line-height:14.1px;color:#626262;left:989.6px;">标准文本报表格式示意</div>
<div style="left:1339.8px;top:6px;width:417.6px;height:254.8px;background:#ece9d8;box-shadow:inset 1.2px 0 0 #2c5cc0, inset -2px -1.4px 0 #11269a;"></div>
<div style="left:1339.8px;top:6px;width:417.6px;height:13.4px;background:linear-gradient(#0b5bd6,#0a52c6 45%,#0846b2);"></div>
<svg style="left:1342.4px;top:9px;" width="7" height="8" viewBox="0 0 7 8"><rect x=".4" y="1" width="4.6" height="6" fill="#f0e8d0" stroke="#806020" stroke-width=".6"/><rect x="2.4" y="3.6" width="4" height="4" fill="#c03020"/></svg>
<div class="t" style="top:9.5px;font-size:6.6px;line-height:6.6px;color:#fff;font-weight:bold;letter-spacing:0.5px;left:1351.5px;">统计表利用Excel打印</div>
<div style="left:1745.4px;top:8.2px;width:9.2px;height:9.2px;background:#e0502c;border-radius:1.4px;box-shadow:inset 0 0 0 .7px #fff;"></div>
<div class="t" style="top:9.8px;font-size:6px;line-height:6px;color:#fff;font-weight:bold;left:1550px;width:400px;text-align:center;">✕</div>
<div class="t" style="top:22.85px;font-size:5.9px;line-height:5.9px;color:#111;font-weight:bold;left:1344px;">选择要统计和打印的数据 ( 田'日 )</div>
<div style="left:1544px;top:19.8px;width:30.6px;height:11.6px;background:#f2f0e4;box-shadow:inset .8px .8px 0 #fff,inset -1px -1px 0 #8a8878;"></div>
<div class="t" style="top:22.8px;font-size:5.6px;line-height:5.6px;font-weight:bold;left:1359.3px;width:400px;text-align:center;">全选</div>
<div style="left:1579px;top:19.8px;width:38.6px;height:11.6px;background:#f2f0e4;box-shadow:inset .8px .8px 0 #fff,inset -1px -1px 0 #8a8878;"></div>
<div class="t" style="top:22.8px;font-size:5.6px;line-height:5.6px;font-weight:bold;left:1398.3px;width:400px;text-align:center;">全清</div>
<div class="t" style="top:22.85px;font-size:5.9px;line-height:5.9px;color:#111;font-weight:bold;left:1627.4px;">报表模板 :</div>
<div style="left:1717.8px;top:20px;width:35.4px;height:12px;background:#f2f0e4;box-shadow:inset .8px .8px 0 #fff,inset -1px -1px 0 #8a8878;"></div>
<div class="t" style="top:23.4px;font-size:5.2px;line-height:5.2px;color:#c8c6b6;font-weight:bold;left:1535.5px;width:400px;text-align:center;">编辑模板</div>
<div style="left:1341.8px;top:33.2px;width:284px;height:126.6px;background:#fff;box-shadow:inset .9px .9px 0 #8e8c7e,inset -0.5px -0.5px 0 #f8f8f0;"></div>
<div style="left:1342.8px;top:34.2px;width:48.8px;height:7.4px;background:#efede0;box-shadow:inset -1px -1px 0 #8e8c7c, inset .6px .6px 0 #fff;"></div>
<div class="t" style="top:35px;font-size:6px;line-height:6px;color:#111;font-weight:bold;left:1345.4px;">试件批号</div>
<div style="left:1392.2px;top:34.2px;width:49.4px;height:7.4px;background:#efede0;box-shadow:inset -1px -1px 0 #8e8c7c, inset .6px .6px 0 #fff;"></div>
<div class="t" style="top:35px;font-size:6px;line-height:6px;color:#111;font-weight:bold;left:1394.8px;">钢号</div>
<div style="left:1442.2px;top:34.2px;width:49.4px;height:7.4px;background:#efede0;box-shadow:inset -1px -1px 0 #8e8c7c, inset .6px .6px 0 #fff;"></div>
<div class="t" style="top:35px;font-size:6px;line-height:6px;color:#111;font-weight:bold;left:1444.8px;">试验日期</div>
<div style="left:1492.2px;top:34.2px;width:50.8px;height:7.4px;background:#efede0;box-shadow:inset -1px -1px 0 #8e8c7c, inset .6px .6px 0 #fff;"></div>
<div class="t" style="top:35px;font-size:6px;line-height:6px;color:#111;font-weight:bold;left:1494.8px;">试验人</div>
<div style="left:1543.6px;top:34.2px;width:48.4px;height:7.4px;background:#efede0;box-shadow:inset -1px -1px 0 #8e8c7c, inset .6px .6px 0 #fff;"></div>
<div class="t" style="top:35px;font-size:6px;line-height:6px;color:#111;font-weight:bold;left:1546.2px;">试件形状</div>
<div style="left:1592.6px;top:34.2px;width:32.4px;height:7.4px;background:#efede0;box-shadow:inset -1px -1px 0 #8e8c7c, inset .6px .6px 0 #fff;"></div>
<div class="t" style="top:35px;font-size:6px;line-height:6px;color:#111;font-weight:bold;left:1595.2px;">尺寸(mm)</div>
<div style="left:1342.8px;top:42.6px;width:282.2px;height:9.6px;background:#eceadb;"></div>
<svg style="left:1343.6px;top:44.3px;" width="6" height="7" viewBox="0 0 6 7"><rect x=".5" y=".5" width="5.4" height="6.2" fill="#fff" stroke="#111" stroke-width="1.1"/><path d="M1.2 4.8L2.8 2.4L4.8 4.8" stroke="#111" stroke-width="1" fill="none"/><rect x="1" y="4.8" width="4.4" height="1.4" fill="#222"/></svg>
<div class="t" style="top:44.7px;font-size:6px;line-height:6px;color:#222;font-weight:bold;left:1350.6px;">001</div>
<div class="t" style="top:44.7px;font-size:6px;line-height:6px;color:#222;font-weight:bold;left:1395.5px;">C1001</div>
<div class="t" style="top:44.7px;font-size:6px;line-height:6px;color:#222;font-weight:bold;left:1445.5px;">2011-6-15</div>
<div class="t" style="top:44.7px;font-size:6px;line-height:6px;color:#111;font-weight:bold;left:1495.5px;">郝兆春</div>
<div class="t" style="top:44.7px;font-size:6px;line-height:6px;color:#111;font-weight:bold;left:1546.5px;">圆材</div>
<div class="t" style="top:44.7px;font-size:6px;line-height:6px;color:#222;font-weight:bold;left:1596px;">10</div>
<svg style="left:1343.6px;top:53.17px;" width="6" height="7" viewBox="0 0 6 7"><rect x=".5" y=".5" width="5.4" height="6.2" fill="#fff" stroke="#111" stroke-width="1.1"/><path d="M1.2 4.8L2.8 2.4L4.8 4.8" stroke="#111" stroke-width="1" fill="none"/><rect x="1" y="4.8" width="4.4" height="1.4" fill="#222"/></svg>
<div class="t" style="top:53.57px;font-size:6px;line-height:6px;color:#222;font-weight:bold;left:1350.6px;">001</div>
<div class="t" style="top:53.57px;font-size:6px;line-height:6px;color:#222;font-weight:bold;left:1395.5px;">C1002</div>
<div class="t" style="top:53.57px;font-size:6px;line-height:6px;color:#222;font-weight:bold;left:1445.5px;">2011-6-15</div>
<div class="t" style="top:53.57px;font-size:6px;line-height:6px;color:#111;font-weight:bold;left:1495.5px;">郝兆春</div>
<div class="t" style="top:53.57px;font-size:6px;line-height:6px;color:#111;font-weight:bold;left:1546.5px;">圆材</div>
<div class="t" style="top:53.57px;font-size:6px;line-height:6px;color:#222;font-weight:bold;left:1596px;">20</div>
<svg style="left:1343.6px;top:62.04px;" width="6" height="7" viewBox="0 0 6 7"><rect x=".5" y=".5" width="5.4" height="6.2" fill="#fff" stroke="#111" stroke-width="1.1"/><path d="M1.2 4.8L2.8 2.4L4.8 4.8" stroke="#111" stroke-width="1" fill="none"/><rect x="1" y="4.8" width="4.4" height="1.4" fill="#222"/></svg>
<div class="t" style="top:62.44px;font-size:6px;line-height:6px;color:#222;font-weight:bold;left:1350.6px;">001</div>
<div class="t" style="top:62.44px;font-size:6px;line-height:6px;color:#222;font-weight:bold;left:1395.5px;">C1003</div>
<div class="t" style="top:62.44px;font-size:6px;line-height:6px;color:#222;font-weight:bold;left:1445.5px;">2011-6-15</div>
<div class="t" style="top:62.44px;font-size:6px;line-height:6px;color:#111;font-weight:bold;left:1495.5px;">郝兆春</div>
<div class="t" style="top:62.44px;font-size:6px;line-height:6px;color:#111;font-weight:bold;left:1546.5px;">圆材</div>
<div class="t" style="top:62.44px;font-size:6px;line-height:6px;color:#222;font-weight:bold;left:1596px;">20</div>
<svg style="left:1343.6px;top:70.91px;" width="6" height="7" viewBox="0 0 6 7"><rect x=".5" y=".5" width="5.4" height="6.2" fill="#fff" stroke="#111" stroke-width="1.1"/><path d="M1.2 4.8L2.8 2.4L4.8 4.8" stroke="#111" stroke-width="1" fill="none"/><rect x="1" y="4.8" width="4.4" height="1.4" fill="#222"/></svg>
<div class="t" style="top:71.31px;font-size:6px;line-height:6px;color:#222;font-weight:bold;left:1350.6px;">001</div>
<div class="t" style="top:71.31px;font-size:6px;line-height:6px;color:#222;font-weight:bold;left:1395.5px;">C1004</div>
<div class="t" style="top:71.31px;font-size:6px;line-height:6px;color:#222;font-weight:bold;left:1445.5px;">2011-6-15</div>
<div class="t" style="top:71.31px;font-size:6px;line-height:6px;color:#111;font-weight:bold;left:1495.5px;">郝兆春</div>
<div class="t" style="top:71.31px;font-size:6px;line-height:6px;color:#111;font-weight:bold;left:1546.5px;">圆材</div>
<div class="t" style="top:71.31px;font-size:6px;line-height:6px;color:#222;font-weight:bold;left:1596px;">20</div>
<svg style="left:1343.6px;top:79.78px;" width="6" height="7" viewBox="0 0 6 7"><rect x=".5" y=".5" width="5.4" height="6.2" fill="#fff" stroke="#111" stroke-width="1.1"/><path d="M1.2 4.8L2.8 2.4L4.8 4.8" stroke="#111" stroke-width="1" fill="none"/><rect x="1" y="4.8" width="4.4" height="1.4" fill="#222"/></svg>
<div class="t" style="top:80.18px;font-size:6px;line-height:6px;color:#222;font-weight:bold;left:1350.6px;">001</div>
<div class="t" style="top:80.18px;font-size:6px;line-height:6px;color:#222;font-weight:bold;left:1395.5px;">C1005</div>
<div class="t" style="top:80.18px;font-size:6px;line-height:6px;color:#222;font-weight:bold;left:1445.5px;">2011-6-15</div>
<div class="t" style="top:80.18px;font-size:6px;line-height:6px;color:#111;font-weight:bold;left:1495.5px;">郝兆春</div>
<div class="t" style="top:80.18px;font-size:6px;line-height:6px;color:#111;font-weight:bold;left:1546.5px;">圆材</div>
<div class="t" style="top:80.18px;font-size:6px;line-height:6px;color:#222;font-weight:bold;left:1596px;">20</div>
<svg style="left:1343.6px;top:88.65px;" width="6" height="7" viewBox="0 0 6 7"><rect x=".5" y=".5" width="5.4" height="6.2" fill="#fff" stroke="#111" stroke-width="1.1"/><path d="M1.2 4.8L2.8 2.4L4.8 4.8" stroke="#111" stroke-width="1" fill="none"/><rect x="1" y="4.8" width="4.4" height="1.4" fill="#222"/></svg>
<div class="t" style="top:89.05px;font-size:6px;line-height:6px;color:#222;font-weight:bold;left:1350.6px;">001</div>
<div class="t" style="top:89.05px;font-size:6px;line-height:6px;color:#222;font-weight:bold;left:1395.5px;">C1006</div>
<div class="t" style="top:89.05px;font-size:6px;line-height:6px;color:#222;font-weight:bold;left:1445.5px;">2011-6-15</div>
<div class="t" style="top:89.05px;font-size:6px;line-height:6px;color:#111;font-weight:bold;left:1495.5px;">郝兆春</div>
<div class="t" style="top:89.05px;font-size:6px;line-height:6px;color:#111;font-weight:bold;left:1546.5px;">圆材</div>
<div class="t" style="top:89.05px;font-size:6px;line-height:6px;color:#222;font-weight:bold;left:1596px;">20</div>
<svg style="left:1343.6px;top:97.52px;" width="6" height="7" viewBox="0 0 6 7"><rect x=".5" y=".5" width="5.4" height="6.2" fill="#fff" stroke="#111" stroke-width="1.1"/><path d="M1.2 4.8L2.8 2.4L4.8 4.8" stroke="#111" stroke-width="1" fill="none"/><rect x="1" y="4.8" width="4.4" height="1.4" fill="#222"/></svg>
<div class="t" style="top:97.92px;font-size:6px;line-height:6px;color:#222;font-weight:bold;left:1350.6px;">001</div>
<div class="t" style="top:97.92px;font-size:6px;line-height:6px;color:#222;font-weight:bold;left:1395.5px;">C1007</div>
<div class="t" style="top:97.92px;font-size:6px;line-height:6px;color:#222;font-weight:bold;left:1445.5px;">2011-6-15</div>
<div class="t" style="top:97.92px;font-size:6px;line-height:6px;color:#111;font-weight:bold;left:1495.5px;">郝兆春</div>
<div class="t" style="top:97.92px;font-size:6px;line-height:6px;color:#111;font-weight:bold;left:1546.5px;">圆材</div>
<div class="t" style="top:97.92px;font-size:6px;line-height:6px;color:#222;font-weight:bold;left:1596px;">20</div>
<svg style="left:1343.6px;top:106.39px;" width="6" height="7" viewBox="0 0 6 7"><rect x=".5" y=".5" width="5.4" height="6.2" fill="#fff" stroke="#111" stroke-width="1.1"/><path d="M1.2 4.8L2.8 2.4L4.8 4.8" stroke="#111" stroke-width="1" fill="none"/><rect x="1" y="4.8" width="4.4" height="1.4" fill="#222"/></svg>
<div class="t" style="top:106.79px;font-size:6px;line-height:6px;color:#222;font-weight:bold;left:1350.6px;">001</div>
<div class="t" style="top:106.79px;font-size:6px;line-height:6px;color:#222;font-weight:bold;left:1395.5px;">C1008</div>
<div class="t" style="top:106.79px;font-size:6px;line-height:6px;color:#222;font-weight:bold;left:1445.5px;">2011-6-15</div>
<div class="t" style="top:106.79px;font-size:6px;line-height:6px;color:#111;font-weight:bold;left:1495.5px;">郝兆春</div>
<div class="t" style="top:106.79px;font-size:6px;line-height:6px;color:#111;font-weight:bold;left:1546.5px;">圆材</div>
<div class="t" style="top:106.79px;font-size:6px;line-height:6px;color:#222;font-weight:bold;left:1596px;">20</div>
<svg style="left:1343.6px;top:115.26px;" width="6" height="7" viewBox="0 0 6 7"><rect x=".5" y=".5" width="5.4" height="6.2" fill="#fff" stroke="#111" stroke-width="1.1"/><path d="M1.2 4.8L2.8 2.4L4.8 4.8" stroke="#111" stroke-width="1" fill="none"/><rect x="1" y="4.8" width="4.4" height="1.4" fill="#222"/></svg>
<div class="t" style="top:115.66px;font-size:6px;line-height:6px;color:#222;font-weight:bold;left:1350.6px;">001</div>
<div class="t" style="top:115.66px;font-size:6px;line-height:6px;color:#222;font-weight:bold;left:1395.5px;">C1009</div>
<div class="t" style="top:115.66px;font-size:6px;line-height:6px;color:#222;font-weight:bold;left:1445.5px;">2011-6-15</div>
<div class="t" style="top:115.66px;font-size:6px;line-height:6px;color:#111;font-weight:bold;left:1495.5px;">郝兆春</div>
<div class="t" style="top:115.66px;font-size:6px;line-height:6px;color:#111;font-weight:bold;left:1546.5px;">圆材</div>
<div class="t" style="top:115.66px;font-size:6px;line-height:6px;color:#222;font-weight:bold;left:1596px;">20</div>
<div style="left:1342.8px;top:151.8px;width:282.2px;height:6.8px;background:#f6f5f0;"></div>
<div style="left:1343.2px;top:152.2px;width:57.4px;height:6px;background:#c2d4f6;border-radius:1px;"></div>
<div class="t" style="top:152.9px;font-size:4.6px;line-height:4.6px;color:#4868b8;left:1145.6px;width:400px;text-align:center;">◂</div>
<div style="left:1618.4px;top:152.2px;width:6px;height:6px;background:#c2d4f6;border-radius:1px;"></div>
<div class="t" style="top:152.9px;font-size:4.6px;line-height:4.6px;color:#4868b8;left:1421.4px;width:400px;text-align:center;">▸</div>
<div class="t" style="top:161.65px;font-size:5.9px;line-height:5.9px;color:#e02818;font-weight:bold;left:1343.5px;">统计记录数:  9</div>
<div style="left:1342.8px;top:170.8px;width:282.6px;height:87.4px;background:#fff;box-shadow:inset 0 0 0 .8px #555;"></div>
<div style="left:1586.2px;top:171.4px;width:29.8px;height:86.6px;background:#7c7e80;"></div>
<div style="left:1616px;top:171.4px;width:9px;height:86.6px;background:#f0efe6;box-shadow:inset .6px 0 0 #aaa;"></div>
<div style="left:1616.6px;top:171.8px;width:8px;height:7px;background:#ece9d8;box-shadow:inset 1px 1px 0 #fff,inset -1px -1px 0 #7d7b6c;"></div>
<div class="t" style="top:173px;font-size:4.4px;line-height:4.4px;left:1420.6px;width:400px;text-align:center;">▴</div>
<div style="left:1616.6px;top:179.6px;width:8px;height:8.2px;background:#ece9d8;box-shadow:inset 1px 1px 0 #fff,inset -1px -1px 0 #7d7b6c;"></div>
<div style="left:1616.6px;top:250.4px;width:8px;height:7.2px;background:#ece9d8;box-shadow:inset 1px 1px 0 #fff,inset -1px -1px 0 #7d7b6c;"></div>
<div class="t" style="top:251.8px;font-size:4.4px;line-height:4.4px;left:1420.6px;width:400px;text-align:center;">▾</div>
<div style="left:1342.8px;top:171.4px;width:85.6px;height:6.4px;background:#e6e4d4;box-shadow:inset -1px -1px 0 #444, inset .6px .6px 0 #fff;"></div>
<div class="t" style="top:171.7px;font-size:6px;line-height:6px;color:#111;font-weight:bold;left:1344.8px;">测量名称</div>
<div style="left:1428.4px;top:171.4px;width:29.4px;height:6.4px;background:#e6e4d4;box-shadow:inset -1px -1px 0 #444, inset .6px .6px 0 #fff;"></div>
<div class="t" style="top:171.7px;font-size:6px;line-height:6px;color:#111;font-weight:bold;left:1430.4px;">平均值</div>
<div style="left:1457.8px;top:171.4px;width:33.4px;height:6.4px;background:#e6e4d4;box-shadow:inset -1px -1px 0 #444, inset .6px .6px 0 #fff;"></div>
<div class="t" style="top:171.7px;font-size:6px;line-height:6px;color:#111;font-weight:bold;left:1459.8px;">最大值</div>
<div style="left:1491.2px;top:171.4px;width:32px;height:6.4px;background:#e6e4d4;box-shadow:inset -1px -1px 0 #444, inset .6px .6px 0 #fff;"></div>
<div class="t" style="top:171.7px;font-size:6px;line-height:6px;color:#111;font-weight:bold;left:1493.2px;">最小值</div>
<div style="left:1523.2px;top:171.4px;width:31.6px;height:6.4px;background:#e6e4d4;box-shadow:inset -1px -1px 0 #444, inset .6px .6px 0 #fff;"></div>
<div class="t" style="top:171.7px;font-size:6px;line-height:6px;color:#111;font-weight:bold;left:1525.2px;">标准差值</div>
<div style="left:1554.8px;top:171.4px;width:31.4px;height:6.4px;background:#e6e4d4;box-shadow:inset -1px -1px 0 #444, inset .6px .6px 0 #fff;"></div>
<div class="t" style="top:171.7px;font-size:6px;line-height:6px;color:#111;font-weight:bold;left:1556.8px;">变异系数</div>
<div style="left:1342.8px;top:178px;width:85.6px;height:7.67px;background:#e9e7d8;box-shadow:inset -1.2px -1.2px 0 #333, inset .6px .6px 0 #fff;"></div>
<div class="t" style="top:178.94px;font-size:6px;line-height:6px;color:#111;font-weight:bold;left:1344.8px;">A(%)</div>
<div class="t" style="top:178.94px;font-size:6px;line-height:6px;color:#222;font-weight:bold;left:1055.8px;width:400px;text-align:right;">2.22</div>
<div class="t" style="top:178.94px;font-size:6px;line-height:6px;color:#222;font-weight:bold;left:1089.2px;width:400px;text-align:right;">20.00</div>
<div class="t" style="top:178.94px;font-size:6px;line-height:6px;color:#222;font-weight:bold;left:1121.2px;width:400px;text-align:right;">20.00</div>
<div class="t" style="top:178.94px;font-size:6px;line-height:6px;color:#222;font-weight:bold;left:1152.8px;width:400px;text-align:right;">6.667</div>
<div class="t" style="top:178.94px;font-size:6px;line-height:6px;color:#222;font-weight:bold;left:1184.2px;width:400px;text-align:right;">0.741</div>
<div style="left:1342.8px;top:185.87px;width:85.6px;height:7.67px;background:#e9e7d8;box-shadow:inset -1.2px -1.2px 0 #333, inset .6px .6px 0 #fff;"></div>
<div class="t" style="top:186.81px;font-size:6px;line-height:6px;color:#111;font-weight:bold;left:1344.8px;">Z(%)</div>
<div class="t" style="top:186.81px;font-size:6px;line-height:6px;color:#222;font-weight:bold;left:1055.8px;width:400px;text-align:right;">4.00</div>
<div class="t" style="top:186.81px;font-size:6px;line-height:6px;color:#222;font-weight:bold;left:1089.2px;width:400px;text-align:right;">36.00</div>
<div class="t" style="top:186.81px;font-size:6px;line-height:6px;color:#222;font-weight:bold;left:1121.2px;width:400px;text-align:right;">36.00</div>
<div class="t" style="top:186.81px;font-size:6px;line-height:6px;color:#222;font-weight:bold;left:1152.8px;width:400px;text-align:right;">12.000</div>
<div class="t" style="top:186.81px;font-size:6px;line-height:6px;color:#222;font-weight:bold;left:1184.2px;width:400px;text-align:right;">0.333</div>
<div style="left:1428.4px;top:185.57px;width:157.8px;height:0.5px;background:#d4d4d4;"></div>
<div style="left:1342.8px;top:193.74px;width:85.6px;height:7.67px;background:#e9e7d8;box-shadow:inset -1.2px -1.2px 0 #333, inset .6px .6px 0 #fff;"></div>
<div class="t" style="top:194.68px;font-size:6px;line-height:6px;color:#111;font-weight:bold;left:1344.8px;">Fm(kN)</div>
<div class="t" style="top:194.68px;font-size:6px;line-height:6px;color:#222;font-weight:bold;left:1055.8px;width:400px;text-align:right;">6.22</div>
<div class="t" style="top:194.68px;font-size:6px;line-height:6px;color:#222;font-weight:bold;left:1089.2px;width:400px;text-align:right;">55.98</div>
<div class="t" style="top:194.68px;font-size:6px;line-height:6px;color:#222;font-weight:bold;left:1121.2px;width:400px;text-align:right;">55.98</div>
<div class="t" style="top:194.68px;font-size:6px;line-height:6px;color:#222;font-weight:bold;left:1152.8px;width:400px;text-align:right;">17.933</div>
<div class="t" style="top:194.68px;font-size:6px;line-height:6px;color:#222;font-weight:bold;left:1184.2px;width:400px;text-align:right;">0.289</div>
<div style="left:1428.4px;top:193.44px;width:157.8px;height:0.5px;background:#d4d4d4;"></div>
<div style="left:1342.8px;top:201.61px;width:85.6px;height:7.67px;background:#e9e7d8;box-shadow:inset -1.2px -1.2px 0 #333, inset .6px .6px 0 #fff;"></div>
<div class="t" style="top:202.55px;font-size:6px;line-height:6px;color:#111;font-weight:bold;left:1344.8px;">Rm(MPa)</div>
<div class="t" style="top:202.55px;font-size:6px;line-height:6px;color:#222;font-weight:bold;left:1055.8px;width:400px;text-align:right;">55.41</div>
<div class="t" style="top:202.55px;font-size:6px;line-height:6px;color:#222;font-weight:bold;left:1089.2px;width:400px;text-align:right;">495.00</div>
<div class="t" style="top:202.55px;font-size:6px;line-height:6px;color:#222;font-weight:bold;left:1121.2px;width:400px;text-align:right;">495.00</div>
<div class="t" style="top:202.55px;font-size:6px;line-height:6px;color:#222;font-weight:bold;left:1152.8px;width:400px;text-align:right;">159.333</div>
<div class="t" style="top:202.55px;font-size:6px;line-height:6px;color:#222;font-weight:bold;left:1184.2px;width:400px;text-align:right;">35.750</div>
<div style="left:1428.4px;top:201.31px;width:157.8px;height:0.5px;background:#d4d4d4;"></div>
<div style="left:1342.8px;top:209.48px;width:85.6px;height:7.67px;background:#e9e7d8;box-shadow:inset -1.2px -1.2px 0 #333, inset .6px .6px 0 #fff;"></div>
<div class="t" style="top:210.41px;font-size:6px;line-height:6px;color:#111;font-weight:bold;left:1344.8px;">FeH(kN)</div>
<div class="t" style="top:210.41px;font-size:6px;line-height:6px;color:#222;font-weight:bold;left:1055.8px;width:400px;text-align:right;">2.37</div>
<div class="t" style="top:210.41px;font-size:6px;line-height:6px;color:#222;font-weight:bold;left:1089.2px;width:400px;text-align:right;">21.37</div>
<div class="t" style="top:210.41px;font-size:6px;line-height:6px;color:#222;font-weight:bold;left:1121.2px;width:400px;text-align:right;">21.37</div>
<div class="t" style="top:210.41px;font-size:6px;line-height:6px;color:#222;font-weight:bold;left:1152.8px;width:400px;text-align:right;">7.123</div>
<div class="t" style="top:210.41px;font-size:6px;line-height:6px;color:#222;font-weight:bold;left:1184.2px;width:400px;text-align:right;">0.789</div>
<div style="left:1428.4px;top:209.18px;width:157.8px;height:0.5px;background:#d4d4d4;"></div>
<div style="left:1342.8px;top:217.35px;width:85.6px;height:7.67px;background:#e9e7d8;box-shadow:inset -1.2px -1.2px 0 #333, inset .6px .6px 0 #fff;"></div>
<div class="t" style="top:218.28px;font-size:6px;line-height:6px;color:#111;font-weight:bold;left:1344.8px;">ReH(MPa)</div>
<div class="t" style="top:218.28px;font-size:6px;line-height:6px;color:#222;font-weight:bold;left:1055.8px;width:400px;text-align:right;">30.00</div>
<div class="t" style="top:218.28px;font-size:6px;line-height:6px;color:#222;font-weight:bold;left:1089.2px;width:400px;text-align:right;">270.00</div>
<div class="t" style="top:218.28px;font-size:6px;line-height:6px;color:#222;font-weight:bold;left:1121.2px;width:400px;text-align:right;">270.00</div>
<div class="t" style="top:218.28px;font-size:6px;line-height:6px;color:#222;font-weight:bold;left:1152.8px;width:400px;text-align:right;">90.000</div>
<div class="t" style="top:218.28px;font-size:6px;line-height:6px;color:#222;font-weight:bold;left:1184.2px;width:400px;text-align:right;">30.000</div>
<div style="left:1428.4px;top:217.05px;width:157.8px;height:0.5px;background:#d4d4d4;"></div>
<div style="left:1342.8px;top:225.22px;width:85.6px;height:7.67px;background:#e9e7d8;box-shadow:inset -1.2px -1.2px 0 #333, inset .6px .6px 0 #fff;"></div>
<div class="t" style="top:226.16px;font-size:6px;line-height:6px;color:#111;font-weight:bold;left:1344.8px;">FeL(kN)</div>
<div class="t" style="top:226.16px;font-size:6px;line-height:6px;color:#222;font-weight:bold;left:1055.8px;width:400px;text-align:right;">3.50</div>
<div class="t" style="top:226.16px;font-size:6px;line-height:6px;color:#222;font-weight:bold;left:1089.2px;width:400px;text-align:right;">31.48</div>
<div class="t" style="top:226.16px;font-size:6px;line-height:6px;color:#222;font-weight:bold;left:1121.2px;width:400px;text-align:right;">31.48</div>
<div class="t" style="top:226.16px;font-size:6px;line-height:6px;color:#222;font-weight:bold;left:1152.8px;width:400px;text-align:right;">10.493</div>
<div class="t" style="top:226.16px;font-size:6px;line-height:6px;color:#222;font-weight:bold;left:1184.2px;width:400px;text-align:right;">0.180</div>
<div style="left:1428.4px;top:224.92px;width:157.8px;height:0.5px;background:#d4d4d4;"></div>
<div style="left:1342.8px;top:233.09px;width:85.6px;height:7.67px;background:#e9e7d8;box-shadow:inset -1.2px -1.2px 0 #333, inset .6px .6px 0 #fff;"></div>
<div class="t" style="top:234.03px;font-size:6px;line-height:6px;color:#111;font-weight:bold;left:1344.8px;">ReL(MPa)</div>
<div class="t" style="top:234.03px;font-size:6px;line-height:6px;color:#222;font-weight:bold;left:1055.8px;width:400px;text-align:right;">44.44</div>
<div class="t" style="top:234.03px;font-size:6px;line-height:6px;color:#222;font-weight:bold;left:1089.2px;width:400px;text-align:right;">400.00</div>
<div class="t" style="top:234.03px;font-size:6px;line-height:6px;color:#222;font-weight:bold;left:1121.2px;width:400px;text-align:right;">400.00</div>
<div class="t" style="top:234.03px;font-size:6px;line-height:6px;color:#222;font-weight:bold;left:1152.8px;width:400px;text-align:right;">133.333</div>
<div class="t" style="top:234.03px;font-size:6px;line-height:6px;color:#222;font-weight:bold;left:1184.2px;width:400px;text-align:right;">34.035</div>
<div style="left:1428.4px;top:232.79px;width:157.8px;height:0.5px;background:#d4d4d4;"></div>
<div style="left:1342.8px;top:240.96px;width:85.6px;height:7.67px;background:#e9e7d8;box-shadow:inset -1.2px -1.2px 0 #333, inset .6px .6px 0 #fff;"></div>
<div class="t" style="top:241.9px;font-size:6px;line-height:6px;color:#111;font-weight:bold;left:1344.8px;">Fp(kN)</div>
<div class="t" style="top:241.9px;font-size:6px;line-height:6px;color:#222;font-weight:bold;left:1055.8px;width:400px;text-align:right;">3.50</div>
<div class="t" style="top:241.9px;font-size:6px;line-height:6px;color:#222;font-weight:bold;left:1089.2px;width:400px;text-align:right;">31.48</div>
<div class="t" style="top:241.9px;font-size:6px;line-height:6px;color:#222;font-weight:bold;left:1121.2px;width:400px;text-align:right;">31.48</div>
<div class="t" style="top:241.9px;font-size:6px;line-height:6px;color:#222;font-weight:bold;left:1152.8px;width:400px;text-align:right;">10.493</div>
<div class="t" style="top:241.9px;font-size:6px;line-height:6px;color:#222;font-weight:bold;left:1184.2px;width:400px;text-align:right;">0.180</div>
<div style="left:1428.4px;top:240.66px;width:157.8px;height:0.5px;background:#d4d4d4;"></div>
<div style="left:1342.8px;top:248.83px;width:85.6px;height:7.67px;background:#e9e7d8;box-shadow:inset -1.2px -1.2px 0 #333, inset .6px .6px 0 #fff;"></div>
<div class="t" style="top:249.76px;font-size:6px;line-height:6px;color:#111;font-weight:bold;left:1344.8px;">Rp(MPa)</div>
<div class="t" style="top:249.76px;font-size:6px;line-height:6px;color:#222;font-weight:bold;left:1055.8px;width:400px;text-align:right;">44.44</div>
<div class="t" style="top:249.76px;font-size:6px;line-height:6px;color:#222;font-weight:bold;left:1089.2px;width:400px;text-align:right;">400.00</div>
<div class="t" style="top:249.76px;font-size:6px;line-height:6px;color:#222;font-weight:bold;left:1121.2px;width:400px;text-align:right;">400.00</div>
<div class="t" style="top:249.76px;font-size:6px;line-height:6px;color:#222;font-weight:bold;left:1152.8px;width:400px;text-align:right;">133.333</div>
<div class="t" style="top:249.76px;font-size:6px;line-height:6px;color:#222;font-weight:bold;left:1184.2px;width:400px;text-align:right;">34.035</div>
<div style="left:1428.4px;top:248.53px;width:157.8px;height:0.5px;background:#d4d4d4;"></div>
<div style="left:1457.5px;top:177.8px;width:0.6px;height:80.2px;background:#d4d4d4;"></div>
<div style="left:1490.9px;top:177.8px;width:0.6px;height:80.2px;background:#d4d4d4;"></div>
<div style="left:1522.9px;top:177.8px;width:0.6px;height:80.2px;background:#d4d4d4;"></div>
<div style="left:1554.5px;top:177.8px;width:0.6px;height:80.2px;background:#d4d4d4;"></div>
<div style="left:1630px;top:33.2px;width:124.4px;height:195.4px;background:#fff;box-shadow:inset .9px .9px 0 #8e8c7e,inset -0.5px -0.5px 0 #f8f8f0;"></div>
<div style="left:1635.4px;top:237.8px;width:35.6px;height:15px;background:#f2f0e4;box-shadow:inset 0 0 0 1.3px #3a3a34, inset -2px -2px 0 #8a8878;"></div>
<div class="t" style="top:242.7px;font-size:5.4px;line-height:5.4px;color:#111;font-weight:bold;left:1453px;width:400px;text-align:center;">预览...</div>
<div style="left:1672.4px;top:238.4px;width:35px;height:13.8px;background:#f2f0e4;box-shadow:inset .8px .8px 0 #fff,inset -1px -1px 0 #8a8878;"></div>
<div class="t" style="top:242.6px;font-size:5.4px;line-height:5.4px;color:#c8c6b6;font-weight:bold;left:1489.9px;width:400px;text-align:center;">打印</div>
<div style="left:1709.4px;top:238.4px;width:36px;height:13.8px;background:#f2f0e4;box-shadow:inset .8px .8px 0 #fff,inset -1px -1px 0 #8a8878;"></div>
<div class="t" style="top:242.6px;font-size:5.4px;line-height:5.4px;color:#c8c6b6;font-weight:bold;left:1527.4px;width:400px;text-align:center;">关闭</div>
<div class="t" style="top:268.22px;font-size:18.35px;line-height:18.35px;color:#7e7e7e;left:1339.6px;text-shadow:0 0 .7px #9a9a9a;word-spacing:1.5px;">根据客户实际需求任意编辑 Excel 文本报表格式</div>
<div style="left:1341px;top:296.9px;width:416.6px;height:356.3px;background:#ece9d8;box-shadow:inset 1.2px 0 0 #2c5cc0, inset -2px -1.4px 0 #11269a;"></div>
<div style="left:1341px;top:296.9px;width:416.6px;height:18.1px;background:linear-gradient(#0b5bd6,#0a52c6 45%,#0846b2);"></div>
<div class="t" style="top:301.7px;font-size:7.8px;line-height:7.8px;color:#fff;font-weight:bold;letter-spacing:2.6px;left:1344px;">打开纪录集</div>
<div style="left:1344.4px;top:320px;width:308px;height:165.2px;box-shadow:inset 0 0 0 1px #c9c6b4, 1px 1px 0 #fff;"></div>
<div style="left:1347.6px;top:316px;width:19.9px;height:8px;background:#ece9d8;"></div>
<div class="t" style="top:315.7px;font-size:8.2px;line-height:8.2px;color:#111;font-weight:bold;left:1349px;">条件</div>
<svg style="left:1356.4px;top:332.4px;" width="6" height="6" viewBox="0 0 6 6"><circle cx="3" cy="3" r="2.5" fill="#fff" stroke="#777" stroke-width=".7"/><circle cx="3" cy="3" r="1.1" fill="#222"/></svg>
<div class="t" style="top:331.15px;font-size:8.5px;line-height:8.5px;color:#111;font-weight:bold;left:1369px;">查询条件</div>
<div style="left:1436px;top:329.8px;width:203.2px;height:11.2px;background:#fff;box-shadow:inset .9px .9px 0 #777;"></div>
<div style="left:1437.2px;top:331px;width:192.4px;height:8.8px;background:#1c50b4;"></div>
<div class="t" style="top:331.4px;font-size:8px;line-height:8px;color:#c8d8ff;font-weight:bold;left:1439.6px;">试样批号</div>
<div style="left:1630.4px;top:331px;width:8px;height:8.8px;background:#ece9d8;box-shadow:inset 1px 1px 0 #fff,inset -1px -1px 0 #7d7b6c;"></div>
<div class="t" style="top:332.7px;font-size:5.4px;line-height:5.4px;left:1434.4px;width:400px;text-align:center;">▾</div>
<div class="t" style="top:354.55px;font-size:8.5px;line-height:8.5px;color:#111;font-weight:bold;left:1367.4px;">查询范围</div>
<div class="t" style="top:354.35px;font-size:8.5px;line-height:8.5px;color:#111;font-weight:bold;left:1424.6px;">从</div>
<div style="left:1436px;top:352.6px;width:203.2px;height:13px;background:#fff;box-shadow:inset .9px .9px 0 #8e8c7e,inset -0.5px -0.5px 0 #f8f8f0;"></div>
<div class="t" style="top:354.7px;font-size:8.2px;line-height:8.2px;color:#222;left:1438.6px;">2011-6-24</div>
<div style="left:1630.4px;top:353.8px;width:8px;height:10.8px;background:#ece9d8;box-shadow:inset 1px 1px 0 #fff,inset -1px -1px 0 #7d7b6c;"></div>
<div class="t" style="top:358.5px;font-size:5px;line-height:5px;left:1434.4px;width:400px;text-align:center;">…</div>
<div class="t" style="top:370.15px;font-size:8.5px;line-height:8.5px;color:#111;font-weight:bold;left:1424.6px;">到</div>
<div style="left:1436px;top:368.4px;width:203.2px;height:12.4px;background:#fff;box-shadow:inset .9px .9px 0 #8e8c7e,inset -0.5px -0.5px 0 #f8f8f0;"></div>
<div style="left:1630.4px;top:369.6px;width:8px;height:10.2px;background:#ece9d8;box-shadow:inset 1px 1px 0 #fff,inset -1px -1px 0 #7d7b6c;"></div>
<div class="t" style="top:373.9px;font-size:5px;line-height:5px;left:1434.4px;width:400px;text-align:center;">…</div>
<div style="left:1436px;top:389.6px;width:203.2px;height:68.2px;background:#fff;box-shadow:inset .9px .9px 0 #8e8c7e,inset -0.5px -0.5px 0 #f8f8f0;"></div>
<div class="t" style="top:390.2px;font-size:7.6px;line-height:7.6px;color:#111;font-weight:bold;left:1166.6px;width:400px;text-align:center;">查</div>
<div class="t" style="top:398.8px;font-size:7.6px;line-height:7.6px;color:#111;font-weight:bold;left:1166.6px;width:400px;text-align:center;">询</div>
<div class="t" style="top:407.4px;font-size:7.6px;line-height:7.6px;color:#111;font-weight:bold;left:1166.6px;width:400px;text-align:center;">条</div>
<div class="t" style="top:416px;font-size:7.6px;line-height:7.6px;color:#111;font-weight:bold;left:1166.6px;width:400px;text-align:center;">件</div>
<div class="t" style="top:424.6px;font-size:7.6px;line-height:7.6px;color:#111;font-weight:bold;left:1166.6px;width:400px;text-align:center;">列</div>
<div class="t" style="top:433.2px;font-size:7.6px;line-height:7.6px;color:#111;font-weight:bold;left:1166.6px;width:400px;text-align:center;">表</div>
<div style="left:1379px;top:390.4px;width:52px;height:13.8px;background:#f2f0e4;box-shadow:inset .8px .8px 0 #fff,inset -1px -1px 0 #8a8878;"></div>
<div class="t" style="top:393.1px;font-size:8.4px;line-height:8.4px;font-weight:bold;left:1205px;width:400px;text-align:center;">添加 &gt;&gt;</div>
<div style="left:1379px;top:411px;width:52px;height:15px;background:#f2f0e4;box-shadow:inset .8px .8px 0 #fff,inset -1px -1px 0 #8a8878;"></div>
<div class="t" style="top:414.3px;font-size:8.4px;line-height:8.4px;font-weight:bold;left:1205px;width:400px;text-align:center;">删除 &lt;&lt;</div>
<svg style="left:1356.4px;top:465.8px;" width="6" height="6" viewBox="0 0 6 6"><circle cx="3" cy="3" r="2.5" fill="#fff" stroke="#777" stroke-width=".7"/></svg>
<div class="t" style="top:464.55px;font-size:8.5px;line-height:8.5px;color:#111;font-weight:bold;left:1369px;">按文件方式</div>
<div style="left:1436px;top:462.6px;width:203.2px;height:13px;background:#fff;box-shadow:inset .9px .9px 0 #8e8c7e,inset -0.5px -0.5px 0 #f8f8f0;"></div>
<div style="left:1630.4px;top:463.8px;width:8px;height:10.8px;background:#ece9d8;box-shadow:inset 1px 1px 0 #fff,inset -1px -1px 0 #7d7b6c;"></div>
<div class="t" style="top:468.5px;font-size:5px;line-height:5px;left:1434.4px;width:400px;text-align:center;">…</div>
<div style="left:1669.6px;top:325px;width:66.2px;height:16px;background:#f2f0e4;box-shadow:inset 0 0 0 1px #333, inset -2px -2px 0 #8a8878;"></div>
<div class="t" style="top:328.95px;font-size:8.5px;line-height:8.5px;color:#111;font-weight:bold;left:1502.8px;width:400px;text-align:center;">确定</div>
<div style="left:1669.6px;top:345px;width:66.2px;height:16px;background:#f2f0e4;box-shadow:inset .8px .8px 0 #fff,inset -1px -1px 0 #8a8878;"></div>
<div class="t" style="top:348.75px;font-size:8.5px;line-height:8.5px;font-weight:bold;left:1502.7px;width:400px;text-align:center;">取消</div>
<div style="left:1669.6px;top:378.4px;width:66.2px;height:16.2px;background:#f2f0e4;box-shadow:inset .8px .8px 0 #fff,inset -1px -1px 0 #8a8878;"></div>
<div class="t" style="top:382.25px;font-size:8.5px;line-height:8.5px;font-weight:bold;left:1502.7px;width:400px;text-align:center;">浏览 (B)</div>
<div style="left:1343px;top:490px;width:410px;height:135.6px;background:#73777b;"></div>
<div style="left:1343px;top:490px;width:410px;height:13.6px;background:#0c4cc4;"></div>
<div style="left:1343.6px;top:490.6px;width:11.4px;height:12.4px;background:#f4f2e8;box-shadow:inset 0 0 0 .7px #666;"></div>
<div class="t" style="top:494px;font-size:5.6px;line-height:5.6px;color:#333;left:1149.3px;width:400px;text-align:center;">⊞</div>
<div class="t" style="top:493.1px;font-size:7.6px;line-height:7.6px;color:#c4d4ff;font-weight:bold;left:1357.6px;">试件批号</div>
<div class="t" style="top:493.1px;font-size:7.6px;line-height:7.6px;color:#c4d4ff;font-weight:bold;left:1401.6px;">钢号</div>
<div class="t" style="top:493.1px;font-size:7.6px;line-height:7.6px;color:#c4d4ff;font-weight:bold;left:1445.2px;">试验日期</div>
<div class="t" style="top:493.1px;font-size:7.6px;line-height:7.6px;color:#c4d4ff;font-weight:bold;left:1489.6px;">试验人</div>
<div class="t" style="top:493.1px;font-size:7.6px;line-height:7.6px;color:#c4d4ff;font-weight:bold;left:1533.6px;">试件形状</div>
<div class="t" style="top:493.1px;font-size:7.6px;line-height:7.6px;color:#c4d4ff;font-weight:bold;left:1576.6px;">尺寸(mm)</div>
<div class="t" style="top:493.1px;font-size:7.6px;line-height:7.6px;color:#c4d4ff;font-weight:bold;left:1620.6px;">So(mm^2)</div>
<div class="t" style="top:493.1px;font-size:7.6px;line-height:7.6px;color:#c4d4ff;font-weight:bold;left:1665.6px;">切距/速率</div>
<div style="left:1398.6px;top:490.6px;width:0.8px;height:12.4px;background:#08309a;"></div>
<div style="left:1442.6px;top:490.6px;width:0.8px;height:12.4px;background:#08309a;"></div>
<div style="left:1487px;top:490.6px;width:0.8px;height:12.4px;background:#08309a;"></div>
<div style="left:1531px;top:490.6px;width:0.8px;height:12.4px;background:#08309a;"></div>
<div style="left:1574px;top:490.6px;width:0.8px;height:12.4px;background:#08309a;"></div>
<div style="left:1618px;top:490.6px;width:0.8px;height:12.4px;background:#08309a;"></div>
<div style="left:1663px;top:490.6px;width:0.8px;height:12.4px;background:#08309a;"></div>
<div style="left:1707px;top:490.6px;width:0.8px;height:12.4px;background:#08309a;"></div>
<div style="left:1708px;top:490.6px;width:42.6px;height:12.4px;background:#f4f2e8;"></div>
<div class="t" style="top:493.4px;font-size:7px;line-height:7px;color:#222;font-weight:bold;left:1710.4px;">Lo (mm)</div>
<div style="left:1347px;top:631px;width:111.4px;height:16.2px;background:#f2f0e4;box-shadow:inset .8px .8px 0 #fff,inset -1px -1px 0 #8a8878;"></div>
<div class="t" style="top:635px;font-size:8.2px;line-height:8.2px;font-weight:bold;left:1202.7px;width:400px;text-align:center;">删除全部记录 (A)</div>
<div style="left:1553px;top:636px;width:7px;height:7px;background:#fff;box-shadow:inset .9px .9px 0 #777;"></div>
<div class="t" style="top:635.15px;font-size:8.5px;line-height:8.5px;color:#111;font-weight:bold;left:1566px;">删除前不提示</div>
<div style="left:1635px;top:631px;width:114.2px;height:16.2px;background:#f2f0e4;box-shadow:inset .8px .8px 0 #fff,inset -1px -1px 0 #8a8878;"></div>
<div class="t" style="top:635px;font-size:8.2px;line-height:8.2px;font-weight:bold;left:1492.1px;width:400px;text-align:center;">删除选择的记录 (D)</div>
<div class="t" style="top:662.45px;font-size:18.3px;line-height:18.3px;color:#7e7e7e;left:1340.8px;text-shadow:0 0 .7px #9a9a9a;">可根据相关内容自动查询所有相关历史记录</div>
<svg style="left:1753px;top:678px;" width="5" height="10" viewBox="0 0 5 10"><path d="M4.4 .5C.6 2.6 .4 7 2.6 9.6" stroke="#777" stroke-width=".7" fill="none"/></svg>
</div></body></html>
